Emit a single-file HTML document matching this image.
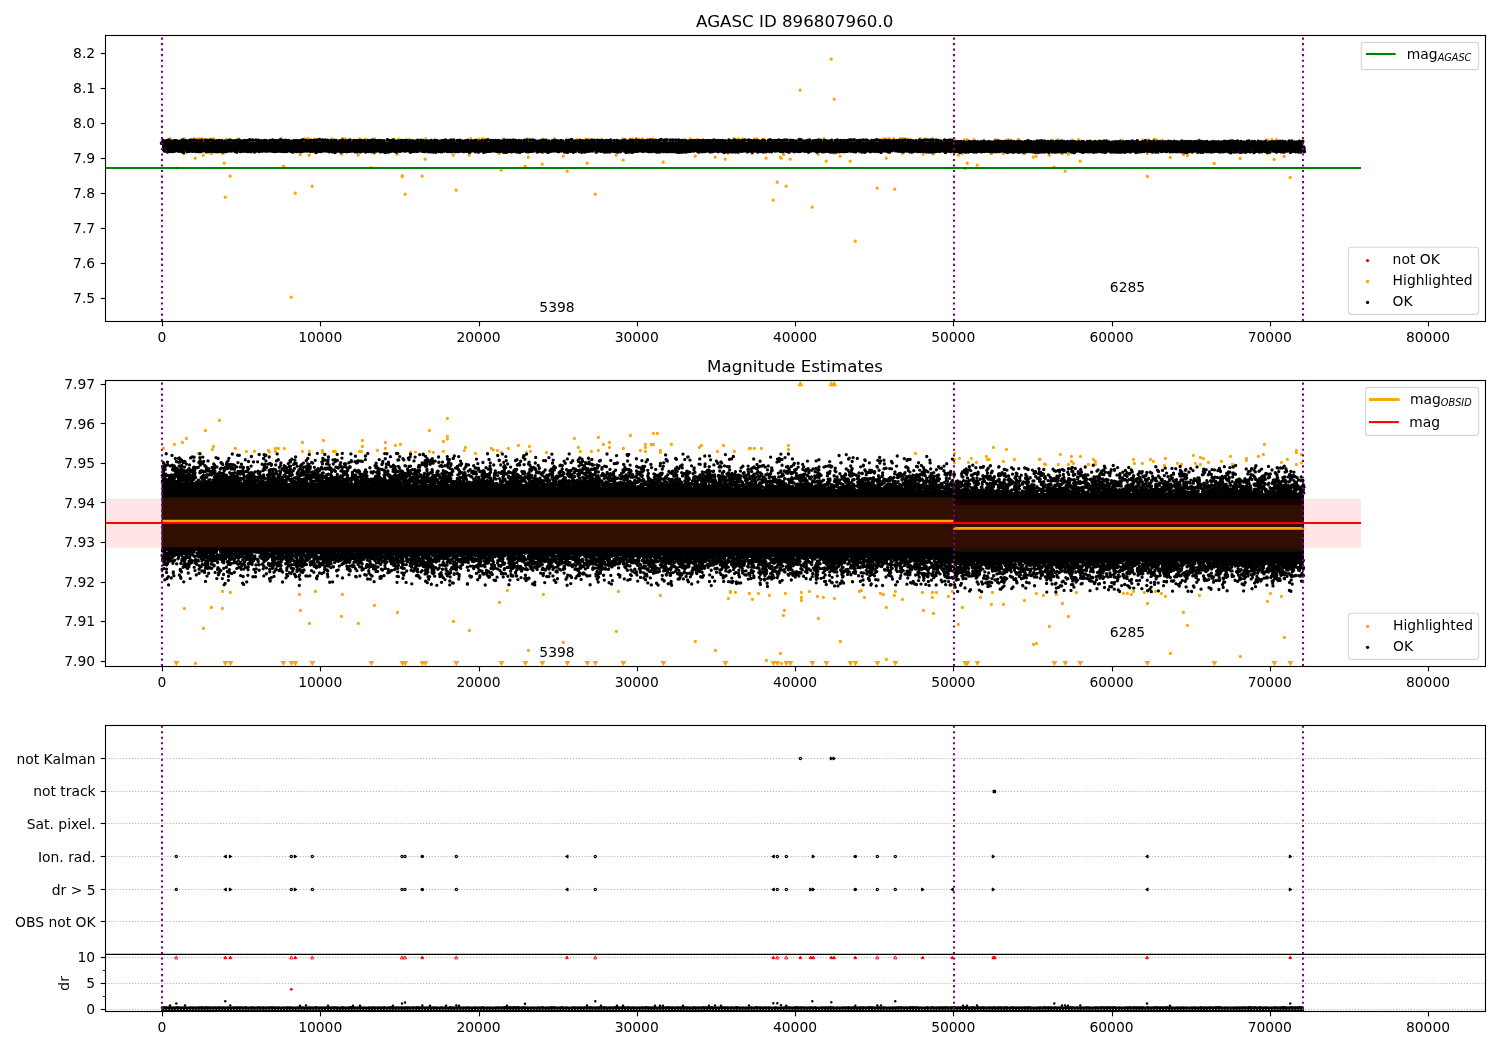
<!DOCTYPE html>
<html><head><meta charset="utf-8"><title>AGASC ID 896807960.0</title>
<style>html,body{margin:0;padding:0;background:#fff}svg{display:block;will-change:transform}</style></head>
<body>
<svg width="1500" height="1050" viewBox="0 0 1500 1050" font-family='"DejaVu Sans", "Liberation Sans", sans-serif' font-size="13.89px" fill="#000">
<rect width="1500" height="1050" fill="#fff"/>
<clipPath id="c1"><rect x="105.5" y="35.5" width="1380.0" height="286.0"/></clipPath>
<g clip-path="url(#c1)">
<path d="M176.5 167.9h0M184.2 153.7h0M195.2 158.2h0M203.2 155.2h0M211.5 153.5h0M222.5 153.5h0M224.2 163.2h0M230.2 176.2h0M225.2 197.2h0M283.5 166.2h0M300.2 154.5h0M309.2 155.2h0M315.2 152.5h0M312.2 186.2h0M295.2 193.2h0M291.2 297.2h0M341.5 154.2h0M358.2 155.2h0M374.2 153.2h0M371.2 167.6h0M397.2 154.2h0M402.2 175.7h0M402.2 176.7h0M405.2 194.2h0M422.2 176.2h0M425.2 159.2h0M453.2 155.2h0M456.2 190.2h0M469.2 155.2h0M499.2 153.5h0M501.2 170.2h0M507.0 152.5h0M525.2 166.2h0M528.2 157.2h0M542.2 164.2h0M543.2 152.5h0M563.2 156.2h0M567.2 171.2h0M587.2 163.2h0M595.2 194.2h0M616.2 155.2h0M623.2 160.2h0M660.2 152.5h0M663.2 162.2h0M695.2 156.2h0M715.2 157.2h0M725.2 159.2h0M728.2 153.2h0M752.2 153.5h0M766.2 158.2h0M780.2 157.2h0M781.2 158.2h0M783.7 154.5h0M790.2 159.2h0M777.2 182.2h0M786.2 186.2h0M773.2 200.2h0M812.2 207.2h0M818.2 154.2h0M826.2 161.2h0M834.2 153.2h0M840.2 156.2h0M850.2 161.2h0M855.2 241.2h0M877.2 188.2h0M886.2 158.2h0M894.7 189.2h0M831.2 59.2h0M800.2 90.2h0M834.2 99.2h0M902.2 153.2h0M923.2 154.2h0M933.2 154.2h0M958.2 155.2h0M962.2 153.7h0M967.2 163.2h0M977.2 165.2h0M965.2 168.7h0M991.2 153.7h0M1003.2 153.7h0M1024.2 153.7h0M1033.2 157.2h0M1036.2 156.2h0M1049.2 155.2h0M1054.2 167.2h0M1065.2 171.2h0M1062.2 153.7h0M1068.2 154.2h0M1080.2 161.2h0M1147.4 176.4h0M1147.4 153.6h0M1170.2 157.4h0M1183.4 154.6h0M1187.4 155.6h0M1214.2 163.4h0M1240.2 158.4h0M1267.4 153.6h0M1274.2 159.4h0M1284.2 156.4h0M1290.2 177.4h0" stroke="#ffa500" stroke-width="3.3" stroke-linecap="round" fill="none" />
<path d="M170.3 138.7h0M183.9 138.7h0M194.3 138.9h0M197.0 139.1h0M199.4 139.0h0M202.2 138.7h0M210.3 139.3h0M213.7 138.8h0M226.6 139.5h0M238.1 139.0h0M281.2 138.6h0M304.7 138.9h0M308.4 138.7h0M314.5 139.3h0M318.7 139.1h0M331.9 138.9h0M342.6 138.7h0M345.3 138.8h0M359.8 139.0h0M366.0 139.1h0M374.6 138.9h0M394.0 139.2h0M399.1 139.1h0M409.3 139.4h0M425.7 138.9h0M470.8 138.7h0M478.8 139.3h0M482.6 139.0h0M485.0 139.2h0M502.9 139.1h0M527.8 138.9h0M542.9 139.1h0M554.4 139.0h0M576.6 139.5h0M585.7 139.2h0M588.4 139.2h0M601.8 139.5h0M622.8 138.9h0M630.2 139.2h0M632.4 139.0h0M636.4 138.7h0M639.1 139.3h0M642.6 138.8h0M650.1 139.4h0M653.0 139.0h0M663.8 139.4h0M684.6 139.4h0M690.2 139.0h0M697.1 139.4h0M733.9 138.7h0M738.0 138.8h0M742.9 139.0h0M754.7 138.8h0M756.8 139.0h0M763.8 139.1h0M799.5 139.2h0M809.5 139.2h0M823.9 138.6h0M851.1 139.3h0M876.0 139.3h0M883.4 139.0h0M886.7 139.2h0M889.4 138.7h0M893.9 138.7h0M900.5 138.6h0M902.5 138.7h0M905.7 138.9h0M908.0 139.4h0M920.4 138.7h0M925.6 138.9h0M932.6 138.7h0M955.4 140.4h0M964.3 139.9h0M967.3 139.6h0M973.9 139.7h0M995.3 139.6h0M997.6 140.4h0M1007.9 139.6h0M1018.5 139.5h0M1028.7 140.4h0M1052.6 140.1h0M1058.0 139.8h0M1062.0 140.2h0M1072.3 140.2h0M1078.7 139.7h0M1099.1 140.4h0M1122.1 140.2h0M1142.9 140.2h0M1147.7 140.0h0M1154.6 139.5h0M1156.9 139.8h0M1162.2 140.1h0M1198.7 139.9h0M1231.1 140.4h0M1267.2 139.8h0M1271.9 139.7h0M1276.3 139.7h0M1289.1 140.3h0" stroke="#ffa500" stroke-width="3.3" stroke-linecap="round" fill="none" />
<rect x="162.0" y="141.4" width="791.5" height="9.8" fill="#000"/>
<rect x="953" y="142.1" width="350.0" height="9.3" fill="#000"/>
<path d="M163.0 140.6h0M164.7 151.0h0M166.0 140.9h0M167.5 151.8h0M168.6 140.2h0M170.3 151.3h0M171.7 141.1h0M172.7 151.4h0M174.6 140.7h0M175.3 151.0h0M176.7 140.9h0M178.7 151.1h0M180.1 141.1h0M181.4 151.3h0M182.6 140.1h0M183.5 152.3h0M185.5 140.5h0M187.2 151.4h0M188.6 140.8h0M189.3 151.2h0M190.8 140.2h0M192.5 151.2h0M193.7 140.1h0M195.6 151.3h0M196.6 140.6h0M198.4 151.4h0M199.8 140.5h0M200.8 151.5h0M201.7 140.4h0M203.3 150.7h0M205.3 140.1h0M206.4 151.7h0M207.9 140.3h0M209.2 151.5h0M210.9 140.0h0M212.1 151.2h0M213.2 140.7h0M214.8 151.5h0M216.5 140.9h0M217.5 151.6h0M219.0 140.5h0M220.6 151.4h0M221.8 140.5h0M223.6 151.7h0M225.0 141.0h0M225.8 151.5h0M227.8 140.8h0M228.4 151.0h0M230.1 140.0h0M231.3 150.9h0M233.2 140.8h0M234.8 151.1h0M236.0 140.6h0M236.8 152.0h0M239.1 140.2h0M240.5 151.4h0M241.4 141.1h0M243.1 151.1h0M244.1 140.5h0M245.4 151.1h0M246.8 140.7h0M247.9 151.5h0M249.7 139.8h0M251.0 151.6h0M252.6 140.0h0M254.5 151.8h0M255.9 140.0h0M256.6 150.8h0M258.5 140.3h0M259.2 151.4h0M261.4 140.8h0M262.2 151.1h0M264.2 140.6h0M265.4 151.0h0M266.2 140.7h0M267.9 150.9h0M269.8 140.6h0M271.1 151.0h0M272.6 140.0h0M274.0 151.4h0M274.8 140.5h0M276.8 151.2h0M277.4 140.5h0M278.9 151.0h0M280.3 139.9h0M281.7 151.3h0M283.2 140.7h0M284.6 151.5h0M285.9 140.4h0M287.1 151.2h0M288.5 140.7h0M290.5 151.1h0M291.8 141.0h0M292.8 151.9h0M294.5 140.5h0M296.3 151.4h0M297.4 140.7h0M299.3 151.3h0M300.5 140.7h0M301.7 151.4h0M302.8 139.9h0M304.0 150.9h0M306.0 140.3h0M306.9 151.0h0M308.9 140.9h0M310.2 151.3h0M311.1 140.3h0M312.8 151.1h0M314.1 140.3h0M316.1 152.3h0M317.0 140.2h0M318.9 151.3h0M319.7 139.7h0M321.1 151.5h0M322.6 140.2h0M324.0 150.7h0M325.2 140.0h0M326.7 150.9h0M327.7 140.3h0M329.3 151.6h0M331.0 140.7h0M332.6 151.7h0M334.2 140.4h0M335.0 152.3h0M336.2 140.7h0M338.1 150.9h0M339.7 140.9h0M340.9 151.8h0M342.5 140.1h0M343.6 151.5h0M345.3 140.8h0M346.7 151.6h0M348.2 140.7h0M349.4 151.2h0M350.1 140.1h0M351.9 151.0h0M353.7 140.5h0M354.9 151.6h0M356.4 140.5h0M357.1 151.8h0M359.2 140.5h0M360.4 151.7h0M361.4 140.7h0M363.0 150.9h0M364.4 140.7h0M365.7 151.8h0M367.9 140.5h0M368.7 151.5h0M370.4 140.7h0M371.7 151.6h0M372.6 140.1h0M374.2 151.8h0M375.6 140.6h0M376.7 150.9h0M378.4 140.6h0M380.2 151.7h0M381.2 140.5h0M382.8 151.4h0M383.8 140.9h0M385.3 152.3h0M387.4 139.8h0M388.4 151.9h0M390.3 140.5h0M391.0 151.2h0M393.0 140.2h0M394.1 151.1h0M395.4 141.0h0M396.4 151.9h0M398.2 140.9h0M399.8 151.2h0M401.4 140.5h0M401.9 150.7h0M403.8 140.5h0M405.0 151.1h0M406.4 140.3h0M408.3 150.7h0M409.7 140.8h0M410.4 152.1h0M412.4 140.9h0M413.4 151.4h0M414.9 141.2h0M416.5 151.3h0M417.7 140.3h0M418.7 151.0h0M420.9 140.3h0M422.4 151.2h0M423.2 140.5h0M424.5 151.4h0M426.7 140.9h0M427.9 151.6h0M429.4 141.0h0M430.4 151.7h0M431.3 140.7h0M433.2 151.8h0M434.7 140.3h0M435.5 152.1h0M437.0 140.5h0M438.6 151.3h0M440.4 141.1h0M441.4 151.7h0M442.8 140.5h0M444.3 151.1h0M445.5 140.2h0M447.6 151.5h0M448.3 140.9h0M450.5 151.4h0M451.0 140.2h0M452.4 151.3h0M453.8 140.2h0M455.4 151.6h0M457.4 140.7h0M458.3 151.4h0M459.8 140.4h0M461.0 150.9h0M462.4 141.1h0M463.6 151.5h0M465.5 140.9h0M466.5 151.2h0M467.9 140.4h0M469.5 152.2h0M471.3 140.9h0M471.9 150.8h0M474.0 140.9h0M475.2 151.6h0M476.1 140.4h0M478.4 151.9h0M479.8 141.1h0M480.5 151.0h0M481.9 140.5h0M483.8 152.2h0M485.2 140.6h0M486.7 151.4h0M487.9 139.9h0M489.5 151.2h0M491.0 140.6h0M491.8 151.0h0M493.2 140.6h0M495.0 151.0h0M495.8 140.5h0M497.7 151.4h0M498.7 140.6h0M499.9 151.3h0M501.8 141.0h0M503.3 152.0h0M504.6 140.2h0M505.7 152.2h0M507.6 140.3h0M508.3 151.5h0M510.4 140.4h0M511.4 151.7h0M513.4 140.2h0M513.9 151.3h0M515.7 140.7h0M516.9 151.8h0M518.8 140.5h0M519.7 152.2h0M521.2 140.8h0M522.5 151.2h0M524.5 140.3h0M526.1 151.5h0M526.7 140.2h0M528.3 151.7h0M530.2 140.1h0M531.1 151.2h0M533.1 140.1h0M533.6 150.9h0M535.3 140.9h0M537.2 151.8h0M538.7 141.0h0M539.4 151.1h0M541.4 140.7h0M541.9 151.7h0M543.7 140.4h0M545.0 151.1h0M546.1 140.3h0M547.9 152.2h0M549.0 141.0h0M550.5 151.3h0M552.5 140.8h0M553.5 150.9h0M555.0 140.4h0M556.8 151.1h0M557.7 140.9h0M558.7 151.4h0M560.9 140.7h0M561.5 150.8h0M563.0 141.0h0M564.6 151.8h0M566.6 140.3h0M567.4 152.2h0M569.1 140.3h0M570.6 151.3h0M571.6 139.7h0M573.5 152.1h0M574.7 141.0h0M575.5 151.2h0M577.4 141.0h0M579.3 151.4h0M580.0 140.4h0M581.6 152.1h0M582.7 140.8h0M584.6 151.9h0M586.1 140.6h0M587.0 151.3h0M588.5 140.8h0M589.6 151.1h0M591.7 140.2h0M592.4 150.8h0M594.3 140.3h0M596.1 152.0h0M597.5 140.3h0M598.0 151.0h0M599.8 140.7h0M601.1 151.2h0M602.5 140.6h0M604.2 151.8h0M605.7 140.6h0M606.4 151.9h0M608.0 140.6h0M609.5 151.8h0M610.7 140.2h0M612.1 151.1h0M614.2 140.6h0M615.0 151.4h0M617.1 140.5h0M617.7 151.9h0M619.6 141.1h0M620.4 151.5h0M622.5 140.8h0M624.0 150.8h0M624.8 140.1h0M626.1 152.3h0M627.9 141.0h0M629.1 152.0h0M630.5 140.3h0M632.3 152.2h0M633.0 140.6h0M634.9 151.2h0M636.1 140.1h0M637.3 151.2h0M639.1 140.6h0M640.1 150.7h0M641.6 140.6h0M642.9 151.3h0M644.3 140.8h0M646.0 150.9h0M647.0 140.4h0M648.9 151.6h0M649.8 140.1h0M651.8 151.4h0M652.8 140.3h0M654.9 151.3h0M655.9 140.4h0M657.1 152.0h0M659.1 140.4h0M659.7 151.7h0M661.1 139.7h0M663.2 151.4h0M664.5 140.4h0M666.0 151.4h0M666.7 139.8h0M668.5 151.6h0M670.2 140.0h0M671.3 151.4h0M672.6 140.1h0M673.8 151.5h0M675.8 140.0h0M676.8 151.9h0M678.7 140.2h0M679.2 152.2h0M681.5 140.5h0M682.0 152.1h0M683.7 140.9h0M685.3 151.9h0M686.3 140.8h0M687.7 151.4h0M689.7 140.8h0M690.5 151.2h0M692.1 140.5h0M693.5 151.0h0M694.7 140.7h0M696.8 150.8h0M697.9 140.7h0M698.7 151.9h0M700.2 140.6h0M702.1 151.6h0M703.2 140.4h0M704.9 151.4h0M706.4 140.5h0M707.5 150.8h0M709.1 140.5h0M710.1 151.8h0M712.1 140.5h0M712.9 151.5h0M714.2 140.1h0M715.9 151.0h0M717.3 140.5h0M718.3 151.6h0M719.8 140.7h0M721.9 151.5h0M722.6 140.5h0M724.3 152.2h0M725.4 140.8h0M727.7 151.8h0M728.9 140.2h0M730.5 151.5h0M731.9 140.9h0M732.5 151.8h0M734.6 140.0h0M735.5 151.8h0M736.7 140.9h0M738.2 151.9h0M739.4 140.5h0M741.6 151.2h0M742.4 140.5h0M743.8 150.8h0M745.1 140.1h0M747.2 151.7h0M748.6 140.1h0M749.9 151.0h0M751.0 140.6h0M752.3 152.0h0M753.9 140.6h0M755.6 151.0h0M757.1 140.6h0M757.9 151.8h0M759.2 141.1h0M760.9 151.3h0M762.5 140.4h0M763.3 151.8h0M764.5 140.8h0M766.2 151.6h0M768.3 140.6h0M769.4 151.3h0M770.1 139.9h0M771.6 151.6h0M773.3 140.5h0M775.2 151.0h0M775.9 140.6h0M777.1 150.7h0M778.9 140.0h0M780.3 151.2h0M781.9 140.6h0M782.9 151.6h0M784.6 140.1h0M786.4 151.2h0M787.0 140.0h0M788.9 152.0h0M790.5 140.4h0M791.4 150.7h0M793.1 140.5h0M794.3 151.6h0M795.7 141.0h0M797.4 151.2h0M799.0 139.9h0M800.0 151.4h0M801.1 139.9h0M803.1 150.7h0M804.3 141.0h0M805.2 151.2h0M807.1 140.5h0M808.5 151.9h0M809.5 140.3h0M811.0 150.9h0M813.0 140.8h0M814.2 150.7h0M815.7 140.7h0M816.8 151.8h0M818.2 140.2h0M819.2 151.2h0M820.5 140.3h0M822.6 151.7h0M824.1 140.7h0M825.0 151.5h0M826.5 140.8h0M828.0 151.2h0M829.5 141.1h0M830.5 152.0h0M831.7 140.3h0M833.3 151.8h0M835.4 140.7h0M836.2 152.0h0M837.6 140.2h0M839.6 151.6h0M840.8 140.6h0M842.5 151.4h0M843.7 140.7h0M845.2 151.4h0M846.4 140.6h0M847.4 151.2h0M849.1 140.0h0M850.8 151.1h0M851.3 140.0h0M853.6 151.3h0M854.2 139.9h0M855.5 151.7h0M857.5 140.7h0M859.0 150.9h0M860.3 140.4h0M861.9 151.9h0M863.4 140.0h0M864.8 152.1h0M866.2 140.0h0M866.9 151.0h0M868.1 140.8h0M870.3 151.6h0M871.7 140.6h0M872.6 151.0h0M873.8 140.7h0M875.3 151.3h0M876.9 139.8h0M878.2 151.3h0M880.0 140.4h0M881.0 152.2h0M882.6 140.8h0M884.1 150.8h0M885.3 140.4h0M887.1 151.3h0M888.4 140.5h0M889.3 152.0h0M890.6 140.8h0M892.1 150.6h0M893.5 140.7h0M895.7 150.7h0M896.6 140.5h0M898.3 151.1h0M899.4 140.4h0M901.1 151.2h0M902.6 140.3h0M903.3 151.7h0M905.0 140.0h0M906.5 151.0h0M908.1 140.7h0M909.5 151.6h0M910.5 140.4h0M911.9 152.0h0M913.0 140.9h0M914.3 151.2h0M916.0 140.9h0M917.6 151.4h0M919.4 140.2h0M920.4 151.5h0M922.1 140.7h0M923.3 151.3h0M924.4 140.1h0M926.3 151.7h0M927.6 140.1h0M928.7 151.8h0M930.3 140.1h0M931.6 152.0h0M932.7 140.2h0M934.2 151.7h0M936.1 140.1h0M936.9 151.2h0M938.4 140.5h0M939.7 151.3h0M941.1 141.1h0M943.0 151.0h0M944.7 140.0h0M945.5 152.3h0M947.3 140.7h0M948.3 151.1h0M949.9 140.0h0M950.9 151.4h0M952.1 140.4h0M954.3 151.7h0M955.4 141.8h0M956.8 151.3h0M958.3 141.6h0M959.8 152.3h0M960.9 141.7h0M962.6 151.6h0M963.5 141.8h0M965.6 152.0h0M966.8 142.0h0M968.2 151.8h0M969.4 141.5h0M970.9 151.2h0M972.1 141.9h0M973.8 151.8h0M974.8 141.6h0M976.4 151.8h0M977.7 141.8h0M979.6 151.3h0M980.8 141.9h0M981.9 151.7h0M983.9 141.0h0M984.8 151.3h0M986.5 142.1h0M987.6 151.2h0M989.1 141.7h0M990.6 151.7h0M991.9 142.0h0M993.2 151.6h0M995.0 141.4h0M996.2 151.6h0M997.7 141.2h0M999.3 151.5h0M999.8 141.4h0M1001.5 150.9h0M1002.9 141.6h0M1004.6 151.5h0M1005.6 141.4h0M1007.4 152.3h0M1008.6 141.4h0M1010.3 151.6h0M1011.1 141.2h0M1013.1 152.1h0M1014.3 141.6h0M1015.7 151.4h0M1017.5 141.5h0M1018.5 152.1h0M1020.1 141.6h0M1021.0 151.7h0M1022.2 142.0h0M1023.9 152.1h0M1025.2 141.5h0M1026.6 151.6h0M1027.9 140.9h0M1029.8 151.5h0M1030.7 141.5h0M1032.4 151.6h0M1033.9 141.8h0M1035.1 152.3h0M1037.0 141.1h0M1038.3 152.3h0M1039.7 141.2h0M1041.1 151.8h0M1041.7 140.9h0M1044.1 151.9h0M1044.8 141.2h0M1046.0 151.4h0M1048.1 141.5h0M1048.9 152.3h0M1050.9 141.3h0M1052.4 151.8h0M1053.7 141.8h0M1055.2 152.0h0M1056.5 141.3h0M1057.8 151.7h0M1059.2 141.6h0M1060.8 151.7h0M1061.6 141.4h0M1062.8 151.7h0M1064.2 141.6h0M1065.6 151.7h0M1067.4 141.7h0M1069.2 150.9h0M1070.5 141.6h0M1071.7 151.9h0M1073.3 141.5h0M1074.3 152.4h0M1075.4 141.8h0M1077.3 151.0h0M1078.7 141.8h0M1080.4 151.5h0M1081.9 141.7h0M1082.8 152.2h0M1083.7 141.8h0M1085.7 151.5h0M1087.4 141.5h0M1088.4 151.7h0M1090.1 141.4h0M1091.1 151.6h0M1092.7 142.0h0M1093.8 152.1h0M1095.3 141.7h0M1096.6 151.7h0M1098.7 141.8h0M1099.9 151.5h0M1100.8 141.5h0M1102.5 151.8h0M1104.1 141.0h0M1105.4 152.2h0M1106.6 141.1h0M1107.8 150.9h0M1109.1 142.1h0M1110.9 151.9h0M1112.5 142.1h0M1113.7 151.8h0M1115.1 141.8h0M1116.5 151.9h0M1117.5 141.8h0M1119.2 152.0h0M1120.2 141.3h0M1121.5 152.0h0M1123.8 141.8h0M1124.7 152.1h0M1126.5 141.7h0M1127.4 151.5h0M1128.9 141.5h0M1130.3 151.8h0M1132.2 141.1h0M1133.3 151.0h0M1134.2 141.9h0M1136.1 152.3h0M1137.3 140.9h0M1138.7 151.8h0M1140.6 142.3h0M1141.6 151.6h0M1142.6 141.8h0M1144.1 151.3h0M1145.3 140.9h0M1147.4 151.2h0M1149.1 141.2h0M1150.4 151.2h0M1150.9 141.8h0M1152.5 152.0h0M1153.9 141.1h0M1155.9 151.9h0M1157.4 141.8h0M1158.0 151.8h0M1160.0 141.6h0M1161.6 151.4h0M1163.1 141.8h0M1163.5 150.9h0M1165.6 141.9h0M1166.4 151.5h0M1168.4 141.3h0M1170.0 151.7h0M1170.6 141.5h0M1172.5 151.6h0M1174.0 141.3h0M1175.5 151.5h0M1176.7 141.8h0M1177.9 151.6h0M1179.7 142.2h0M1181.1 151.7h0M1182.0 141.1h0M1184.1 151.9h0M1185.3 141.5h0M1186.5 152.5h0M1188.1 141.7h0M1189.0 151.6h0M1191.0 141.5h0M1192.2 151.8h0M1193.8 141.9h0M1194.6 150.9h0M1196.0 141.6h0M1197.7 152.1h0M1199.4 141.0h0M1200.7 152.1h0M1202.2 141.7h0M1203.0 152.1h0M1204.9 141.8h0M1206.4 151.5h0M1207.0 141.7h0M1209.1 151.4h0M1210.5 142.1h0M1211.3 151.8h0M1213.2 141.6h0M1214.1 151.4h0M1216.1 141.9h0M1217.2 151.2h0M1218.9 141.9h0M1219.7 151.8h0M1221.8 142.0h0M1222.8 151.7h0M1224.3 141.3h0M1225.3 151.3h0M1227.2 141.5h0M1228.5 151.6h0M1229.8 141.3h0M1230.7 152.6h0M1232.5 141.2h0M1234.1 152.0h0M1235.1 141.7h0M1236.6 151.7h0M1237.7 141.0h0M1240.1 152.2h0M1241.0 141.7h0M1242.2 152.0h0M1243.7 142.2h0M1245.5 152.1h0M1247.1 141.4h0M1247.5 151.4h0M1249.1 141.1h0M1250.4 151.7h0M1252.6 141.6h0M1254.0 152.3h0M1254.6 141.7h0M1256.3 151.2h0M1258.3 141.4h0M1259.3 151.8h0M1261.1 141.8h0M1261.9 151.6h0M1263.1 142.2h0M1265.3 151.4h0M1265.7 141.4h0M1267.5 152.2h0M1269.4 142.0h0M1269.9 152.0h0M1272.0 141.8h0M1273.7 151.1h0M1274.2 141.9h0M1276.4 151.9h0M1277.2 141.7h0M1279.1 151.2h0M1280.0 141.4h0M1281.2 151.7h0M1282.7 141.4h0M1284.0 151.9h0M1285.3 141.8h0M1286.9 151.0h0M1289.0 141.4h0M1290.4 152.2h0M1291.8 141.2h0M1292.7 151.2h0M1294.6 142.0h0M1295.7 151.6h0M1296.8 142.0h0M1298.4 151.8h0M1299.4 141.4h0M1300.8 151.9h0M1302.7 141.3h0M1304.4 151.4h0M161.6 143.2h0M162.3 142.8h0M1304.0 148.5h0M1303.6 147.0h0" stroke="#000" stroke-width="3.7" stroke-linecap="round" fill="none" />
<line x1="105.5" y1="168" x2="1361" y2="168" stroke="#008000" stroke-width="2.08"/>
<line x1="162.0" y1="321.5" x2="162.0" y2="35.5" stroke="#800080" stroke-width="2.08" stroke-dasharray="2.08 3.44" stroke-dashoffset="-0.35"/><line x1="954.0" y1="321.5" x2="954.0" y2="35.5" stroke="#800080" stroke-width="2.08" stroke-dasharray="2.08 3.44" stroke-dashoffset="-0.35"/><line x1="1303.0" y1="321.5" x2="1303.0" y2="35.5" stroke="#800080" stroke-width="2.08" stroke-dasharray="2.08 3.44" stroke-dashoffset="-0.35"/>
</g>
<text x="557" y="311.8" text-anchor="middle">5398</text>
<text x="1127.5" y="291.8" text-anchor="middle">6285</text>
<rect x="105.5" y="35.5" width="1380.0" height="286.0" fill="none" stroke="#000" stroke-width="1.11"/>
<line x1="162.5" y1="321.5" x2="162.5" y2="326.36" stroke="#000" stroke-width="1.11"/><text x="162.0" y="341.5" text-anchor="middle">0</text><line x1="320.5" y1="321.5" x2="320.5" y2="326.36" stroke="#000" stroke-width="1.11"/><text x="320.2" y="341.5" text-anchor="middle">10000</text><line x1="479.5" y1="321.5" x2="479.5" y2="326.36" stroke="#000" stroke-width="1.11"/><text x="478.5" y="341.5" text-anchor="middle">20000</text><line x1="637.5" y1="321.5" x2="637.5" y2="326.36" stroke="#000" stroke-width="1.11"/><text x="636.7" y="341.5" text-anchor="middle">30000</text><line x1="795.5" y1="321.5" x2="795.5" y2="326.36" stroke="#000" stroke-width="1.11"/><text x="795.0" y="341.5" text-anchor="middle">40000</text><line x1="953.5" y1="321.5" x2="953.5" y2="326.36" stroke="#000" stroke-width="1.11"/><text x="953.2" y="341.5" text-anchor="middle">50000</text><line x1="1112.5" y1="321.5" x2="1112.5" y2="326.36" stroke="#000" stroke-width="1.11"/><text x="1111.5" y="341.5" text-anchor="middle">60000</text><line x1="1270.5" y1="321.5" x2="1270.5" y2="326.36" stroke="#000" stroke-width="1.11"/><text x="1269.8" y="341.5" text-anchor="middle">70000</text><line x1="1428.5" y1="321.5" x2="1428.5" y2="326.36" stroke="#000" stroke-width="1.11"/><text x="1428.0" y="341.5" text-anchor="middle">80000</text>
<line x1="105.5" y1="53.5" x2="100.64" y2="53.5" stroke="#000" stroke-width="1.11"/><text x="95.2" y="58.3" text-anchor="end">8.2</text><line x1="105.5" y1="88.5" x2="100.64" y2="88.5" stroke="#000" stroke-width="1.11"/><text x="95.2" y="93.3" text-anchor="end">8.1</text><line x1="105.5" y1="123.5" x2="100.64" y2="123.5" stroke="#000" stroke-width="1.11"/><text x="95.2" y="128.3" text-anchor="end">8.0</text><line x1="105.5" y1="158.5" x2="100.64" y2="158.5" stroke="#000" stroke-width="1.11"/><text x="95.2" y="163.3" text-anchor="end">7.9</text><line x1="105.5" y1="193.5" x2="100.64" y2="193.5" stroke="#000" stroke-width="1.11"/><text x="95.2" y="198.3" text-anchor="end">7.8</text><line x1="105.5" y1="228.5" x2="100.64" y2="228.5" stroke="#000" stroke-width="1.11"/><text x="95.2" y="233.3" text-anchor="end">7.7</text><line x1="105.5" y1="263.5" x2="100.64" y2="263.5" stroke="#000" stroke-width="1.11"/><text x="95.2" y="268.3" text-anchor="end">7.6</text><line x1="105.5" y1="298.5" x2="100.64" y2="298.5" stroke="#000" stroke-width="1.11"/><text x="95.2" y="303.3" text-anchor="end">7.5</text>
<text x="794.7" y="26.5" text-anchor="middle" font-size="16.67px">AGASC ID 896807960.0</text>
<rect x="1361.3" y="42.4" width="117.29999999999995" height="27.199999999999996" rx="2.8" ry="2.8" fill="#fff" fill-opacity="0.8" stroke="#ccc" stroke-opacity="0.8" stroke-width="1.11"/>
<line x1="1366.9" y1="54" x2="1394.6" y2="54" stroke="#008000" stroke-width="2.08" stroke-linecap="square"/>
<text x="1406.8" y="59">mag<tspan font-size="9.72px" font-style="italic" dy="2.1">AGASC</tspan></text>
<rect x="1348.4" y="247.2" width="130.19999999999982" height="67.19999999999999" rx="2.8" ry="2.8" fill="#fff" fill-opacity="0.8" stroke="#ccc" stroke-opacity="0.8" stroke-width="1.11"/>
<circle cx="1367.6" cy="260.6" r="1.65" fill="#f00"/>
<text x="1392.6" y="264.0">not OK</text>
<circle cx="1367.6" cy="281.5" r="1.65" fill="#ffa500"/>
<text x="1392.6" y="284.9">Highlighted</text>
<circle cx="1367.6" cy="302.40000000000003" r="1.65" fill="#000"/>
<text x="1392.6" y="305.8">OK</text>
<clipPath id="c2"><rect x="105.5" y="380.5" width="1380.0" height="286.0"/></clipPath>
<g clip-path="url(#c2)">
<path d="M173.5 660.9h5.8l-2.9 5.4zM222.5 660.9h5.8l-2.9 5.4zM227.5 660.9h5.8l-2.9 5.4zM280.5 660.9h5.8l-2.9 5.4zM288.5 660.9h5.8l-2.9 5.4zM292.5 660.9h5.8l-2.9 5.4zM309.5 660.9h5.8l-2.9 5.4zM368.5 660.9h5.8l-2.9 5.4zM399.5 660.9h5.8l-2.9 5.4zM402.3 660.9h5.8l-2.9 5.4zM419.5 660.9h5.8l-2.9 5.4zM422.5 660.9h5.8l-2.9 5.4zM453.5 660.9h5.8l-2.9 5.4zM498.5 660.9h5.8l-2.9 5.4zM522.5 660.9h5.8l-2.9 5.4zM539.5 660.9h5.8l-2.9 5.4zM564.5 660.9h5.8l-2.9 5.4zM584.5 660.9h5.8l-2.9 5.4zM592.5 660.9h5.8l-2.9 5.4zM620.5 660.9h5.8l-2.9 5.4zM660.5 660.9h5.8l-2.9 5.4zM722.5 660.9h5.8l-2.9 5.4zM770.5 660.9h5.8l-2.9 5.4zM774.5 660.9h5.8l-2.9 5.4zM783.5 660.9h5.8l-2.9 5.4zM787.5 660.9h5.8l-2.9 5.4zM809.5 660.9h5.8l-2.9 5.4zM823.5 660.9h5.8l-2.9 5.4zM847.5 660.9h5.8l-2.9 5.4zM852.5 660.9h5.8l-2.9 5.4zM874.5 660.9h5.8l-2.9 5.4zM892.5 660.9h5.8l-2.9 5.4zM962.5 660.9h5.8l-2.9 5.4zM964.5 660.9h5.8l-2.9 5.4zM974.5 660.9h5.8l-2.9 5.4zM1051.5 660.9h5.8l-2.9 5.4zM1062.5 660.9h5.8l-2.9 5.4zM1077.5 660.9h5.8l-2.9 5.4zM1144.5 660.9h5.8l-2.9 5.4zM1211.5 660.9h5.8l-2.9 5.4zM1271.5 660.9h5.8l-2.9 5.4zM1287.5 660.9h5.8l-2.9 5.4zM797.5 386.2h5.8l-2.9 -5.4zM828.5 386.2h5.8l-2.9 -5.4zM831.3 386.2h5.8l-2.9 -5.4z" fill="#ffa500"/>
<path d="M163.6 448.2h0M174.4 444.4h0M182.4 442.4h0M186.4 438.4h0M198.4 453.4h0M205.4 430.4h0M213.4 446.4h0M212.4 449.4h0M219.4 420.4h0M235.4 448.4h0M246.4 451.4h0M254.4 451.4h0M268.4 450.4h0M269.4 452.0h0M275.4 448.4h0M275.4 451.4h0M278.4 448.4h0M284.4 448.4h0M302.4 442.4h0M302.4 451.4h0M309.4 451.4h0M323.4 440.4h0M322.4 450.4h0M322.4 452.4h0M333.4 451.4h0M335.4 451.4h0M362.4 440.4h0M362.4 446.4h0M361.4 451.4h0M359.4 451.4h0M377.4 450.4h0M385.4 442.4h0M385.4 448.4h0M395.4 445.4h0M400.4 444.4h0M410.4 452.0h0M415.4 452.0h0M429.4 430.4h0M429.4 451.4h0M433.4 452.4h0M443.4 441.4h0M443.4 451.4h0M447.4 418.4h0M447.4 436.4h0M447.4 439.0h0M465.4 447.4h0M464.4 450.4h0M475.4 453.4h0M491.4 448.4h0M493.4 450.0h0M497.4 450.4h0M501.4 452.4h0M508.4 448.4h0M518.4 445.4h0M529.4 446.4h0M526.4 452.4h0M530.4 451.4h0M546.4 452.4h0M574.4 438.4h0M578.4 447.4h0M580.4 451.4h0M591.4 451.4h0M598.4 437.4h0M598.4 450.4h0M603.4 444.4h0M609.4 442.4h0M609.4 447.4h0M623.4 448.4h0M630.4 435.4h0M640.4 450.4h0M645.4 444.4h0M645.4 447.4h0M645.4 451.4h0M651.4 444.4h0M653.4 444.4h0M653.4 433.4h0M657.4 433.4h0M660.4 450.4h0M660.4 452.4h0M671.4 444.4h0M699.4 447.4h0M701.4 445.4h0M717.4 451.4h0M723.4 445.4h0M734.4 451.4h0M749.4 448.4h0M750.4 448.4h0M754.4 448.4h0M761.4 448.4h0M788.4 445.4h0M788.4 449.4h0M915.4 453.4h0M954.4 453.4h0M954.4 459.4h0M954.4 463.0h0M959.4 458.4h0M968.4 462.4h0M971.4 458.4h0M976.4 462.4h0M986.4 456.4h0M987.4 459.4h0M989.4 459.4h0M993.4 447.4h0M1003.4 461.4h0M1006.4 449.4h0M1014.4 459.4h0M1039.4 459.4h0M1044.4 464.0h0M1040.0 459.4h0M1045.4 464.4h0M1058.4 464.4h0M1060.4 454.4h0M1068.4 464.4h0M1071.4 456.4h0M1071.4 461.4h0M1073.4 463.4h0M1080.4 456.4h0M1088.4 464.4h0M1093.4 459.4h0M1095.4 461.4h0M1095.4 464.4h0M1133.4 459.4h0M1134.4 463.4h0M1142.4 463.4h0M1150.4 459.4h0M1153.4 461.4h0M1165.4 458.4h0M1164.4 465.4h0M1177.4 463.4h0M1181.4 464.4h0M1193.4 455.4h0M1195.4 463.4h0M1200.4 457.4h0M1203.4 458.4h0M1200.4 464.4h0M1208.4 462.4h0M1221.4 461.4h0M1230.4 456.4h0M1232.4 464.4h0M1246.4 458.4h0M1246.4 460.4h0M1258.4 456.4h0M1263.4 454.4h0M1264.4 444.4h0M1281.4 462.4h0M1287.4 459.4h0M1296.4 450.4h0M1296.4 452.4h0M1296.4 464.4h0M1301.4 454.4h0M1301.4 463.0h0M195.4 663.4h0M184.4 608.4h0M203.4 628.4h0M211.4 607.4h0M222.4 608.4h0M222.4 591.4h0M230.4 592.4h0M299.4 594.4h0M300.4 610.4h0M309.4 623.4h0M315.4 591.4h0M342.4 594.4h0M341.4 616.4h0M358.4 623.4h0M374.4 605.4h0M397.4 612.4h0M453.4 621.4h0M469.4 630.4h0M499.4 602.4h0M507.4 590.4h0M528.4 650.4h0M543.4 594.4h0M563.4 642.4h0M616.4 631.4h0M618.4 591.4h0M660.4 595.4h0M695.4 641.4h0M715.4 650.4h0M728.4 598.4h0M730.4 591.4h0M730.4 592.4h0M735.4 592.4h0M749.4 593.4h0M752.4 599.4h0M758.4 593.4h0M769.4 595.4h0M766.4 660.4h0M780.4 653.4h0M781.4 663.4h0M784.4 610.4h0M783.4 615.4h0M785.4 593.4h0M801.4 592.4h0M801.4 597.4h0M801.4 600.4h0M809.4 591.4h0M817.4 596.4h0M818.4 618.4h0M823.4 597.4h0M834.4 598.4h0M840.4 641.4h0M859.4 591.4h0M861.4 590.4h0M864.4 597.4h0M880.4 593.4h0M883.4 594.4h0M886.4 607.4h0M886.4 659.4h0M894.4 595.4h0M895.4 591.4h0M902.4 599.4h0M922.4 592.4h0M923.4 610.4h0M932.4 592.4h0M932.4 597.4h0M933.4 613.4h0M936.4 592.4h0M948.4 596.4h0M952.4 591.4h0M958.4 624.4h0M962.4 607.4h0M980.4 597.4h0M991.4 604.4h0M992.4 592.4h0M1003.4 604.4h0M1024.4 600.4h0M1033.4 644.4h0M1036.4 643.4h0M1036.4 593.4h0M1043.4 595.4h0M1049.4 626.4h0M1056.4 594.4h0M1062.4 603.4h0M1068.4 616.4h0M1076.4 592.4h0M1123.4 593.4h0M1127.4 593.4h0M1131.4 594.4h0M1133.4 591.4h0M1144.4 592.4h0M1147.4 603.4h0M1155.4 591.4h0M1161.4 593.4h0M1165.4 596.4h0M1170.4 653.4h0M1183.4 612.4h0M1187.4 625.4h0M1199.4 595.4h0M1240.4 656.4h0M1267.4 601.4h0M1270.4 593.4h0M1281.4 596.4h0M1284.4 637.4h0" stroke="#ffa500" stroke-width="3.2" stroke-linecap="round" fill="none" />
<path d="M161.5 481.9L954 490.6V558.9L161.5 550.2Z" fill="#000"/>
<rect x="953.5" y="493.0" width="350.5" height="68.3" fill="#000"/>
<path d="M162.1 569.5h0m0-14h0m.2 13.6h0m.1-87.7h0m0-6h0m.1 75.6h0m0 24.5h0m0-100.1h0m0 5.5h0m.2 68.4h0m0 11.5h0m0-79.3h0m0-15.4h0m0 .6h0m0 92.1h0m0-3.4h0m.1-6.3h0m.1-80.6h0m.4 9.1h0m.1-1.3h0m0-5h0m0 84.8h0m.1-83h0m0 5.7h0m0 79.1h0m0-95.2h0m.2 95.7h0m.1 2.8h0m0 .4h0m0-82.2h0m0 75.6h0m.1 9.5h0m.1-90.6h0m0 3h0m0 78.1h0m0 13.6h0m.1-9.5h0m.2-78.1h0m0-1.1h0m.1 81h0m0-79.2h0m0-3.5h0m.1 74.3h0m.1-77h0m.2 104.4h0m0-28.9h0m.1-.5h0m.1-73.7h0m.1-11.8h0m0 90.6h0m0-74.4h0m.1-11.7h0m0 9.7h0m0-12.7h0m.1 13.1h0m0 78.1h0m.1-4.8h0m.4 4h0m.1-76.8h0m.1-5.8h0m.1 75.4h0m.1-95.9h0m.1 27.6h0m.2 87.8h0m0 3.2h0m.1-7.5h0m0-10h0m.1 1.5h0m.1 1.3h0m0-82.1h0m0 87.4h0m.1-9.2h0m.2 24.7h0m0-96.6h0m0 77.7h0m.1-3.1h0m.1-76.5h0m.2-17.7h0m0 92.9h0m0 8.5h0m.1-4.5h0m.1-.3h0m0-78.2h0m.1-15.6h0m.5 91.5h0m0 20h0m0-15.6h0m.1 .6h0m0-81.5h0m.2-4.6h0m0 109.4h0m.2-31.2h0m.1-2.6h0m0 4.8h0m.1-76.5h0m.1 73.3h0m.4-75h0m0 74.5h0m.2-2.9h0m0-70.2h0m.1 81.9h0m.2-3h0m.1 2.8h0m0-2.1h0m.1-4.6h0m.1-73.5h0m.1-14.7h0m0 83.5h0m.2 .4h0m.3-72h0m0 74.8h0m.3 25.4h0m.1-24.2h0m.1-3.8h0m0-.8h0m0-74.2h0m.1 4.4h0m.1 81.2h0m0-78h0m.4-17h0m0-10.2h0m0 21.9h0m.2 5h0m0 75.2h0m.1-1.7h0m0 0h0m0-5h0m.1-85.5h0m.1 11.7h0m.1-7.2h0m.2 79.4h0m.1-80.3h0m0 94.4h0m.4 9.7h0m0-1.1h0m.1-19.7h0m.1-85.3h0m.1 82.7h0m.1-79.9h0m0 11.8h0m.1 72.8h0m0-1.5h0m.1 8.2h0m0 14.8h0m.2-100.8h0m.1 80.9h0m0-77.5h0m0-8.8h0m.1-3.7h0m0 4.6h0m.1-.6h0m.2 90.3h0m.3-92.3h0m.3 82.2h0m.1-91.7h0m.1 13h0m0 82.9h0m.1-77.4h0m0 4.2h0m.1-7.7h0m.1 9.1h0m.2-8.6h0m.3 7.8h0m.1-5.8h0m.1-3.6h0m0-10.8h0m.1 20.8h0m.2 70.5h0m0 11.1h0m.1-91.6h0m0-4.1h0m.2 82.2h0m.1 1h0m.2-77.3h0m.1-3.1h0m0 3h0m0 80.8h0m.5 4h0m.5-88.9h0m0 6.7h0m0-5.4h0m0 6.3h0m.1 80.6h0m0-99.8h0m0 22.3h0m.1 76.2h0m0-78h0m.1-2.9h0m0 6.2h0m0-19.9h0m.3 9.3h0m0 9.5h0m.2 71.7h0m.1-94.8h0m0 8.1h0m0 14.3h0m.1 94.7h0m0-23.3h0m.2 2.3h0m.4-92.5h0m.1 90.3h0m0-89.7h0m0 90.7h0m.2 16.6h0m0-96.8h0m0 1.5h0m.1 96.5h0m.1-92.9h0m.1-3.6h0m0 102.7h0m.1-117.5h0m.2 118.9h0m0-14.8h0m0-94.4h0m.1 84.9h0m.1-2.5h0m0 1.6h0m.2-78h0m0-1.4h0m0-3.1h0m.1-2h0m0 12.7h0m0-6.3h0m.1 96.8h0m.2-106.3h0m.1 95.4h0m0-5.2h0m.1-95.2h0m.2 100.4h0m0-1.7h0m0-85.6h0m.3 6.4h0m.3-2h0m0 2.6h0m.1 77.6h0m0-83.7h0m.1 75.2h0m0 3.4h0m.1-80.9h0m0 81.3h0m.1-73.6h0m0 87.5h0m.1-9.9h0m0-84.9h0m0 76.7h0m.1 3.3h0m.1 7.3h0m0-97.1h0m.1 7.7h0m0 88.6h0m.2 22.8h0m.2-17h0m.1-87.6h0m.1-2.9h0m.1 77.6h0m0-.3h0m.1-1.3h0m0-.8h0m0 11.8h0m.1-3.2h0m.1-91h0m0 85.7h0m0 .8h0m.1-92.3h0m.1 101.5h0m.1-81.5h0m.2 69.4h0m0-78.8h0m.1-10.2h0m0 97.8h0m.3-79.5h0m.1-.4h0m0 78.9h0m0 8.2h0m.1-95.6h0m0 4.7h0m.1 76.6h0m.1-70.6h0m0 68.3h0m0-69h0m.2-2.6h0m.1 77.7h0m0-5.5h0m.1-68.3h0m.2-18.3h0m0 6.8h0m0 10.5h0m.1-2.5h0m.1-7.2h0m.1 93.6h0m0-8.7h0m0-.4h0m.1-2.9h0m0 13h0m.1-86.7h0m.1 84.7h0m0-82h0m.4-1.9h0m.1 2.7h0m0 85.5h0m.1-93.8h0m0 2.7h0m0 73.7h0m.1 1.9h0m0-.7h0m.2 1.2h0m0-79.4h0m.1 78.7h0m0-74.7h0m.1 79.3h0m0-80.5h0m0-.3h0m.2 89h0m0 7.3h0m0-22.2h0m0 2.7h0m.1 10.5h0m0-94.7h0m.3 14h0m0 66.4h0m.1 17.2h0m0-88.4h0m.1 87.5h0m.1-89.9h0m0 85.1h0m0-9.9h0m0-71.1h0m.1 69.3h0m.1-70.8h0m0-10.1h0m0 95.5h0m.1-13h0m0-73.6h0m.2-8h0m.1-4.6h0m.1 92.7h0m.1-5.5h0m0-80.3h0m.1 6.3h0m.1 76.9h0m.1-80.2h0m.1 103.8h0m.1-108.2h0m.1 89.3h0m.2-9.2h0m0-92.6h0m0 13.4h0m.2 91.8h0m.2-91.7h0m.2 80.9h0m.1-71h0m.1 81.4h0m0-85.1h0m.2-2.5h0m0 .9h0m.3 78.3h0m0-72.6h0m.1-11.6h0m.1 6.8h0m0 3.3h0m0 80.6h0m.1-10h0m0-93.9h0m.2 96.8h0m0 1.4h0m.3-.3h0m0-71.8h0m.1 70.3h0m.3-78.8h0m.3 75.7h0m.1-78.3h0m0-4.4h0m.1 82.8h0m0 1.4h0m0-72.3h0m.1-10.3h0m.1 82.3h0m0-90.5h0m.2 9.1h0m.1 80.7h0m0-93.5h0m.1 110.1h0m0-15.6h0m.3-76.2h0m0-8.4h0m.1 89.3h0m.1-86.2h0m0 4.6h0m.1-6.1h0m.2 101.9h0m0-97.8h0m0 90.1h0m.1-2.4h0m.1-83.5h0m.3 82.4h0m.2-81.8h0m.2 5.4h0m.4 91.9h0m0-14.5h0m0-78.3h0m.3 82.1h0m.1-3.4h0m.3-4.9h0m0-88.2h0m.2 87.5h0m0-1.8h0m.1 .6h0m.3-4h0m.2-68.2h0m.4-.1h0m0 78.5h0m0-79.8h0m0-13h0m.1 93.6h0m.4-4.4h0m0-76.1h0m.1 1.9h0m.1-19.9h0m.1 106.7h0m.1-3.6h0m0 7.7h0m.1-21.1h0m0 4.7h0m0 11.9h0m.2-86.1h0m.2 .4h0m.1-19.9h0m.1 88.2h0m0-69.7h0m.1-23.9h0m0 15h0m.1-19h0m.1 6.8h0m.1 4.5h0m0 17.6h0m.2-11.6h0m.1 12.4h0m.1-10.9h0m0 81.6h0m.4-90.6h0m.1 14.2h0m0 88.9h0m.1-96h0m0-8.4h0m.3 20.9h0m0 71.1h0m.1 4.6h0m.1-75.4h0m0 71.7h0m0 1.6h0m.2 4.3h0m0 9.9h0m.1-18.5h0m0 1.2h0m.1-1.5h0m0 .3h0m.1-76h0m.1 74.7h0m0 13.2h0m.1-13.7h0m.2-70.7h0m0 72.2h0m.1-81.1h0m.1-14h0m0 26.4h0m.1-20h0m0 89.8h0m.1 0h0m.4-81.5h0m0 78.7h0m.1 5.6h0m.1-79.3h0m.1-15.4h0m0 93.8h0m0-80.1h0m0 77.1h0m.2 12.5h0m0-5.3h0m.2-79h0m.2 .2h0m0 71.8h0m.1 18.4h0m.1-93.8h0m0 1.7h0m.1 3.3h0m0 90.4h0m.1-17.3h0m.2-72.2h0m0 73.3h0m0-90.3h0m.1-.1h0m.2 83.7h0m0 8.4h0m.1 6.3h0m0-11.7h0m.2 28.9h0m0-18.4h0m0 4.8h0m0-96.4h0m0 84.7h0m.1 7.9h0m.3-81.2h0m.1 69h0m0-69.9h0m0 80.1h0m.1-95.4h0m.1 3.3h0m0 80.8h0m.1 10.8h0m0 5.8h0m.2-17.2h0m0-81.6h0m.2 8.8h0m0 88.2h0m.1-90.7h0m0 74.8h0m.1 .2h0m.1 26.3h0m0-19.3h0m.1-1.8h0m0-84.1h0m.2 97.5h0m.1-10.1h0m.4-88.4h0m0 93.8h0m.1 1.1h0m0 1.3h0m0-13.3h0m0 3.9h0m.1-95.8h0m.1 8.3h0m.1 81.9h0m0 10.2h0m.1-80.7h0m.2-9.5h0m0 88.4h0m0-9.3h0m.2 23h0m.1-104.5h0m.1 6.2h0m0 75.3h0m0-67h0m.3-12.5h0m.1 10.5h0m.2 86.8h0m0-18.3h0m.2-70.1h0m.2 79.8h0m.1-2.8h0m0-3.6h0m.1-.9h0m.2 5.9h0m0 10h0m.1-.2h0m0-16.4h0m.1-68.4h0m0 71.9h0m0-2.4h0m.1-70h0m.2 .6h0m0 75.3h0m0-85.1h0m.3 86.7h0m0-3.5h0m.2-81.7h0m.1 89.2h0m.1-92.1h0m0 88h0m.3 1.5h0m0 6.9h0m.2-94.1h0m.1-6.7h0m.1 5.3h0m0 83.3h0m0 1.8h0m.1-3.3h0m.1-83.6h0m.4-3.3h0m.1 5.4h0m0 7h0m0 73.2h0m.1-2.6h0m0-1.1h0m.5-69.9h0m0 85.3h0m0-95h0m.1 11.4h0m.1-17.4h0m0 90.7h0m0-74.2h0m.1 2.3h0m0 .5h0m.1 77.2h0m0-77.9h0m.1-3.1h0m0 77.4h0m.1 8.3h0m0 .7h0m.1-82.7h0m.1 67.1h0m0 .7h0m0-74.2h0m.1-5.5h0m0 80.7h0m.1-87.1h0m.1 94.6h0m.1-85.9h0m.1-5.5h0m0 83.5h0m0-68h0m0 72.9h0m.1-85.3h0m.1 1.2h0m0 88.1h0m.1 11.9h0m0-13.9h0m.2-2.1h0m.2-4h0m.2-69.3h0m.1 77.1h0m.2-102.6h0m0 21.4h0m.1-2.2h0m.1 74.8h0m.1-75.1h0m0 75.4h0m0-70.2h0m.1 68.2h0m.1 10.7h0m0-9.4h0m0-.2h0m.3 27.6h0m.1-111.7h0m.1 90.4h0m.2-79.9h0m.1 77.5h0m.2-.2h0m.1 14.7h0m.1-6.9h0m0-88.3h0m.1 83.2h0m.1 1.2h0m0-84.4h0m0 93.5h0m.2-109.2h0m.2 100.4h0m.1 15.9h0m.1-91.8h0m.1 89.8h0m0-95.7h0m.1 4.7h0m.1-5.7h0m0 4.2h0m.2 88.5h0m0-88.1h0m.1 92.2h0m.1-.5h0m.4-92.8h0m0-7.2h0m.1 83.5h0m0-.8h0m.5 1.5h0m.1-87.6h0m0 87.7h0m.3-4.9h0m0-71.7h0m0-6.8h0m.1 83.5h0m.1-6.7h0m.1 20.5h0m0-11.4h0m.1-96.6h0m.2 .5h0m0-.5h0m.1 18.5h0m.1-13h0m.1 7.7h0m0-2.5h0m0 5.2h0m0 71.2h0m0 1.6h0m.2-70.2h0m.2-3.7h0m.1 77h0m.1-71.6h0m0 76.3h0m0-76.8h0m0 67.8h0m.2-71.5h0m0 100h0m0-114.9h0m0 18.9h0m.1-.9h0m.2 80.2h0m.1-97.3h0m0 86.9h0m.1-.8h0m.3 4.9h0m.2-3.8h0m.1 6.1h0m0-84.3h0m.1 100.9h0m.1-97.1h0m0 5.1h0m0 78.4h0m.1 7.4h0m.1-92.6h0m0 87h0m.1-82.8h0m.1 72.2h0m0-.5h0m.1-81.3h0m0 114.5h0m.1-113.7h0m0-2.9h0m0 10h0m.1 80.1h0m.1-77.9h0m.1-.4h0m.3-.5h0m0 .2h0m.1 76.5h0m.2 27.2h0m0-102.3h0m0 72.6h0m0-84.4h0m.3-2.2h0m.1 8h0m.2 83.7h0m0-82.5h0m.1 74.6h0m0-67.7h0m.2 71.3h0m.3 2.1h0m.1 10.6h0m.1-103.2h0m0 11.2h0m.2 6.6h0m.1 73.9h0m0-4.5h0m.1-88.8h0m.1 16.1h0m.4 83.2h0m0 9.8h0m.2 .4h0m0-103.4h0m.1 14.8h0m.1-17.9h0m.1 90.8h0m.2-95.4h0m.1 103.4h0m0-85.5h0m.1 2.7h0m0 2.3h0m.1 96.6h0m0-101.9h0m.1 85h0m0 12.8h0m0-22.6h0m.1 3.5h0m0 5.3h0m0-81h0m0-14.5h0m.1-2.3h0m.1 85.5h0m0-69.1h0m.1-3.7h0m0-19h0m0 95.9h0m.5 15.5h0m0-12h0m.2 6.7h0m0-91.8h0m0 87h0m.2 3.9h0m0-6.6h0m0 1.5h0m.1-76h0m0 73.2h0m0 17.2h0m0-21.5h0m0 8.6h0m.1-82h0m.1 74.4h0m0-72.6h0m.1-1.7h0m0 86.6h0m0-100.3h0m.2 14.3h0m0-5.4h0m.2 79.5h0m0 4.5h0m.1-75.4h0m.1 68.4h0m.1-85.8h0m0 85.6h0m.1-69.1h0m0-11.9h0m.1 83.3h0m0-77.3h0m0 75.7h0m0-67.4h0m.1 68.2h0m0 12h0m.1-7.1h0m0-90.3h0m.2 9.9h0m0 3.1h0m0-5.1h0m0 .6h0m.3 99h0m0-90.3h0m.2 74.4h0m0 1.3h0m.1-5.8h0m.1-1.5h0m0-68.6h0m.1-4.3h0m0-1.2h0m0 73.9h0m0-97.5h0m.2 103.5h0m.1-77h0m0-7h0m.1-4.8h0m0 81.6h0m.3-85.6h0m.2 89.4h0m.1-71.4h0m.2-14.3h0m0 5.8h0m.1 4.8h0m.3 3.2h0m0 80.6h0m.3-80.6h0m.1 77h0m0-4.6h0m0-71.8h0m.1 67.4h0m0 10.7h0m0 11.3h0m.1-103h0m.1 7.1h0m0-10.9h0m0 93.5h0m.1-86.3h0m0 5.3h0m.3 1h0m.3 74.4h0m0-3.4h0m0 5.7h0m.2-74.8h0m.2 81.4h0m.2-80h0m.1 67.7h0m0-67.3h0m0 68.8h0m.1 4.5h0m.1 1.7h0m0-78.4h0m.1-1h0m.1 .6h0m.2-11.9h0m0 88.1h0m.2-72.1h0m0 85.5h0m.1-5.1h0m0-82.5h0m.1 75.3h0m0-80.3h0m.1-2h0m0 .1h0m.1 8h0m0 .1h0m.1 75.3h0m.4-80.6h0m0-21.5h0m.2 7.4h0m0 91.1h0m0-2.1h0m.1-80.1h0m0 6.3h0m0 1.1h0m.1 1.6h0m0 76.4h0m.1-6h0m.1 13.5h0m0-6.7h0m0 3.1h0m0-9h0m.4-68.7h0m0 .8h0m.2 67.6h0m.1 15.8h0m.1-9.5h0m0-4.1h0m.1-72.1h0m.1-26.3h0m.1 100.2h0m0-82.7h0m.1 9.6h0m0 74.6h0m.1-73.3h0m.1 70.6h0m.1-2.3h0m0 3.4h0m.1-4.9h0m0 5.7h0m.1-73.7h0m.2-8.5h0m0-2.5h0m0-4.4h0m.3 11.1h0m0 1.9h0m0-6.5h0m.1 102h0m0-23.4h0m.1 10.3h0m.1-9.7h0m.1-1h0m0 11.7h0m.3 5.8h0m.1-2.9h0m.1-102.3h0m.1 91.1h0m0 1h0m.3-72.4h0m.1-10.4h0m.1 80.8h0m.1 .2h0m0-75.8h0m.1-11.5h0m.1 97.2h0m.3 18.8h0m.1-23.4h0m.2-92.2h0m0 2.8h0m.2 81h0m0 25.2h0m.2-108.4h0m0 82.3h0m.1-72h0m.1 75h0m0 3.4h0m0 7.2h0m0-96.7h0m.1 117.1h0m.1-111.8h0m0 2.5h0m0-2.5h0m0 6.4h0m0-6.7h0m.1 96.8h0m0-86.2h0m.3-2.5h0m0-3h0m0 3h0m.1 .4h0m.2 72.7h0m.1 8.6h0m.1-4.5h0m.1 7.6h0m.1-88.5h0m.1 80.7h0m.1-76.4h0m.2 70h0m0-70.4h0m0 3.1h0m.1-24h0m.1 107.4h0m.1-13h0m.6-.6h0m0-2.4h0m0 16.1h0m.1-95.7h0m0 79.9h0m0 5h0m0 1.6h0m0 1.8h0m0-77h0m.2 67.7h0m.3 31.4h0m.1-30.7h0m.1-67.3h0m0 74.9h0m.1-78.5h0m0 76.6h0m.2-75.8h0m0 76.4h0m.1-.3h0m.1-86.7h0m0 7.9h0m0 0h0m.1-2.7h0m.1-8.3h0m.2 90.4h0m.1 17.4h0m.1-19.6h0m0-78.8h0m.1-8.4h0m0 101.4h0m.1-6.2h0m0 3.3h0m.2-11.5h0m0-79.9h0m.1 .8h0m0 74.6h0m0-66.9h0m0 71.5h0m0-94h0m.1 97h0m.1-75.9h0m0-13.8h0m.1 13h0m0-1.3h0m0 78.8h0m0 4.6h0m.1-5.9h0m0-5.4h0m.1 6.6h0m0-7.2h0m0-78.9h0m.1 4.6h0m.1 5.3h0m0-3.2h0m.1 71.3h0m.2-70.1h0m0 81.9h0m0-80.9h0m.2 71.2h0m.1-2.8h0m0-72h0m.1 5.3h0m0-3.9h0m.1-6.4h0m.1 87h0m0-6.4h0m0-78h0m0 76.4h0m0-70.3h0m.1 79.7h0m0-88.8h0m0 85.4h0m.1-1h0m0 .3h0m.2-79.6h0m.1 4.2h0m0-8.9h0m.1 1.5h0m0 80.6h0m0-72.5h0m.1-6.5h0m.2 85.8h0m.1-96.2h0m.1 12.2h0m0-3.2h0m.2-18.6h0m0 16.5h0m.3 81.4h0m0-81.8h0m.1 78.6h0m0 4h0m0-3.4h0m0-67.9h0m.1-2h0m.1 82.5h0m0-88h0m0-1.5h0m.2 3.8h0m.1 83.5h0m0-2.6h0m.3-80.6h0m0-4.5h0m.1 85.9h0m0-76.7h0m.1-3.3h0m0 1.6h0m.1 94.7h0m.1-17.7h0m0-76.9h0m.3-7.9h0m.1 86.5h0m.1-80.2h0m0 1.6h0m0-3.4h0m0-16.8h0m.1 18h0m.1 71.8h0m0 5.2h0m.1-74.7h0m0 76.7h0m.1-80h0m0 90.5h0m.4-18.6h0m.1-73.3h0m.1 74h0m0-68.3h0m0-.2h0m0-6.6h0m.1 4.6h0m.2 75.6h0m0-.6h0m.2-84h0m.1 9.9h0m0-2.5h0m0 79.4h0m.4 17.9h0m0-4.5h0m.3-88.8h0m.1 81.6h0m.3 3.8h0m0-16.5h0m.2-71.8h0m0 70.9h0m.8 7.8h0m.3-82.1h0m.1 2.8h0m0-18.1h0m.1 97.8h0m.3-88.4h0m.2 2.1h0m0 88.4h0m.1-.3h0m.2-11h0m.3 14.4h0m.1-12.3h0m0-70.6h0m0-.3h0m.2 83.1h0m0-83h0m.1 88.5h0m0-115.7h0m.1 22.7h0m0 4.9h0m0 69.8h0m.1-74h0m0 6h0m.2-9.5h0m.3 82h0m.3-74.8h0m0-9.8h0m.1 79.5h0m.1 6.2h0m.1-75.5h0m0 .4h0m.2 73.4h0m.2-3.7h0m0-76.2h0m0 80.4h0m.1-73.1h0m.1 74.8h0m.1-77.3h0m0-3h0m.1 5.8h0m.1 70.8h0m0-1.2h0m.1-70h0m.5-5.5h0m.1 80.3h0m0-93.7h0m.2 100h0m0-5.7h0m.1-4h0m.1-73.1h0m.3 .4h0m.1 69h0m0 8.3h0m.1-81.4h0m0 6.2h0m.1 71.1h0m0-84.5h0m0 10.7h0m0 73.5h0m0 1.7h0m.1 12.3h0m.2-86.2h0m.1-6.6h0m.1-17.4h0m0 16.4h0m.1 2h0m.1-8.6h0m0 107.6h0m0-16.2h0m0 6.2h0m.1-82.4h0m.1 .7h0m0 77.5h0m.1-107.1h0m0 105.2h0m0-7h0m0 1.9h0m.2 2.9h0m.1-91.9h0m0 91.6h0m0-79.1h0m.1 .6h0m0 75.2h0m.2-89.2h0m.2 89.6h0m.1 6.1h0m0-91.1h0m.2-13.7h0m0 100.5h0m0-92.1h0m.1 14.2h0m.2 75h0m.3-85.4h0m0-12.7h0m.1 5.6h0m.1 93.7h0m.1-3h0m0 2.5h0m0 2.4h0m.1-5.1h0m.2 22.4h0m0-5.8h0m0-7.9h0m.1-78h0m.3-14.8h0m.5 84.5h0m.1-73.1h0m.1-.1h0m0-3.4h0m.3 6.6h0m.2-6h0m.1 82.6h0m0-1.6h0m.1-92.6h0m0 92.6h0m.3-82.3h0m0 89h0m0 1.2h0m.2-87.4h0m.1 76.4h0m.2-69.5h0m.1-13.6h0m.1 9.8h0m0-23.3h0m.1 96.9h0m0 2.5h0m.3-84.2h0m0 106.5h0m0-104.3h0m0 95.1h0m0-92.6h0m0 5.2h0m.1 74.1h0m0-1.6h0m.1 17.2h0m0-108.5h0m0 102.5h0m.2-15.5h0m0-79.4h0m.1 93.1h0m.1 17h0m.2-24.6h0m.2-77.2h0m.1-9.7h0m.1 3.5h0m.1 77.3h0m.1 14h0m0-89.8h0m.3 103.2h0m0-112.5h0m.1-1h0m0 9.9h0m.1 80.4h0m.1-76.2h0m0 72h0m0 2.9h0m.1-72.6h0m.2-6h0m.1-1h0m.1 8.6h0m.1 68.7h0m0 12.4h0m0 5.2h0m.1-16h0m0-77.5h0m.1 85.2h0m0-90.4h0m0 93.8h0m.1 4h0m0-9.3h0m.1-7.1h0m0 2.7h0m.1-80.4h0m0 92h0m.1-8.7h0m.1-76.8h0m0 1.5h0m0 86h0m.1-91.3h0m0 77.6h0m.1 9.8h0m0-80.7h0m0-10.4h0m0 94.1h0m0-88.2h0m.1-4.6h0m.2 82.7h0m0 4.5h0m0-1.1h0m.2 .8h0m.2-9.2h0m0-82.4h0m.1 95.4h0m.1 7.7h0m0-93.2h0m0 97.4h0m.1-15.4h0m0-76.7h0m0-7.6h0m0 4.9h0m.1 69.3h0m.2 2.6h0m.2 5.4h0m.1-1.5h0m0-6.8h0m.5-76.8h0m0 85h0m.4-76.4h0m0 87.7h0m.1-105.2h0m0 5h0m.1 9.1h0m0 75.1h0m.3 9.1h0m0 5.8h0m.2-16.3h0m0 6.3h0m.1-98.1h0m0 10.4h0m.1 9.4h0m0 82.4h0m.5-11h0m0 .5h0m0-78.9h0m.1 8.5h0m0 72.2h0m0 11.4h0m.1-111.9h0m.1 100.6h0m.1-71.1h0m.1 67.2h0m.1 14.8h0m0-8.2h0m.2-74.3h0m0-1.8h0m0 77.8h0m0-7.9h0m.1-73.6h0m0 1.3h0m0 2.7h0m.1 .9h0m.1 .2h0m.1-6.3h0m0 78.6h0m.1-95.1h0m.1 102.5h0m0-84h0m.1 87.7h0m.1-83.9h0m0-.7h0m.1 82.7h0m.3-82.6h0m0 69.9h0m0 19.2h0m.1-14.9h0m0-72.6h0m.1-15.7h0m0 11.9h0m.2 .6h0m.2 2h0m0 71h0m.1-81.8h0m0 7.4h0m0 78.6h0m.1-73.4h0m.1-7.8h0m0 6.3h0m0 71.6h0m.1 9.8h0m0-7.8h0m.1 7.2h0m.1-88.9h0m.4-8.7h0m0 94.3h0m0-87.9h0m.1 78.8h0m.1-71.1h0m0 89.2h0m.1-105.7h0m.2 102.7h0m.2-3.9h0m.1-7.1h0m.1 5.6h0m0-77.3h0m.3 88.3h0m.1-87.4h0m.1 76.1h0m0-80.7h0m.1-1.5h0m.1-9h0m0 86.9h0m.1 3.6h0m.1-2.7h0m0-77.6h0m.1 103.1h0m.1-9.9h0m0-90.1h0m.1 70.8h0m0-72.4h0m.1 75.2h0m0-1h0m.1-85.3h0m.4 82.2h0m0 5.1h0m.2-88.2h0m.1 89.7h0m.1-77.8h0m.2 72.3h0m0-70.3h0m.1-6.9h0m0 6.6h0m0-1.1h0m.1-5.1h0m.1-10.1h0m.1 91.8h0m.1-73.1h0m.1-.2h0m0-13.3h0m.3 10.3h0m.2-6.4h0m.5 5.8h0m0-3.6h0m.1 5.8h0m.1-6.4h0m0 87.4h0m.1-.3h0m.1-90.9h0m0-5.8h0m.1 111h0m.1-18.2h0m0-79.4h0m0 74.5h0m.2-82.7h0m0 .4h0m.1 8.9h0m0 75.7h0m.1-2.1h0m0-2.8h0m.1-84.3h0m.1 1.8h0m0 104.8h0m.1-23.1h0m0 18.9h0m.1-19.5h0m0 17.3h0m.1-13.2h0m0 5.7h0m.1-82.4h0m.5 75.2h0m0 22.5h0m0-14.4h0m.1-77.1h0m.1-12h0m.1 82.8h0m.1-84.6h0m0 84.9h0m.3-91.8h0m0 99.2h0m.1-7.5h0m0 .2h0m0 9.7h0m0-92.6h0m.1 79.1h0m0-.1h0m0 .6h0m.1-75.2h0m0 88.8h0m.1-7h0m.1 .4h0m0-83.3h0m.4 75.5h0m0-72.3h0m0 72.5h0m.1-85.1h0m.1 106.2h0m0-11.6h0m.2-90.3h0m.2 8.8h0m0 73.3h0m.1 3.3h0m0-75.8h0m.1-19.7h0m.1 8.2h0m0 81.9h0m.3-70.9h0m0-4.9h0m0-13.1h0m.1 8.1h0m0 91.3h0m.1-95.2h0m.3 17.9h0m0-14.4h0m.1 103.9h0m0-92.4h0m.1 76.7h0m.1-82.4h0m0 92.6h0m.1-95.6h0m0 92.3h0m.2-6.7h0m.1-75h0m.1 68h0m0 8.6h0m0-79.1h0m0-1.6h0m0 74h0m.1-.8h0m.1-92.9h0m.2 20.5h0m.1-5h0m0 81h0m0-3.6h0m.1-72.9h0m0 3.8h0m0 71.9h0m.1 .6h0m0 4.6h0m0-3.5h0m0-1.5h0m.2-70.8h0m.1-.4h0m0 87.1h0m.4-11.2h0m.1-89h0m.1 80h0m.1 17.9h0m0-85.5h0m.2 81.4h0m.1-100.2h0m.1 17.6h0m.2 .2h0m.4-18.7h0m0 5h0m.1 13h0m0 92.6h0m0-96.2h0m0 83.5h0m.3-6.7h0m.1-94.5h0m.2 100.9h0m0-10.5h0m.2 14.1h0m0-11.7h0m0 22.5h0m.2-92.1h0m.1 .8h0m0-27.4h0m0 100.5h0m.1 19.4h0m.2-22.6h0m.3-90.8h0m.3 15.5h0m.2 78.7h0m.1 9.5h0m0-82.5h0m.1-7.5h0m0 89h0m0 .9h0m.1 3h0m0 1.5h0m.1-105.2h0m.1 16.4h0m0 77.4h0m0-86.2h0m0 89.4h0m.1-.7h0m.1-89.6h0m.2 78.7h0m0-69.4h0m0 87.4h0m.2-14.8h0m.1 6.9h0m.1-80.3h0m.1-1h0m.1-9.1h0m0 80.4h0m0 .8h0m.1-2h0m.2 19.6h0m0-17.9h0m.3 13.9h0m.2 10.5h0m0-15.1h0m0-8.6h0m0-75.3h0m.1-7.9h0m.1 81.9h0m.1 33.9h0m0-115.6h0m.2 105.2h0m.1-5.8h0m.1-94.1h0m0 77.2h0m.1 8.6h0m.1 18.3h0m.2-98.4h0m0 75h0m.1-81.2h0m0 88.9h0m0-4.9h0m0-78.1h0m.1 2.4h0m0-16.7h0m.1 89h0m.2-79.7h0m0 6.4h0m0 72.7h0m0-86.1h0m0 94.9h0m.1-10h0m0 16.8h0m.2-13.3h0m0-83.8h0m.1-8.1h0m.1 107h0m.1-106.9h0m.1 14.3h0m.2-14.9h0m0 100.7h0m.2-3.2h0m.1 4.7h0m.1-9.5h0m0-6.3h0m.2 2.1h0m0 6.7h0m.1-77.6h0m.1 2h0m0-12.6h0m0-.3h0m.1 89.3h0m.1 2.5h0m0-88.9h0m.1 98.2h0m.1-20.6h0m.1-67.6h0m0-2.8h0m0-11.4h0m.1 80.9h0m.1-77.2h0m0 79.1h0m.1-77.7h0m0 96.3h0m.1-5.3h0m0-5.4h0m0-1.2h0m.1 10.9h0m.1-19.1h0m0-77.7h0m0-10.5h0m.1 16.1h0m0 3.6h0m.1-15.7h0m.1 87.7h0m.2 10.3h0m.1 4.8h0m.1-14.2h0m0-3.2h0m.1-69.4h0m.1 78.1h0m.1-80.7h0m.2-5.7h0m.1 5.8h0m.1 70.3h0m.1 11.9h0m.1-84.2h0m0-3.5h0m0-3.2h0m0 91.7h0m.2 1h0m.2-80h0m.1 71.4h0m.1-73.6h0m0-.2h0m0 74.8h0m.1-1.4h0m.1-89h0m.1 8.6h0m0 100.7h0m0-92.4h0m.2-3.6h0m0 77.4h0m0-89.8h0m.1-6.8h0m0 20.7h0m.1-4.3h0m.1 5.4h0m0-12h0m0 89.9h0m.1 4.1h0m0-4.6h0m.3-78.7h0m.1 73.8h0m0-70.4h0m.3 72.7h0m.2-2h0m0-3.2h0m0 24h0m.2-101.3h0m0 3.7h0m0 81.2h0m.1-75.3h0m.1-12h0m0-13.9h0m0 5.3h0m.1 86.8h0m.1-76.4h0m.1 83.9h0m0-4h0m.2-86.5h0m.1 1.5h0m0-3.7h0m0 92h0m.2-2h0m.2-71.4h0m0-19.6h0m.1 89.6h0m.1-78.6h0m0-5.9h0m0 7.8h0m.2 81.5h0m.1-104.3h0m.3 24.4h0m.2 4.8h0m.1-8h0m0 100.1h0m.2-13.6h0m.1-94h0m0 85.6h0m.1-87.2h0m.2 98.3h0m0-7.8h0m.1-76.9h0m0 71.2h0m0-68.5h0m.1-10.8h0m.4 79.1h0m.1 1.1h0m.1-.2h0m0 9.6h0m.1-81h0m.1 89.9h0m0-6.4h0m.1-101.7h0m.2 11.6h0m.1 89h0m.1-9.3h0m0-70.5h0m.2 72.8h0m0-78.7h0m.4 6.8h0m0-7.3h0m.1-13.8h0m.1 10.7h0m0-1.8h0m.2 5h0m.1 84.5h0m.1-88.7h0m.1 82.4h0m.1-4.3h0m0-69.8h0m0 72.5h0m.1 2.7h0m.1 4.5h0m.1 3.1h0m0-87.4h0m0 84h0m.1 11.7h0m.1-15.5h0m.1-72.2h0m0 73.8h0m.1 7.9h0m.1-13.8h0m0 3.1h0m.2-2.7h0m0 3h0m0-88.5h0m0 96.4h0m.3-87.4h0m0 89.9h0m.3-14.8h0m0 2.2h0m0 11.1h0m.1-83.3h0m0-8h0m.1-13.1h0m0 12.5h0m.1 4.4h0m0-6.5h0m0 82h0m.1-74.9h0m0 74.4h0m.3 3.9h0m0-71.7h0m.1 69.2h0m0-78.1h0m.1 75.2h0m.1-69.7h0m.2 74.5h0m.1 12.3h0m.2-16.7h0m0 1.7h0m0 25.2h0m0-19h0m.2-7.8h0m.1 27.5h0m.1-101h0m.3 84h0m.1-85.7h0m0-1.1h0m0 .9h0m0 81.2h0m0-103.7h0m.1 16.3h0m0 10.3h0m0-.2h0m0 86.4h0m.1-89.3h0m0 99.1h0m.2-24.4h0m.2-78.4h0m0 86.2h0m.1-90.6h0m.2 9.1h0m.1-6.4h0m0 79.4h0m0-66.2h0m.1-1.2h0m0-5.8h0m0-1.2h0m.1 6.1h0m.1-7.2h0m.1 0h0m.2 77.4h0m.1 10h0m.1-81.8h0m.1 85.8h0m.1-84.1h0m.2 83.9h0m0-15.8h0m0-80.3h0m.1 102.6h0m0-8.8h0m.1 2.4h0m0-88.4h0m.1-2.9h0m.1 83.7h0m.4-2.3h0m.1-73.7h0m.3-2.3h0m.1-4.3h0m.3 81.5h0m0-89.7h0m.3 86.1h0m.1-87h0m.1 7.5h0m.1 79h0m0-74.1h0m.1 71.6h0m0-67.1h0m.1-2.9h0m0-19.4h0m0 111.7h0m.2-10.4h0m.1-90.1h0m.1 85.7h0m.1-2.5h0m0-92.4h0m0 100.9h0m0-1.4h0m0-81h0m.1 76.4h0m.1-5.8h0m.1-72h0m.1-22.6h0m0 94h0m0-83.5h0m.1-7.8h0m0 93.2h0m.1 8.8h0m.1-9.7h0m0 7.6h0m.1-88h0m.3 4.6h0m.2 5.3h0m.2 89.4h0m0-20.1h0m.1-67.6h0m.2-8.1h0m.3 81.8h0m.1 11.2h0m.2-1.7h0m0-113.3h0m0 102.2h0m.1 9.8h0m0-3.5h0m0-86.3h0m.2 4.8h0m0-21.4h0m.1 99.5h0m.1-78.4h0m0 85.1h0m.1-98.2h0m0 91.1h0m.1-3.9h0m.1-86.3h0m.1 87.4h0m0-2.4h0m0-71.3h0m.1 72.6h0m.3-2.7h0m.1-73.1h0m.1 74.8h0m.1-72.6h0m0-.5h0m0 70h0m.1-87.3h0m0 16.3h0m0 79.9h0m.1 2h0m0-84.8h0m.1 85.4h0m0-82.5h0m0-5.5h0m.1-5.8h0m.4 101.1h0m0-18.5h0m.1 4.1h0m.1-77.1h0m0-10.3h0m0 92.1h0m.1-77.5h0m0 91.6h0m.1-96.1h0m0 78.9h0m.1 13.8h0m0-5.7h0m.1-80.6h0m0 92h0m0-98h0m0-16.8h0m0 22.2h0m.3-24.3h0m.1 20.7h0m.1 85.5h0m.1-109.1h0m.1 17.3h0m.2 9.5h0m.1 78.9h0m0-8.7h0m.2 6.1h0m.1-95.2h0m0 88.5h0m.1-75h0m0 1.5h0m.2 72.3h0m.1-82.9h0m.2 113h0m0-17.9h0m0-83.1h0m.1-13.7h0m0 12h0m0 79.3h0m.2-4.4h0m.1-71.7h0m.1 76.2h0m.1 1.7h0m.1-92.4h0m0 14.6h0m.2-14.6h0m0 92.1h0m.1-76.2h0m0-3.2h0m0 75.7h0m.1 5.9h0m.1-87.9h0m0 93h0m.1-3.6h0m.1-85.8h0m0-1.4h0m.2 7.2h0m.1-15.1h0m0 14.4h0m.1-.9h0m0 .8h0m0-4.3h0m.1-7.1h0m.1 85.6h0m0-6.2h0m0-73.2h0m.1-1.7h0m0 5.8h0m.2-2.9h0m.1 1.5h0m0 72.5h0m.2-69.2h0m0 67.6h0m.1-69.1h0m0 0h0m0 72h0m.2-75.3h0m0 102.7h0m0-27.6h0m.1 1.3h0m0-2.2h0m.2-1.4h0m0 1.8h0m0 5.8h0m.1-99.8h0m.3 23.7h0m0 .1h0m0-19.6h0m.1 102.7h0m.1-82.6h0m.1 67.4h0m0-69.9h0m0 74.3h0m.1-75.2h0m0 78.6h0m.3-6.9h0m.1-82.5h0m.2 8.9h0m.1-1.1h0m.1 80.5h0m.1-5.2h0m0 9.6h0m.1-82.3h0m0 75.1h0m0-4h0m.1-80.8h0m0 86.6h0m.1-4.1h0m.2 4.8h0m0-98.3h0m.2 2h0m0 21.1h0m.1-11.3h0m.2 83.2h0m.1 4.5h0m.2-92h0m.1 17.4h0m0 76.4h0m.2-83.7h0m.1 77.2h0m.1-70.5h0m.2 86.8h0m0-88.3h0m.1 72.1h0m.1-72.7h0m.3-3.4h0m0 4.5h0m.1 73.8h0m0-2.9h0m0-74.4h0m0-25h0m.1 6h0m0 115.4h0m0-101.3h0m0-6.9h0m.8 92.5h0m.1 1.2h0m0-77.2h0m0 85.7h0m0-101.7h0m0 83.8h0m0 8.4h0m.1 1h0m0-93.5h0m0 12.1h0m.1 72.4h0m.1-84.7h0m.1 11.1h0m.1 1.9h0m.2 71.1h0m.3-74.4h0m0 5.6h0m0 2.1h0m.1 73.2h0m0 7.9h0m.5-11.4h0m0-.6h0m.1-72.7h0m.1-16.8h0m0 19.7h0m0-19.2h0m.1 15.8h0m.1 78.8h0m0-4h0m0-71.5h0m.1 76.5h0m0-6.7h0m.1-73.4h0m.2 4.1h0m0-7.5h0m0-1.3h0m.1-13.3h0m.2 8.3h0m.1 13.5h0m.3-2.1h0m0-15.5h0m.1 3.9h0m.2 12.2h0m.2 75.6h0m.1-100.4h0m0 106.3h0m.1-94.4h0m0 89.6h0m0-5.1h0m.1-76.6h0m0 5.3h0m.1 67.9h0m0 4.2h0m.1-71.4h0m0 75.4h0m0-7.3h0m0-98.6h0m.1 28.8h0m.1 95.7h0m.2-110.7h0m.1 89.1h0m0-3.1h0m0 10.6h0m.1-91.8h0m.1 3.4h0m.1 79.6h0m.1-73.8h0m0 3h0m.1-5.2h0m0 3.5h0m0 81.1h0m.1-5.6h0m.1-84.4h0m0 79.4h0m.2-1.9h0m.1 7.3h0m.1-5.6h0m.1 2.9h0m.1 6.4h0m0-7h0m.3-91.2h0m.1 20.6h0m.1 72.8h0m0-3.9h0m0-71.2h0m.2-1.8h0m0-8.7h0m0 2.6h0m0 79h0m.1 8.9h0m0-8.1h0m.2-80h0m0 8.8h0m.2-16.2h0m.1 93.5h0m.1-7.4h0m.1 1.9h0m.1-90.7h0m.1 93.7h0m.1-2.1h0m.1-74.3h0m.1 78h0m0 3.7h0m.2-1.5h0m.2-82.5h0m.1-6h0m.2 11.5h0m0-2.4h0m.1 1.2h0m0 83.1h0m.1-98.4h0m.2 10.9h0m.1 82.3h0m0-84.2h0m.1 91.9h0m.2-98.4h0m0 12.2h0m0 85.2h0m0-87.3h0m0-4.9h0m0-.3h0m0 83.2h0m.1-1.7h0m.1-3.7h0m0 13.6h0m0-15.7h0m.2 17.1h0m.3 .4h0m.4-7.5h0m.1-9.9h0m0 .2h0m.1 18.6h0m0-9.8h0m0-97.4h0m.1 21.2h0m0-16.1h0m0 106.8h0m.1-12.6h0m0-11h0m.1 2.9h0m.1-75.4h0m.1 78h0m.1 3.3h0m.2 2.5h0m.1-95.7h0m0 94.1h0m0 5.3h0m.1-13.4h0m0 2.3h0m.1 14.6h0m.2 1.4h0m0-104.1h0m.2 90.1h0m0-76.7h0m.1 3.4h0m.1 75.6h0m.1-.8h0m.1-80.1h0m.1 3.2h0m0 72.2h0m0-99.9h0m.1 103.6h0m.3-1h0m0-95.7h0m0 .9h0m.1 21.5h0m.1 .8h0m.1 73.9h0m.2-78.8h0m.1-.4h0m.1 73.2h0m.3-76.2h0m0 8.8h0m.1-11.5h0m0 5h0m0-3.7h0m0 5.3h0m.1 71.6h0m0 14.1h0m0-11.2h0m.1-82h0m.1 94.6h0m.1-15.1h0m.2 1.2h0m.2 5.6h0m.2 7.2h0m.2-11h0m.3 1.6h0m0 6.1h0m0-85.5h0m.2 89.2h0m0-90.5h0m.1 1.7h0m.3 81.9h0m.2-88.7h0m0 86.3h0m.2-95h0m.2 22.7h0m0-14.2h0m.2 12.4h0m0 71.3h0m0-75.4h0m0 .9h0m.1-2.4h0m0-20.8h0m.1 112.5h0m.1-93.8h0m0 80.1h0m0-74.4h0m.1 95.8h0m0-96.1h0m.3 81.8h0m.2-3.9h0m0 18.7h0m0-94.5h0m.1 77.6h0m0 1.3h0m.3-89.9h0m0-8.5h0m.1 18.6h0m0 1.5h0m.2 87.7h0m.1-93.5h0m.1 74.4h0m.1 9.5h0m.1-80.3h0m.3 2.7h0m0-21.2h0m0-1.4h0m.1 90.3h0m.1 3.2h0m0-76.6h0m.3 86.7h0m.1-2.1h0m0-80.5h0m.1-10.6h0m0 10.2h0m0-.8h0m0 76.7h0m.1-87h0m0 83.2h0m0 3h0m.1-75.3h0m0-8.7h0m.2 10.4h0m.1-22h0m0 16.1h0m.1 5.2h0m.1 78.6h0m0-8.9h0m.1-78.8h0m.1 78.7h0m0 6.4h0m.1-3.6h0m0 5.2h0m.1-5.3h0m.1-83.1h0m.2 95.4h0m0-4.3h0m.2 13.4h0m.3-99.9h0m.2 77.1h0m.2 3.3h0m.1-73.1h0m0 72.3h0m.3-71.5h0m0 76.7h0m0-79.6h0m.1-.3h0m0-19.8h0m0 19.6h0m.1-1.4h0m.1 80h0m.1-1.9h0m.1-83.2h0m.1 81.9h0m.1-78.7h0m0 89.8h0m.2-85.1h0m.1-5.7h0m0 93.5h0m0-6.6h0m0 .5h0m.3-9.9h0m0-92.6h0m.1 13.2h0m.2 80.2h0m.2-.6h0m.1 .6h0m.1-3h0m.2-69.6h0m.2-6.5h0m0 93.5h0m.1-17.1h0m.1-73.7h0m0 76.5h0m0-71h0m.1 68.7h0m.1-68.7h0m0 68.5h0m.1 6.9h0m0-83.9h0m.1 5.4h0m0 1.2h0m0-.6h0m.4 3.2h0m0 73.6h0m.1-77.1h0m0-2.1h0m.1 4.9h0m.1-11.6h0m0 83.7h0m.1 18.8h0m.2-94.4h0m0 73.6h0m.1 1.7h0m0 1.6h0m0-4.6h0m0 1.7h0m.3-98.4h0m0 3.6h0m.2 10.4h0m0 83.5h0m.4-70.9h0m.1-3.4h0m0 88.2h0m.1-86h0m0-6.7h0m0 100.5h0m.2-96.7h0m.1 87.7h0m0-89.3h0m.1 77.2h0m.1-82h0m.1 13.1h0m0 72h0m.1-4.3h0m0 11.7h0m.1-88.8h0m.2 88.8h0m0-7.2h0m.2-78.6h0m.1 2.3h0m0 79.1h0m.1 18.8h0m.1-19.2h0m0-80.7h0m0 77.5h0m0-75.5h0m.1-27.6h0m.2 106.5h0m.3-3.3h0m0-4.7h0m.1-71.5h0m.2 2.7h0m.1 74.5h0m0-6h0m0 19h0m.2 2.5h0m0-90.1h0m0 72h0m.1 11.7h0m.1-83.9h0m.1 70.7h0m0 13.7h0m0-14.7h0m.1 3.2h0m.6-88h0m.1 93.9h0m.1-80.8h0m.1 83h0m.1-84.2h0m0 99.5h0m.1-96.1h0m.1 83.1h0m.1-2.1h0m.1-85h0m0 74.4h0m.1 21.6h0m0-8.7h0m.1-8.8h0m.2-85.6h0m.2 83.1h0m0 3.6h0m0-86.3h0m.1 82.2h0m.1 3.8h0m0-6.8h0m.1-69.6h0m.2 73.4h0m.1-76.3h0m.2 97h0m0-18.2h0m.2-75.3h0m0 70.8h0m0-68.1h0m.1-3h0m0-1.2h0m.1 71h0m0 6h0m0-5.6h0m.1-79.4h0m0 93.4h0m.1-13.6h0m0-68.9h0m.3-.4h0m.1 81.6h0m.1-12.1h0m0-1.5h0m.1-70.6h0m.1-1.6h0m.1 72.6h0m.1 .8h0m0 16.1h0m.1-9.9h0m.1 8h0m0-95.3h0m.1 84.9h0m0-5h0m.1 .4h0m0 6.4h0m0-4.3h0m.1-2.2h0m0 29.8h0m.2-28h0m.1-68.4h0m.3-2.8h0m.1-4.3h0m0 75.4h0m.2 6.9h0m0-94.8h0m0 86.9h0m.1 13.3h0m0-85.9h0m.2-3h0m.2 91.6h0m.1-9.9h0m.2-4h0m0-78.5h0m.1-8.4h0m.1 103.6h0m.1-108.2h0m.2 19.1h0m.1 88.8h0m0-8.3h0m.1-95.4h0m0 16.9h0m.1 70h0m0-88.3h0m.1 6.5h0m0 10.8h0m.2 71.4h0m.1 4.2h0m.1-3h0m.3-78.6h0m0 77.9h0m0-69.8h0m.2-6.1h0m0 92.1h0m.1-18.2h0m.1-69.2h0m0 72h0m.1-81.8h0m.1-3.7h0m0 96.4h0m.2-98.6h0m.1 15.7h0m0 76.3h0m.1-77.1h0m.1 69.3h0m.1-67.9h0m0-4.5h0m0 80.7h0m0-5.5h0m0 6.6h0m.3-89.9h0m0 90.7h0m.3-92.4h0m0 10.7h0m0 78.1h0m0-99.5h0m0 13.8h0m0 2.9h0m.1 2.3h0m.3 75.1h0m.2 2.1h0m0-71h0m.1-2.7h0m.1-13h0m0 83.7h0m.1 25.4h0m0-19.7h0m0 18.3h0m.1-20.7h0m0-4.1h0m.1 5.1h0m.1-79.2h0m.1 75.5h0m.2 6.2h0m0-3.6h0m0 8.3h0m.2-8.2h0m.3 21.9h0m0-1.7h0m.1-92.2h0m.1 85.1h0m.1-86h0m0 71h0m.1-73h0m0 74.2h0m0-2.8h0m0 5h0m.3-93h0m0 14.3h0m.1 76.2h0m.1-1.6h0m0 0h0m0 8.4h0m.1-6h0m0-74.2h0m.1-12.2h0m.1 83.2h0m0-67.4h0m.1 84.7h0m.1-85.4h0m0-21.5h0m.1 88.7h0m.1-90.4h0m.3 91.2h0m0-68.1h0m0 72h0m.1 4.1h0m.2-77.7h0m.2 1.7h0m.2 73h0m.1-73.1h0m.1 91.2h0m0-94.7h0m.1-5.9h0m.1 87.1h0m0-4.5h0m.2-87.2h0m0 10.8h0m.1-3.9h0m.1 83.9h0m.1-1.6h0m0-2.3h0m0-103.8h0m.1 29.6h0m0 69.4h0m0 8.5h0m0-88.3h0m.1 92.8h0m.1-10.1h0m0-71h0m0 83.9h0m0-89.5h0m.1 82h0m.1-2.6h0m0-77.5h0m.1-22.1h0m.1 109.6h0m0-11.4h0m.1-71.5h0m0 77.8h0m0-4.4h0m.3 2.5h0m.1-78.7h0m.1-10.7h0m0 81.7h0m0-70h0m.1 .7h0m0-16.9h0m.1 6.7h0m.1 82.8h0m0-73.6h0m0 72.8h0m0-.9h0m.1-91h0m0 88.8h0m.1 5.1h0m0-83.4h0m0 9.6h0m0 69.1h0m.2-68h0m.2 76.6h0m0-108.2h0m.3 103.1h0m.1-.2h0m0-75.8h0m.1 73.9h0m.1-3h0m0-69.7h0m0 75.9h0m.2-3.4h0m0-69.8h0m.1 88h0m.1-101.9h0m.2 3h0m.1 95.6h0m.1-105.1h0m0 16.7h0m0 74.2h0m.2-93.1h0m.1 92.9h0m0-90.4h0m.1 17.3h0m0 76.7h0m0-1h0m0-82.9h0m.1 1.4h0m0 7.7h0m.4 69.5h0m.2-72.9h0m0 91.8h0m.2-14.6h0m.1-72.1h0m0 74h0m.3-84.2h0m0 2.1h0m.1 7.9h0m.1 85.8h0m0-14.4h0m.1-78.1h0m0 82.4h0m.1-104.4h0m.1 25.5h0m.1 79.4h0m.1-7h0m.1-71.6h0m.1-16.3h0m.1 91.5h0m0-6.1h0m0-70.1h0m.1 71.3h0m.1-1.7h0m0 9.8h0m.1-2.8h0m.1 5.2h0m0-11h0m.1-68.9h0m.3 86.4h0m.1-9.7h0m.1-79.6h0m.1 79.1h0m.1-2.5h0m0-4.7h0m.1 9.2h0m0-1.8h0m.1-80.6h0m.1-.4h0m.1 80.3h0m0-82.7h0m.1-.3h0m.1 8h0m.1 72.2h0m.2 5h0m0-90.4h0m0 11.8h0m.1 .5h0m0-14.2h0m0 13.4h0m.1-4.4h0m0-12.2h0m0 18.6h0m.1-19.6h0m.2 89h0m.1 .1h0m.1 11h0m0-86h0m.2 72.7h0m.2 8h0m0-89.8h0m.2 8h0m.1 3.1h0m0-1.2h0m0 2.9h0m.1 70.9h0m0-78.9h0m0 5h0m.2 89.4h0m0-6.1h0m.1 5.5h0m.1-15h0m0 4.6h0m0-83.2h0m.1 8.9h0m0-15.1h0m.1 83.4h0m0-85.9h0m0 6h0m0 3.1h0m0-1h0m.1-3.3h0m0 88.6h0m.4-90.4h0m0 13.7h0m.1 1.1h0m0-13.4h0m.1 80.8h0m0-81.4h0m.1 5.9h0m0 1.5h0m.2 88.2h0m.1-10.3h0m.2-102.2h0m0 28.9h0m.2 72.1h0m.1-.2h0m.1-73h0m.1 101h0m0-103.8h0m0 4.6h0m.1 93.2h0m.2-104.8h0m.2 90.7h0m0-1.5h0m.1-2.6h0m.1-80.5h0m0 94.2h0m.1-94.5h0m0-1.6h0m0-22.2h0m.1 6.5h0m0 108.3h0m.1-15.2h0m0-81.5h0m0 10.9h0m.3 82.5h0m.1 .5h0m0-99.2h0m.1 110.3h0m.1-94.2h0m.1 74h0m0-96.5h0m.1 96.5h0m0-75.7h0m0 3h0m0 78.3h0m0-6.4h0m.2 5h0m.3-92.5h0m0-.3h0m0 10.6h0m.1 74.3h0m0-71.8h0m0-.8h0m.3 81h0m0-80.4h0m0 72.3h0m0-96.4h0m.2 20h0m0 1.7h0m.1-4.1h0m0 87.1h0m.1-4.6h0m0-2.8h0m.3-1.9h0m.1 5.4h0m.1-86.4h0m.1 7.6h0m0 .1h0m.2 6h0m0-2.1h0m0 73.8h0m0-80.4h0m.1 3.1h0m0 75.7h0m0-69.7h0m.1-1.5h0m.2 78.6h0m0-10.4h0m.1 15.7h0m.1-89.8h0m.1 74.7h0m0-74.2h0m0 80.2h0m0 1.2h0m0-4.4h0m.1-80.1h0m0-4.1h0m.1 1.4h0m.1 100.4h0m0-15.4h0m.4 4.2h0m.2-3.3h0m.1-79.8h0m0-7.1h0m0 93.3h0m.1-4.5h0m.1-5.7h0m.1 8.6h0m0 5.3h0m0 10h0m.1-119.6h0m.1 103.4h0m0-87.7h0m.3 6.7h0m0 74.8h0m0 12.3h0m.2 6.9h0m0-10.6h0m.2-89h0m0 79.1h0m0-94.8h0m.2 16.7h0m.2 91.7h0m0-84.5h0m0-6.4h0m.1-1.9h0m0 97.6h0m.2-18.6h0m.2-2.8h0m0 1h0m.1 2.4h0m0-1h0m.1 .8h0m0-75h0m0 72h0m.1-71.7h0m0-14.6h0m0 7.9h0m.1 8.9h0m.1 70.1h0m.2-67.2h0m.1-6.2h0m0-13.2h0m0 88.4h0m.2-76.4h0m.1 3.7h0m0 75.6h0m0 0h0m.1-83.6h0m.1 83.8h0m.1 25h0m0-27.9h0m0-71.7h0m.1 2h0m.1 75.8h0m0 4.1h0m.2-6.5h0m.1-2.4h0m0-78.9h0m.1 94.1h0m0-18.3h0m.1-77.4h0m.1 5.5h0m0 72.7h0m.2 4.7h0m0-77.6h0m.3 81.1h0m0-8.6h0m.1-83.9h0m.4 1.2h0m0 11.1h0m0 77.6h0m.2-7.2h0m.1-78.4h0m.1-15.4h0m0 25.8h0m0-12.2h0m.1 12.6h0m.2 70h0m.3 .8h0m.1-88.7h0m0-6.7h0m0 93.4h0m.2-73.5h0m.2-4.1h0m.1 10h0m0-5.5h0m.2 2.5h0m.1-3.7h0m0 2.4h0m0-7.8h0m.1 86.5h0m.1-89h0m.1 94.8h0m0-108.8h0m.2 97.4h0m0 8.9h0m.2-97h0m0 87.8h0m.1-99.8h0m.2 98.2h0m0 4h0m.1 8.3h0m.1-94.3h0m.1 99.9h0m.3-96.7h0m.1 84.5h0m0-4.6h0m.1 13.8h0m.1-1.2h0m.1-80.9h0m0 98.6h0m.1-106.4h0m.2 .2h0m0 83.6h0m0-7.9h0m.1 3.3h0m0-2.5h0m.1-72.8h0m0 76.1h0m0-3.9h0m0-1.7h0m.1 10.3h0m0-82.2h0m0-2.7h0m.1-7.5h0m.1 93.2h0m.2-5.9h0m.2 6.4h0m.1-85.2h0m.1 2.6h0m0 74h0m.2 16.4h0m.1-10.9h0m0-80.8h0m.1 1.1h0m.1-6.7h0m.2 6.2h0m0 74.1h0m0-1.9h0m0-68.7h0m.1-22.7h0m0 91.8h0m.1-67h0m0 84.7h0m.1-17.9h0m0-72.5h0m.1 3.2h0m.1 75.6h0m0-89.2h0m.1 13.3h0m0 77h0m.1 4.1h0m0-6.1h0m0-3h0m0-78h0m.1 5.4h0m0 85.9h0m0 2h0m0-7.1h0m.1-8.6h0m0 9.7h0m0-80.3h0m0 1h0m0-1.4h0m0-13.8h0m.1 7h0m.1-4.1h0m.1-15.5h0m0 110.7h0m.3-96.9h0m.1 9.4h0m0 74.4h0m.1-74.3h0m0 72.4h0m.1-67h0m.1-5.1h0m.1 3.5h0m0 83.2h0m.1-8.9h0m0 6.2h0m.1 1.6h0m.1-5.5h0m.2-7.6h0m0 2.4h0m.1 20.1h0m0-102h0m0 83.6h0m.1-78.4h0m.3 79.7h0m0-84.4h0m.1 6.6h0m0 2.3h0m0 73.2h0m.1 8.5h0m0-80.6h0m0 78.1h0m.1-86.6h0m.1 80.6h0m.2 12.8h0m.1 2.6h0m.1-91.5h0m0-9.8h0m0 85.1h0m.1 19.6h0m.2-92.3h0m0 71.8h0m.4-87.4h0m.1 86.5h0m0-81.8h0m.2 5.3h0m.1 78.2h0m0 6.4h0m.1-96.4h0m0 100.1h0m0-82.7h0m0 93.9h0m.1-21.7h0m.2 5.8h0m.1-2.3h0m.2 3.5h0m0-7.6h0m.1-83.9h0m0 88.1h0m.1-91.6h0m0-12.4h0m.2 123.4h0m.3-96.5h0m0 72.2h0m.1-78.9h0m.2 7.7h0m.1-1.2h0m0-.6h0m.2 84.1h0m.2-81.8h0m0 69h0m0 19.9h0m.1-10.5h0m.1-81.5h0m.1 2.3h0m0 79h0m0-77.2h0m0-3.1h0m.1-5.3h0m.1 5h0m0 73.3h0m0 8.1h0m.1-.6h0m0 3.1h0m.1-78.9h0m.1-8.4h0m.1 88h0m.1-81.4h0m0 71h0m0-90.2h0m.1-1.6h0m0 107.7h0m.1-15h0m.1 3.1h0m0-2.4h0m.1-2.6h0m0 2.6h0m.1-2.9h0m0 3.3h0m.1-80.3h0m0 83.8h0m.1-76.1h0m0 69h0m.1 .1h0m.2-69.9h0m0-6.8h0m.2 88.4h0m0-1.2h0m.1-3.9h0m0-105.1h0m0-.7h0m.2 112.4h0m0-3h0m.1-87.5h0m0-12.8h0m0 89.1h0m0-70.8h0m.2 75.3h0m0-72.6h0m.2 70.8h0m0-76.8h0m.1 83.7h0m.1-82.7h0m.2-5.7h0m0 82.8h0m.1-.4h0m.1 8.3h0m0-6.8h0m.1-74.4h0m.2-17.8h0m0 19.2h0m.1 89.7h0m.2-113.5h0m0 5.6h0m.1 101h0m.1-89.1h0m0 92.3h0m0-89h0m.1-.3h0m.1 100.2h0m0-95.6h0m0 77.5h0m.1-81.3h0m0 2.5h0m0-28h0m.1 115.7h0m0-91.9h0m0 82.8h0m.1-86.4h0m.1 95.3h0m0-90.6h0m.1 74h0m0-2.1h0m.2-90.2h0m.1 95.3h0m.1-92.4h0m.1 89.2h0m.1-73.2h0m.1-17.3h0m.1 4.6h0m0 104.4h0m.1-102.9h0m0 9.5h0m0 84.1h0m.1-90.4h0m0 5.5h0m.1-2.7h0m0-17.9h0m.1 123.9h0m.1-17.8h0m0-105.5h0m.1 96.5h0m0-96h0m.1 96.8h0m0 1h0m.2 11h0m0-90.8h0m.1 78.6h0m0 15.2h0m0-5.6h0m.1-11.5h0m0-69h0m0 75.5h0m.1-87.5h0m0 12.2h0m0 90.9h0m.1-17.1h0m0-4.3h0m.1-80.2h0m0 84.4h0m.3 5.6h0m.1-85.8h0m0 100h0m.1-117.4h0m.1 23.2h0m0 70.7h0m.4-3.2h0m0-70.5h0m0 81.7h0m.1-2.1h0m.1 .8h0m0-8.2h0m.1-74.9h0m.1 97.3h0m.3-23.9h0m.1-68.3h0m.1 73.5h0m0-93.7h0m0 102.1h0m0-12.5h0m.1-80.9h0m0 8.5h0m.1 77.5h0m.2-73.9h0m0 80.8h0m0-103.7h0m0 16.5h0m.1-.4h0m0-18.1h0m0 107h0m0-8.6h0m.1-75.4h0m0-10.5h0m0 92.1h0m.1-84.5h0m.1 72.9h0m.1-67.7h0m.1-12.8h0m.1 111.6h0m.4-102.3h0m.1-1.5h0m0 80.6h0m.1-8.3h0m0-71.9h0m.1 89.1h0m.1-100.2h0m0 102.9h0m0-18.7h0m.1-68.9h0m0-7.9h0m0 85.1h0m.1-103.6h0m.1 23.6h0m0-4.8h0m0-5.5h0m0 12.4h0m.2-5h0m.1 86.2h0m.1-9.8h0m.1 4.3h0m.1 13.6h0m0-98.3h0m.1-12.2h0m.1 17.2h0m0 88.9h0m.1-1h0m.2-106.9h0m.2 14.5h0m0 5.2h0m.1 71.1h0m0-76.8h0m.1 7.8h0m0 86.9h0m.1-85.8h0m.1 .9h0m0 87.4h0m0-94.6h0m.1 81.1h0m.1-82.5h0m0 .1h0m0 9.4h0m.1 81.2h0m.1-14.9h0m.1 7.3h0m0-74h0m.1 90.5h0m0-23.8h0m0 4h0m0-77.3h0m.2 4.4h0m0 74.9h0m.1-79.8h0m0 74.7h0m.2-92.1h0m0 100.2h0m.2-81h0m.3-4.9h0m0 2.6h0m.1 89.6h0m0-12.3h0m.1-76h0m.2 82.7h0m0-85.7h0m.1 81.2h0m.4 2.5h0m.2 25.2h0m0-27.5h0m.1-84.8h0m.4-1.7h0m.1 3.1h0m.2 5.6h0m0 77.2h0m.1-75.7h0m.1 71h0m.1 3.3h0m0-74.9h0m0 88.4h0m.1-85.9h0m.1-12.2h0m0 84.1h0m.1 1.8h0m.2 1.5h0m0-84.2h0m.2-17.4h0m.2 5.4h0m0 23.3h0m0 73.2h0m.1 2h0m.1-98.7h0m.1 106h0m0-83.2h0m.3 .6h0m0-9.5h0m.2 98.1h0m.2-108.1h0m.1 17.1h0m.1 2.2h0m0-7.4h0m0 98.7h0m0-23.9h0m0 12.4h0m0-6.7h0m.2-75.7h0m.1 71.9h0m.2-71h0m.2 72h0m.1-71.5h0m0-6.5h0m.3 94.9h0m0-90.8h0m0 75.2h0m.1-3.4h0m.1-88.1h0m0 91.6h0m0-4h0m.2-72.2h0m0 101.4h0m.3-6.9h0m0-101.7h0m.2-7h0m0 86.3h0m0-75.9h0m.1 4h0m.3 83.9h0m0-81.8h0m.1 86.1h0m0-107.2h0m0 92.9h0m.4-75.2h0m.2 77.4h0m0 1.5h0m.1 19h0m0-15.3h0m0-91.7h0m.1 10.7h0m0 77.8h0m.2-2.3h0m0-78.1h0m.2-3.3h0m0 6.5h0m0 71.7h0m.1-77.1h0m.1 9.4h0m0 68.3h0m0-73.7h0m0-8.8h0m.1 82.6h0m.1-81.5h0m0 91.1h0m.1-7.8h0m.1-77h0m.1-7.4h0m0 11.6h0m.2-4.8h0m0 76.7h0m.1 10.3h0m.2-85.4h0m0-14.4h0m.1 113.8h0m0-14.3h0m0-89.4h0m.2 82h0m0-2.6h0m.1-3h0m.1-80.7h0m.1 8.3h0m0 74.2h0m.1-68.1h0m.2-6.9h0m.1 2.3h0m0 71.6h0m.1 15.7h0m0-14.8h0m0 16.2h0m.1 3.5h0m0-100.4h0m0 78.9h0m.1-73h0m.1 79.6h0m0-5.4h0m.1-67.5h0m.2-2.7h0m.1 90.4h0m.1-20.9h0m0-80.1h0m.1 85h0m0-.9h0m0 1.2h0m.1-74.8h0m0 2.7h0m.1 79.5h0m0-80.1h0m.1 77.2h0m0-77.5h0m.1-8h0m0 .7h0m0 94h0m0-114.9h0m0 119.2h0m.2-111h0m0 20.2h0m.1 67.8h0m0-93.5h0m.1 26.2h0m0 67.9h0m.1-72.9h0m.2 79.8h0m0-93.1h0m.1 11.9h0m.1 77.4h0m0-.7h0m.2 .7h0m0-93.7h0m.1 18.4h0m0-18.7h0m.1 99.3h0m0-7.3h0m.1 5.5h0m.1-78.4h0m.1-6.2h0m.1 10.2h0m0-12.2h0m.1 79.3h0m.2 20.2h0m0-92.6h0m0-2.8h0m.1 75.2h0m0-93.1h0m.1 3.4h0m.2 89.2h0m0 32.7h0m0-11.4h0m.1 7.5h0m.1-25.1h0m.3-87.3h0m0 94.3h0m0 13.9h0m.3-90.5h0m.1 73.4h0m0-79.8h0m0 92.6h0m.1-12.3h0m.1-94.8h0m0 12.9h0m0 91.3h0m0-84.2h0m.2-3.2h0m0-7.3h0m0 85.5h0m.1-96.5h0m.1 9.1h0m.2 9.5h0m0 3.8h0m0-2.3h0m.1 2.2h0m.1 82h0m0 .5h0m0-15.7h0m.1-71.9h0m.1 72.8h0m0-79h0m.1 92.6h0m.2-81.5h0m0 73.8h0m.1-74h0m0 74.6h0m.1-90.8h0m.2 85h0m.1-1.3h0m0 29.6h0m.1-24.4h0m.1-6.2h0m.1-81h0m.2 14.4h0m.1 81.3h0m0-108.6h0m0 98.2h0m.1 26.5h0m0-98.4h0m0-3.3h0m0 82.3h0m.2-10.1h0m.3-70.4h0m.1 85.6h0m0-16.5h0m0-69.9h0m.2 92h0m.1-20.8h0m.1 20.1h0m0-117.8h0m.2 27.1h0m.1-1.2h0m.1 80.4h0m.1-79.3h0m.1 .5h0m.2 79.7h0m0-5.9h0m.1 8.7h0m.3-13.7h0m0-84.1h0m.1 88.1h0m0 1.8h0m.1-75.9h0m.1-.8h0m.1 82.9h0m.1-78.9h0m0 81.1h0m0-7.1h0m.1-74.8h0m.2 79.9h0m.1 2h0m0 3.7h0m0-.5h0m.1-1.5h0m0-83.4h0m.1 71h0m.1-.3h0m0 7.7h0m0-77.7h0m.1 72.3h0m.1-71.7h0m0 71.5h0m0 8.2h0m.2-83.7h0m.1 74.2h0m0-73.6h0m.1 84.5h0m0-88.6h0m.1-12.1h0m.1 107.1h0m.3-104.8h0m0 91.1h0m0-85h0m.4 8.7h0m.1-14.1h0m.1 91.5h0m0-7.8h0m0-.5h0m.1 2.6h0m.2-85.2h0m0 14.6h0m0-28h0m0 122.4h0m.1-97.3h0m.3 94.5h0m.1-1.6h0m.1-15.3h0m0-78.1h0m.1 71.7h0m0-75.2h0m0-3.6h0m.1-9.2h0m0 8.1h0m.1 6.5h0m.1-8.3h0m.2 8.9h0m0 80.7h0m0-8.4h0m.2-67.5h0m.2 76.5h0m0-77.6h0m0 83.9h0m.1-5.8h0m.1-80.3h0m0 73h0m0-93.5h0m.2 107.2h0m0-82.1h0m0 79.7h0m.1-83.2h0m0 73h0m0-90.4h0m.1 19.4h0m.2 69.9h0m.3-77.3h0m.1 7.1h0m.1-20.7h0m0 91.5h0m.1 3.8h0m.1-76.9h0m.2-9.3h0m.3 89.7h0m.1-85.3h0m.1 87.3h0m0-7.7h0m.1-2h0m.1 8.3h0m.1-8.1h0m0-68.7h0m.1 67h0m0-71.6h0m.5 79.2h0m0-4.9h0m0-76.2h0m.1-6.3h0m.1 1.6h0m.1-.6h0m.2 9h0m0-1.4h0m.2 72.9h0m.1-86h0m0 88.6h0m.3-81.4h0m.2 77h0m0 8h0m.1-88.6h0m0 85.7h0m.1-79.8h0m0 .3h0m.2-5h0m.1 12.6h0m0 0h0m.2 66h0m0-76.9h0m.1 85h0m0 1.4h0m.1-1.6h0m0-74h0m.2-19.5h0m.1 9.8h0m.1 9.3h0m.2-2.4h0m.2-19h0m0 15h0m.1 78.2h0m.3 1h0m0-73.6h0m.1 69h0m.1-1.4h0m.2-70.7h0m0 85.2h0m.1-10.8h0m0 .1h0m.1 2.6h0m0 24.6h0m0 .5h0m.1-31.4h0m0 4.7h0m.3-74.5h0m.2 77.2h0m.2-75.3h0m.1-13.8h0m0 99.3h0m0-7.9h0m.2-97.6h0m0 91.6h0m.3-2.5h0m0-78.9h0m.2 80.4h0m0-2.9h0m.3-69.7h0m.2 72.6h0m0-69.9h0m0-3.3h0m.3 93.6h0m.1-20.9h0m.2 11.1h0m0-12.1h0m.1 4.8h0m0-89.1h0m.1 16.1h0m.2-.1h0m0-9.5h0m.3 83.1h0m.1 17.9h0m.1-93.6h0m.1 1.2h0m.1-8.3h0m.1 78.1h0m.3 22h0m.1-23.2h0m0-81h0m.1 12.5h0m0-13h0m.1 5.1h0m.1 78.9h0m.1-1.9h0m0 1.4h0m.1 5h0m0-.7h0m.1 1.6h0m0-3.8h0m.1-74.7h0m0 70.8h0m.2 12.5h0m0-11.5h0m.1-70.2h0m0 75.1h0m.5-88.4h0m.2 89h0m0 1.5h0m.1-79.2h0m.1 3.4h0m0-12.1h0m.1-7.9h0m0 102.7h0m.1-83.7h0m0-5.3h0m.4 .8h0m.2 5.5h0m.1-2.6h0m.2 77.8h0m.1-2.3h0m0-5.5h0m.1-68.4h0m.1 75.8h0m.2 5.9h0m0-98.6h0m.1 16.8h0m.1 70.8h0m.2-72.2h0m.1 76.1h0m0-.2h0m.1-91.2h0m.1 4h0m0 8.4h0m.2-3.2h0m.1 76.4h0m.1-.4h0m.1-79.2h0m0 99.4h0m0-17.9h0m.1-96.4h0m.1 106.6h0m.5-5.2h0m0-.5h0m.3-75.3h0m.1 1.1h0m0 69.6h0m.2-73.1h0m0 97.5h0m0-14.5h0m.1-101.6h0m.1 13.9h0m.2 7.8h0m0 70.7h0m0 11.7h0m.1-86.8h0m0-11.8h0m.1 10.6h0m.1 74.6h0m.1-67.9h0m0-18.3h0m.1 17h0m.1 78.8h0m0-5.7h0m.2 13.5h0m0-94.7h0m.1 2.3h0m0 86.4h0m0-95.6h0m.1 88.7h0m0-.4h0m0 11.7h0m0-83.9h0m.1-2.5h0m.1 78.7h0m0-6.3h0m.1 6.4h0m0-81.8h0m.1 4h0m.1-13.3h0m0 83.1h0m.1 22.7h0m.2-1.6h0m0-18.1h0m.2 13.1h0m0-5.3h0m.2-85.2h0m.1 1.9h0m.1 76.7h0m0-76.6h0m0 4.3h0m.1 72.2h0m0-72.7h0m0 76.6h0m.2-82.5h0m.1 73.5h0m0 7.5h0m0 4.7h0m.1-8.5h0m0-72.2h0m.1 73.6h0m.1-6.1h0m0 5.6h0m.1-77.4h0m.3 4.5h0m.1 69.1h0m0 1.2h0m.1-1.4h0m.2 17h0m0-85.3h0m0 68.6h0m0-79h0m0 8.7h0m.1-10.3h0m.1 7.7h0m.2-10.5h0m.1 94.6h0m0-87.2h0m.3 94.7h0m.1-110.7h0m.1 95.3h0m.3-73.4h0m.1-5.6h0m.1 1.6h0m.1 93.8h0m.1-103.4h0m0 5.4h0m0 77.9h0m.4-1.4h0m.1 8.3h0m.2-78.5h0m0 82.2h0m0-92.5h0m.2 3.9h0m0 10.3h0m0 69.9h0m.1-80h0m0-3.1h0m0 11.6h0m.2 1.8h0m0-10.1h0m.1 90.3h0m.1-89.6h0m.1 107.8h0m.1-26.4h0m.1-1.7h0m0-3.8h0m.1 20.1h0m0-86.6h0m.4 72.6h0m0-75.7h0m.1-15.8h0m.1 85.6h0m.1 10h0m0-88.5h0m.1 7.2h0m0 73.1h0m.2 15.4h0m0-17.9h0m0 9.4h0m0-7.2h0m.2-78.3h0m0 84.5h0m.1-80.3h0m.1-4.1h0m.1 6.7h0m.2 91.9h0m0-94.8h0m.2 4.9h0m0 .7h0m.1-32.2h0m.3 22.9h0m.1-1.7h0m0 88.1h0m.1-80.1h0m0 71.4h0m0 17.6h0m.1-11h0m0-2.8h0m0-82h0m.1-1.8h0m.2-5.2h0m.1 102.2h0m0-89.5h0m0 3.4h0m.1 77.2h0m0-4.5h0m.2 19.3h0m0-21.7h0m0-78.2h0m.2-18h0m.2 16.2h0m.2 6.6h0m.1 1.7h0m.1 74.1h0m0-84.5h0m0 103.3h0m.2-90.6h0m0 73.9h0m.1-75.6h0m.1-18.4h0m.2 2.5h0m0 86.7h0m.1-92.4h0m.1 16.7h0m.1 .6h0m0-8h0m0 14.1h0m.1-8.2h0m.1 95.5h0m.1-104.2h0m0 16h0m.1-1.5h0m.1 84.6h0m.1-86.7h0m.2 90.8h0m.1-91.4h0m.1 71.8h0m0 11.7h0m.1-80.8h0m0 76.5h0m.1-76.9h0m.1-.7h0m.1 83.4h0m.1-13.2h0m0-67.4h0m.1 69.8h0m.2 19.1h0m0-21.1h0m.2-67.9h0m0 79.2h0m.2-6.4h0m0 2.6h0m.1-7.3h0m0-73h0m.1 72.2h0m.1 2.3h0m0-72.2h0m.1 86.2h0m0-84.8h0m.2 77.3h0m.2 .7h0m.2-8.8h0m0-88.5h0m.2 21.6h0m.1 93.5h0m.1-101.9h0m0 89.8h0m.2-92.4h0m0 1.9h0m.1-3.9h0m.1 91.8h0m.3 2.2h0m.2-12.3h0m.2-69.1h0m0-11.8h0m0 93.8h0m0-11.7h0m.1-85.5h0m.2 1.7h0m.1 107.8h0m.3-95.9h0m.2-5.5h0m.1 4.3h0m.4 69.3h0m.1-67.8h0m.4 92.3h0m0-93.6h0m.5 79.5h0m0-8.9h0m0-78.6h0m.1 93.3h0m0-113.4h0m.1 30.1h0m0 75.1h0m0-7.1h0m.4-68.5h0m0 .9h0m.2 70.4h0m.3-83.7h0m.1 92.8h0m.4-105.4h0m0 .4h0m.2 18.1h0m.2 74.7h0m0 4.8h0m.1-4.8h0m0-66.6h0m.1 66.8h0m0 7h0m.1-1.1h0m0-6.2h0m0 17.3h0m.3-10.5h0m0-4.3h0m.1-74.5h0m.1 3.2h0m0 .8h0m.1-3.4h0m.2-16.8h0m.1 101.3h0m.2-5.5h0m.1-74.5h0m.1 67h0m0 .6h0m.1-80.5h0m0 82.6h0m.1 16.5h0m0 .9h0m0-8.3h0m0 8.7h0m.2-17.8h0m0-74.8h0m.3-9.4h0m.3 86.6h0m.2 1.3h0m0 1.5h0m0-107.1h0m.2 27.9h0m.1-1.2h0m0 81.1h0m.1-76.8h0m.1-5.6h0m0-2.4h0m0 82h0m.2 3.7h0m.1 14.1h0m0-91.4h0m.1-5.4h0m.1-5.2h0m0 5.4h0m0 73h0m.1 2.9h0m.1 17.4h0m0-97.7h0m.1-13.5h0m0 4.9h0m.3 97h0m.1-90.2h0m0 89.4h0m.1 6.2h0m0-83.4h0m0-14.7h0m.1-1.6h0m.1 15.6h0m.1 83h0m.1-15.3h0m0-68.2h0m0-19.3h0m.1 97.5h0m.1-7.5h0m0-1.7h0m.1-74.8h0m.1 .7h0m.4 6h0m0 0h0m.1 87.7h0m.2-106.1h0m.1-11h0m.4 29h0m0-25h0m.1 21.9h0m.1 3.7h0m0-12.1h0m.1 80.3h0m.1-80.8h0m.2 11h0m.2-2.3h0m.1-.3h0m.1 3.1h0m0 82.4h0m0-13.5h0m.4-90h0m.2 94.6h0m0 8.9h0m.1-81h0m0 89.8h0m0-17.6h0m.1-3.5h0m.1 .3h0m.2-78.2h0m0 7.7h0m0-2.1h0m0 73.9h0m.1-84.2h0m.1 87h0m.2-88h0m0 13.9h0m.1-9.3h0m0 86.8h0m.1 21.7h0m.2-98.2h0m.1 66.5h0m.1 1.7h0m0-1.5h0m0 7.8h0m.1 .7h0m.1-8.1h0m0-67.3h0m0 68.6h0m.1-69.5h0m.1 68.7h0m0-71.3h0m0-10.5h0m.2 107.9h0m0-98h0m0-.4h0m0 83.9h0m.1-85.8h0m0 73.2h0m.1 4.6h0m.2 .3h0m0-2.5h0m0 5.1h0m.1-5.3h0m0-.9h0m.1-1.3h0m0 9.3h0m0 2.3h0m.1-97.6h0m0 104.1h0m0-3.3h0m.1-83.5h0m.1-4.6h0m.1 77.6h0m.1 17h0m0-19.5h0m.2 4.4h0m0-81.9h0m.3 7.7h0m0 67.8h0m.2 23.2h0m0-89.8h0m.1-13.3h0m.3 80.6h0m.1 2.3h0m.1-.9h0m.1-69.4h0m0 77.3h0m.1 3.8h0m.1 1.9h0m0-87.5h0m0 84.7h0m0-7.8h0m0 3.8h0m.1-82.5h0m.1 82.4h0m0-83.2h0m0-.8h0m.1 5.5h0m0 2.5h0m.1 90.3h0m.1-92.4h0m.1-7.8h0m0 84.6h0m.1-80.2h0m0-.1h0m0 84.5h0m.1-82.2h0m0 72.6h0m.1-1.3h0m.2-76.2h0m0 9.1h0m.1-12.4h0m0 10.5h0m.1-14.1h0m.1 14.7h0m0-8h0m.1 .4h0m0 80.4h0m0 .7h0m.2 4.6h0m0-78.8h0m0-3.1h0m0-3.5h0m.1 87.9h0m.2 1.1h0m0-95.4h0m0 84.2h0m.1 3.7h0m.2-1.1h0m.2-89h0m0 9.5h0m.4 6.7h0m0-25.1h0m0 21.5h0m.1 90.1h0m0 1h0m0-101.9h0m.1 7.5h0m0 1.7h0m.2 72.8h0m.2-76.6h0m0 90h0m.2-79.7h0m.1-7.6h0m.1-1.5h0m.1 7h0m0 73.2h0m0-88.6h0m0 106.6h0m.1-5.9h0m0-85.4h0m.1 69.1h0m0-79.5h0m0 12.5h0m.1 75.7h0m.1-102.7h0m.1 109.9h0m.2-104.7h0m0 103.5h0m.5-87.7h0m.1 77.9h0m0-81.9h0m0 102.8h0m0-13.7h0m0-10.4h0m.1-77.3h0m.1-3.2h0m0 84.7h0m.1-83.7h0m0-11.3h0m0 103.1h0m0-87.2h0m.1 2.6h0m.1-5.4h0m0-.7h0m.1 79.7h0m.1-74.6h0m0 .6h0m.3-6.8h0m.1 82.1h0m.1-73.9h0m0-7.5h0m.1 78.5h0m0 3.5h0m0-94.9h0m.1 95.2h0m0 1.3h0m.1-3.3h0m.2-74.9h0m.1-17h0m.1 92.8h0m0-74.1h0m.3 2.7h0m0-5.2h0m.1 3.1h0m0 82.5h0m.1-83.6h0m0-6h0m.1 .2h0m.1-.7h0m0 92.5h0m.1-14.5h0m.1 11.6h0m0-105.1h0m.3 16.5h0m0 99.8h0m.4-22.4h0m.1-1.6h0m0 5.2h0m0 12.3h0m.1-15.8h0m.1 13.1h0m0-87.2h0m.1-2.5h0m.1-7.2h0m0 89.5h0m.1-7.9h0m0-67.7h0m0 75.7h0m.2-79.9h0m.2 75.1h0m.1 4h0m0-75.2h0m.1 83.7h0m.2-94.9h0m.1 5.7h0m.1-1.7h0m.3-20.4h0m.2 101.7h0m0-2.1h0m.1 11.9h0m.1-12.5h0m0-100.7h0m.4 106.4h0m0-81.4h0m0-25.2h0m0 9h0m.1 7h0m.2 85.8h0m0 1.1h0m.1-80.2h0m.2 100.1h0m0-92.1h0m0-12.8h0m.1 5h0m.1-19.2h0m.4 17.3h0m.1 76.6h0m0 22h0m0-90.1h0m.3-3.1h0m0 82.4h0m0 .9h0m.1-12.2h0m0 11h0m.3 14.1h0m0 2.3h0m0-20.9h0m.1 9h0m.2 .9h0m0-.8h0m.1-85.1h0m.1 1.7h0m0-31.2h0m.1 32.7h0m.1-9.8h0m.2 86.7h0m0-78.6h0m0 79.5h0m.1-80.9h0m.3 1.3h0m.1 84.6h0m.1-84h0m.2 77.3h0m.1-.3h0m.1-88.6h0m.1 104.9h0m0-103.5h0m.2 82.2h0m.1-1.7h0m0-76.8h0m.1-15.1h0m.2 20.5h0m0 79.6h0m0 14.2h0m.1-92.8h0m.2 73.4h0m0-85.8h0m0 105.1h0m0-93.6h0m.1-22.4h0m0 10.2h0m.1 83.2h0m.1-75.7h0m0-2.5h0m.1 5h0m0 4.2h0m0 72h0m.1-79.9h0m.2 7.4h0m.1-16.7h0m0 9.7h0m.1-13.8h0m0 88.9h0m0-72.6h0m.1 84.8h0m0-95.6h0m0 89.3h0m.2-82.9h0m.1 81.4h0m0 .1h0m.1-81.6h0m.1 7.6h0m.1-8.9h0m.1 81.9h0m.1-2.2h0m0 10.6h0m0-83.8h0m0 80h0m.1 6.5h0m.1-97.9h0m.1-3.4h0m0 101h0m0-9.6h0m.1-73.1h0m.1-17.4h0m.1 90.2h0m.1-73.1h0m0 72.9h0m0-82.9h0m.2 92.1h0m.2-97.8h0m0 98.5h0m.1-90.9h0m0 90.6h0m.1-7.6h0m0-79.1h0m0 83h0m0-81.2h0m.1 76.3h0m.2-1.8h0m.1-4.1h0m.1 30.5h0m.3-98.3h0m0 84.6h0m.1-7h0m.2-6.8h0m.3-72h0m.1 70.5h0m0-87.6h0m.3 90.7h0m.1 3.6h0m.1-8.1h0m0-74.4h0m.2 87.8h0m0-82.2h0m.3 78.8h0m0-81.6h0m0-3.5h0m.1 106.4h0m.1-101.4h0m0 98.7h0m.1-98.5h0m.2-5.7h0m.1-9.5h0m0 7.2h0m.1-12.7h0m.1 6.5h0m.1 13.2h0m.1-3h0m0 3.7h0m0 70.4h0m0-70.9h0m.1-25.5h0m0 101.2h0m.1-71.7h0m.1 67.9h0m.1 2.7h0m0 5.2h0m0-80.6h0m0 2.2h0m.2-1h0m0 84.7h0m.2-95.4h0m.3 93.5h0m.1-94.5h0m0 9.3h0m.1-2h0m0 .5h0m0 83.1h0m.1-4h0m.2 10.9h0m0-1.8h0m.1-2.2h0m0-79.3h0m0-3.1h0m.1 81.3h0m.2-5.8h0m.2-73.4h0m.2-1h0m.1 72.6h0m.1-91.3h0m0 95.7h0m.1 5.3h0m.1-80.2h0m0-2.5h0m0-.3h0m0-3.5h0m.3 73.4h0m0-69.8h0m.1 3.5h0m.2 0h0m0-14.1h0m.1-4.3h0m0 14.2h0m0 72.4h0m.1-83.1h0m.1 9.6h0m.1-13.8h0m0 97.6h0m.1-83.6h0m.3 2.1h0m.1-5.8h0m.1 87.7h0m0-5.4h0m.1 .1h0m.1 3.4h0m0-8.4h0m0-.4h0m.2 7.1h0m0-4.3h0m.2 15.2h0m.5-13.2h0m0-2.7h0m.1-84.2h0m.1 84.5h0m.1-76.8h0m0 81h0m.1-87.5h0m0 12.8h0m.2-2.8h0m.3-9.6h0m0 85.1h0m.1-77.6h0m.1-7.1h0m0 94.3h0m.1-4.9h0m.1-89h0m.3 11.1h0m0 68.9h0m.2 12.8h0m.1-12.2h0m0-75.4h0m.1 88.7h0m.1 6.1h0m0-19.5h0m.3-83.7h0m0 101.2h0m.1-112.9h0m0 94.1h0m0-.1h0m0-69.3h0m0-2h0m.1-1.7h0m.3 71.6h0m.1 16.2h0m.2-9.8h0m0-2.2h0m.2 2.4h0m0-5.3h0m.1-77.5h0m0 84.5h0m.1 21.1h0m0-27.8h0m.1-68.2h0m.2 .1h0m0 72.1h0m0 1.6h0m.2-90.4h0m.2 100.2h0m.1-109.4h0m.1 19.1h0m.3 6.9h0m0 .2h0m0-2.3h0m.1 76.3h0m.2-5.8h0m.1 6h0m0-6.4h0m0 1.2h0m.2-79.6h0m.1 9.2h0m.2-10.5h0m0 101.4h0m.1-95.3h0m0 75.2h0m.1 11.5h0m.1-90.6h0m.3 89.5h0m.1-7.8h0m.1-79.7h0m.2-.2h0m0 .8h0m0 7.2h0m.1-3.7h0m.1-1.1h0m.1-5.7h0m0 3h0m0 74.6h0m0-70h0m.2 73.8h0m0-71.1h0m0-2.8h0m.3 76.4h0m.1 1.3h0m.1-2.2h0m0 4.5h0m.1-106.5h0m0 119h0m.1-23.2h0m0 15.6h0m.1-8.5h0m0 6.8h0m.1-12.5h0m.1-80.2h0m0 88.8h0m.2-3.7h0m0-74.7h0m.1 75.3h0m0 .4h0m0-80.2h0m.2 5.4h0m.2 .7h0m0-16h0m0 102.7h0m.4-12.9h0m0-5.2h0m.2-81.4h0m0 12.5h0m.1 80.5h0m.1-12.1h0m.1-80h0m.1 79h0m0 2h0m.1-69h0m0 79.4h0m.1-82.6h0m0 82.6h0m0-96.8h0m.2 84.9h0m0-70.6h0m.2 79.2h0m.3-4h0m0-104.6h0m.1 23.6h0m.2 79.8h0m.1-70.9h0m.2-14.7h0m0 94.2h0m0-103h0m.2 91.3h0m0-81h0m.1 5.7h0m0-3.1h0m0 82.9h0m.1 16.9h0m.1-6.5h0m.1-8.4h0m.1-3.3h0m0-71.6h0m0 67.6h0m0-93.6h0m.2 23.4h0m0 71.2h0m.1 0h0m0-86.9h0m0 10.2h0m.1 2.9h0m0 77.8h0m.1-77.7h0m.1 4.8h0m.2 81.8h0m.1-89.6h0m0 78.9h0m0-90.5h0m.1 113.9h0m.1-110.4h0m.3 91.3h0m.1-4.9h0m0 4.1h0m.1-.2h0m.1-75.3h0m.5 74.4h0m.1-2.6h0m0-73h0m0-3.1h0m0 3.5h0m0-16.5h0m.1 90.3h0m.2 .5h0m0-76.6h0m.1 100.6h0m.1-22h0m0-1.4h0m0 12.7h0m.2-87.3h0m0-5.4h0m0 83.5h0m.3 8.4h0m0-11.4h0m.1-83.2h0m.1 90.9h0m.5 4.9h0m.2 6.7h0m.1-15h0m.1-85.7h0m.2 88.1h0m.1-10.2h0m.2-71.2h0m.3 2.5h0m.1 75.4h0m.2-8.4h0m.2-72.5h0m.1-6h0m.1 86.3h0m0-3.1h0m0-86.3h0m0 10.8h0m.2 85.7h0m.1-14h0m0-78.9h0m0-.8h0m.1 89.1h0m.1-90.3h0m0 81.6h0m.1-73.4h0m.1 72.5h0m.1 .9h0m0-.9h0m.1-72.1h0m0-2h0m0 79.3h0m0-94.5h0m.1 19.6h0m.3-13.9h0m0 92.4h0m.2-82.5h0m0-16h0m.2 104.8h0m0-84.9h0m.2 70.1h0m.1-1.4h0m.1 9.8h0m0-87.8h0m.1 81.7h0m.2-4.2h0m0-70.5h0m.1 71.5h0m.1-82.6h0m.2 89.2h0m0-2.1h0m.1-5.4h0m.2-84.5h0m0 86.7h0m0-69.3h0m.1 76.6h0m.1-97.4h0m.3 9.5h0m.1 4.9h0m.1 74.7h0m.2 14.6h0m.1-89.8h0m0 78.3h0m.1-84.9h0m.1 12.6h0m.1-2h0m.1 1.3h0m.1-11.9h0m.1 .9h0m.1 80h0m.1 13.6h0m.1 5.7h0m0-7h0m0-82.4h0m0-22.5h0m.1 97.2h0m.1-3h0m0 0h0m.1-77.7h0m0 76.7h0m0 12.2h0m.1-84.8h0m.1 87h0m.1-85.1h0m.1 75.3h0m.1 3.4h0m.1-77.2h0m.2 68.7h0m0-70.6h0m0-20h0m0 91.2h0m.1-76.6h0m.2 2.9h0m0 2.4h0m0 72.1h0m.1-70.7h0m.3-2.6h0m0 5.3h0m.1 92h0m.1-95.8h0m0 80.5h0m.2-76.6h0m0 72.2h0m.1-79h0m.2-10.8h0m.2 93.9h0m0-10.3h0m.1 24h0m.1-19.7h0m0-.2h0m.1 27.8h0m0-100.4h0m.2 69h0m0-79.8h0m0 89.8h0m0-105h0m.1 102h0m.1-75.8h0m0 70h0m0 7.1h0m.1-1h0m0-75.2h0m.1-.9h0m0 73.8h0m0 16.2h0m.2-12.7h0m.1-87.1h0m.1 6.2h0m0 5.2h0m0 70.3h0m0-84.7h0m0 14.4h0m.3 69.1h0m0 9.2h0m0-10.4h0m.1-68h0m0-.6h0m.1 76.7h0m0-4.3h0m.1-77.7h0m.1 6.4h0m0-15.6h0m0 4.6h0m.2 80.4h0m.1-85.8h0m.1-16.8h0m0 101.9h0m.1-81.4h0m.1 7.1h0m.2 2.4h0m.1-11.1h0m.1 8.3h0m0 81.6h0m0-85.9h0m.3 77.2h0m0 2.8h0m.1 19h0m.2-18.9h0m0-72.2h0m.1 80.3h0m0-89.8h0m.2 108.4h0m.1-106.9h0m0 99.5h0m.2-17.8h0m.1-88h0m0-7.8h0m.2 102.4h0m.3 12.5h0m.1-101.9h0m.1 77.9h0m0 .2h0m0-72.1h0m.1-7h0m.3 11.2h0m0-7.4h0m.1 75.4h0m0 5.1h0m0 6.6h0m0 1.2h0m.1-13.1h0m.2 4.6h0m.1-97.5h0m0 98.6h0m.1-78.7h0m.1 76.4h0m.3-73.5h0m0 3.3h0m.2 67.8h0m0-86.1h0m0 16.5h0m0 73.3h0m.2-78.4h0m.1 84.9h0m.2-82.9h0m0 75.7h0m0-73.5h0m.2-11.7h0m.1 11h0m.3-10.6h0m.1 3.7h0m0 77.8h0m0-66.7h0m.2 68.5h0m.2 2.2h0m0 11h0m.2-87.9h0m0 87.2h0m0-8.2h0m.1-89.7h0m.1-1.5h0m.1 17.9h0m.1 75h0m.1-78.5h0m.1 94.5h0m0-90.5h0m0 78h0m0-83.7h0m.1 2.4h0m.5 72.3h0m.1-1.3h0m.2-.7h0m.1 5.1h0m.1-2.2h0m.1-2.9h0m0-69.3h0m0 90.9h0m0-88.7h0m.1-7.2h0m0 75h0m.1 14h0m0-.2h0m.1-81.8h0m0 76.5h0m.2-9.3h0m.1-84h0m0 99.8h0m.2-96h0m.2 83.8h0m.1 3.7h0m.1-101.6h0m.1 15.9h0m.1 6.9h0m0 .5h0m0-22.1h0m0 20.5h0m.1 76.4h0m0 16.5h0m.2-5.2h0m.2-5.6h0m0-81.7h0m.1-16.3h0m0 20h0m0-3.7h0m.1 79.2h0m0-88.2h0m.2 1.7h0m.1-2.5h0m0 89.3h0m.1-8h0m0-67.9h0m0 89.6h0m0-2.9h0m.2-94.3h0m0 96.3h0m.1-14.3h0m0-72.7h0m.1-29.7h0m0 110.1h0m0-89.9h0m.3 77.5h0m0 17.6h0m.1-6.6h0m0-2.2h0m0-94.5h0m.1 85.2h0m0-92.3h0m.2 7.7h0m.1 97h0m.1-86.9h0m0 4h0m0 82.3h0m.2 1.2h0m0-95.4h0m.1 88.5h0m0 18.2h0m.1-94h0m.3 1h0m.3-4.2h0m.1-17.5h0m0 6.4h0m.1-11.8h0m.2 94.9h0m.2-68.2h0m0 73.3h0m.2-77.8h0m0-20.2h0m0 105h0m.1-4.8h0m.2-84.4h0m0 6.9h0m.1 0h0m0 90.1h0m.1-91.4h0m0-14.4h0m.1 9.2h0m0 76.9h0m.2-81.1h0m0 8.8h0m.1 84.5h0m0 6.3h0m.3-92.9h0m0-10.9h0m.1 10.5h0m.2 93.9h0m.1-9.1h0m.1-82.5h0m0-16.2h0m.4 97.7h0m0-79.3h0m.1 80.7h0m0-8.5h0m.1-69.8h0m.2-1.8h0m0-6.3h0m.1-3.9h0m.2 12.6h0m0 81.8h0m.1-81.9h0m0-19.2h0m.1-5.1h0m0 93.6h0m.1-70.2h0m.2-8.3h0m.1-8.5h0m0 90.5h0m0-2.4h0m0-76.2h0m.2 93.9h0m0-101.6h0m0-.8h0m.2 90.5h0m0-99.8h0m.1 19.2h0m.2 72.9h0m.1-86h0m.3 95.9h0m.1-80.6h0m.1-6.7h0m0-5.9h0m0 88.3h0m0 15.5h0m0-93.7h0m.1-5.9h0m0 6.8h0m.1 70.6h0m.2 7.6h0m0-76.2h0m0 75.7h0m.1 .2h0m0 6.5h0m.2-98.8h0m0 93.7h0m.2-6.9h0m0 10.2h0m.1-10.8h0m.2-78.8h0m0-17.9h0m.1 5.4h0m.1 22.1h0m0-1.7h0m.1 3.6h0m0-6.4h0m0 75.7h0m0-71.9h0m.3-23.1h0m.1 8.6h0m.2 2.1h0m.1 13h0m.1-21.7h0m0 98.6h0m.1-.2h0m0-8.1h0m0-79.6h0m.1 101h0m.1-18.3h0m.1-77.4h0m0 75.7h0m.1-70.5h0m0 69.1h0m0 30.5h0m.1-23.6h0m.1-88.5h0m0 91.5h0m.1-84h0m.2 5.7h0m.1-7.4h0m.1 5.3h0m0 76.4h0m.1-82.3h0m.2-1.5h0m0 78.4h0m.1-67.7h0m0 71.7h0m.1-75.9h0m.1 3.7h0m0-17.3h0m.2 10.6h0m0 4h0m.1 78.6h0m0 .4h0m0-.7h0m.1-8h0m0-94.8h0m0 98.4h0m.1-79.9h0m0 81.3h0m0-79.6h0m0 82.4h0m.1-97.8h0m.1 23.2h0m.1-4.8h0m0-3.9h0m0-13.6h0m.1 10.3h0m0 86.7h0m0-7.1h0m.1-85.6h0m0 86.3h0m0 6.9h0m.3 6.7h0m0-94.7h0m.1 4h0m0 .5h0m.1 2.9h0m0 5.4h0m.1 80.4h0m.1-10.7h0m0-78.6h0m.1 79.4h0m.1-92.9h0m.1 99.2h0m.1-78.1h0m0 .8h0m.1 68.7h0m0-70.4h0m.1 72.8h0m0-77.3h0m.1 6.9h0m.2 72h0m0-3.9h0m0 8.1h0m.1-83.2h0m.2-.9h0m.1 3.6h0m.1 3.9h0m0-5h0m0 77.7h0m.1-91.5h0m0 89.8h0m.1-70.6h0m.1 72.2h0m0-.8h0m.1 9.2h0m0-82.5h0m.1 .1h0m.1-10.9h0m0 11.9h0m.1 68.1h0m0-84.8h0m0 16.1h0m.1-13.5h0m0 8.8h0m.6 1.7h0m0-7.6h0m0 98.3h0m0-92.8h0m0 80.8h0m.1 14.2h0m0-89.6h0m.1 1h0m.1-11.1h0m0 7.9h0m.1 70.4h0m0-76.1h0m.1 86.2h0m0-5h0m0-79.5h0m.4-15.3h0m.1 96.2h0m.2 10.2h0m.1 7.7h0m.1-23.1h0m0-71.9h0m0-5h0m.1 3.7h0m0-14.8h0m.1 104.3h0m.1-17.3h0m0-1.2h0m0-81.9h0m.1 96.2h0m.2-84.1h0m.1 90h0m.1-93.2h0m0 78.4h0m0 1.8h0m.1-85.4h0m0 106.4h0m.1-95.3h0m.1-14.8h0m.1 83.1h0m0 6.4h0m.1 15.6h0m0-95.5h0m.2 4.8h0m0-4.3h0m0 84.1h0m.1-81.9h0m0 84.4h0m.1 4.9h0m0-107.9h0m.1 98.8h0m0 1.4h0m.1-11.6h0m0-76h0m0 77.2h0m.1-1.3h0m.1-68.2h0m.1 72.1h0m0-97h0m0 20h0m0 .5h0m.4 0h0m0 79.4h0m.4 1.1h0m0-4h0m.1-97.6h0m0 112.8h0m0-14.9h0m.2-2.6h0m0 15.4h0m.3-12.1h0m0-78.2h0m.1 88h0m.1-12.4h0m.1 6.5h0m.2-80.7h0m.1 76.3h0m.1 9h0m0-2.5h0m0-83.8h0m0-5.7h0m.3 85h0m0-91.3h0m0 100.1h0m.1-101.7h0m.1 14.4h0m.2 2.6h0m0 3h0m.1 80.7h0m0-8.5h0m.1 0h0m.1-86.3h0m.1 81.1h0m0 2.2h0m.1 10.9h0m.1-84.3h0m0 71.5h0m.1 8.8h0m.1-8.3h0m.1 .9h0m0-82.4h0m.1 .7h0m0 85.8h0m.2-2.8h0m.1 17.7h0m.1-99.9h0m.2 83.5h0m0-72.8h0m.1-1.8h0m.1-5.5h0m.2 5.2h0m0 96.1h0m.2-114h0m.2 89.8h0m.1-79.3h0m0 8.7h0m.1 77.2h0m.1-77.7h0m.1 80.3h0m0 4.1h0m.2-11.1h0m.2-2.6h0m0 13h0m.2-93.4h0m0 2.2h0m0 10.1h0m.1 71.2h0m.1-76.7h0m0 2.9h0m.1 70.9h0m.3-1.6h0m0-66.9h0m.1 77.6h0m0-98.1h0m.3 89.9h0m.2-69.8h0m0 78.3h0m.1-111.1h0m.1 100.3h0m.1-81.9h0m.1 83.7h0m.2-68.4h0m0 72.2h0m.2-72.3h0m.1-13.7h0m0 11.5h0m0 69.7h0m.1-76.2h0m0 3.3h0m.2 87.2h0m0-85.2h0m0-.8h0m.1 81.1h0m.1-3.2h0m.1-4.7h0m.1-78.7h0m.1 85.1h0m0 6.3h0m0-87.3h0m.1 4.2h0m.1-7h0m.2-2.8h0m.1 106.4h0m0-17.7h0m.1-6.3h0m.1-78.3h0m0 85.4h0m.1-6.6h0m.1-82.2h0m.1 9.1h0m.1-.6h0m.1-11h0m.2 12.1h0m0-17.3h0m.2 95.6h0m0-10.9h0m.2-78.6h0m.1 87.6h0m0-7.3h0m0-82.1h0m.1 90.7h0m.2-90.2h0m0 101.2h0m0-115h0m.3 24.1h0m.3 99.6h0m0-104.3h0m.1 5.4h0m.1-4.4h0m.1 75.5h0m0-.6h0m.1 5.7h0m.1 5.5h0m0-88.1h0m.4 1.9h0m.1 85.5h0m0 14.4h0m0-15.8h0m0-.3h0m.2-85.8h0m.1 84.7h0m0-89.3h0m.4 9.9h0m.3 78.7h0m0-7.8h0m0-80.5h0m.1 3.8h0m.1-2.3h0m0-2.4h0m0-1.4h0m.1 13.3h0m.1-5.9h0m.1 7h0m.1 68.9h0m0-74.9h0m0 78.7h0m.2-95.5h0m0 14.2h0m.2 81.6h0m.4-78.2h0m.1 81.9h0m0 1.7h0m.1-1.7h0m0-8.8h0m0 5.5h0m0-83h0m.2 82.1h0m0-.3h0m.1-71.1h0m.2 73.8h0m0-91.1h0m.1 88.8h0m.1-75.8h0m.2 70.8h0m.1 .8h0m0 8.9h0m0-85.3h0m0 78.6h0m0 2.4h0m.1-74.6h0m0 2.5h0m0-23.9h0m.4 22.6h0m0-30.5h0m.1 29.1h0m.4-1.3h0m.1 .8h0m.2 3.2h0m.1-24.4h0m0 23.7h0m.1 69.5h0m.1-1.8h0m.1-76.2h0m0 80h0m.2-3h0m0-70.3h0m0 79.1h0m.1-76.1h0m.4 71.2h0m0 15.3h0m.1-11.8h0m0-76h0m0-.7h0m.1 74h0m0 8h0m.1-13.6h0m.1 4.6h0m0-4.2h0m.1-71.7h0m.2 4.8h0m.1-3.5h0m.1 2.6h0m.2 76.7h0m.1-3h0m.2 1.3h0m0 15.2h0m.1-1.6h0m0-100.1h0m.3 86.8h0m0-2.7h0m0-4.9h0m.2-68.6h0m.1-1.3h0m.1 73.2h0m0-79.2h0m.1 6.6h0m.2-3.2h0m.5 5.5h0m0 72.6h0m.1-73.4h0m.1-9.4h0m0 80.8h0m.1-74.3h0m0-6.2h0m0 81.5h0m0-86h0m.1 11h0m.2 3.8h0m.1-14.8h0m.1 3.3h0m0 6.7h0m0 74.5h0m.2 .3h0m.4 1.4h0m.1-4.6h0m0 3.2h0m.1-88h0m.1 1.9h0m.2 12.7h0m0-7.9h0m.1 87.2h0m0-3.4h0m.2-88.5h0m0-7.7h0m0 99.5h0m0-1.2h0m.1-4.8h0m.1-70.1h0m0-7.6h0m.1-15.4h0m.1 92.2h0m0-76.6h0m0 78.8h0m0-74h0m.2 71.4h0m0-69.3h0m.1 68.9h0m0-.1h0m0 22.9h0m.2-93.5h0m.2 69.5h0m0-77.6h0m.1-7h0m0 96.4h0m0-80.7h0m.1 72.1h0m0-90.7h0m.1 15.7h0m0-6.4h0m.2 81.2h0m0-79.4h0m0 7.3h0m.1 .1h0m0 81.4h0m0-89h0m0 77.8h0m.1-78h0m.2-1.3h0m.1 10.4h0m0 71h0m.1 9.6h0m.2-91.4h0m0-1.5h0m.3 82.5h0m.3-78h0m0 84.6h0m.1-77.5h0m0 70.2h0m.1 3.6h0m.2 1.2h0m0-92.2h0m.1-14.6h0m0 31.2h0m.1 1.9h0m0 67.5h0m0 9.7h0m.1-81.2h0m.1-.2h0m0-1.2h0m0-3.7h0m0 91.6h0m.2-109.3h0m0 104.4h0m.1-109.7h0m0 100.9h0m0-80.6h0m.2 8.1h0m0 71h0m0 25.1h0m.1-94h0m0-4.4h0m.2 0h0m.1 79.6h0m0-5.8h0m.4-101.2h0m.1 18.4h0m0 82.8h0m.1-69.7h0m0-16.4h0m.1 6.6h0m.2 89.7h0m0-83.2h0m.1 5.2h0m0 71.5h0m.2-71.3h0m0-6.1h0m.4 77.3h0m0 2h0m.1-80.1h0m0-7.5h0m0 81.9h0m.1 10.5h0m0-100.9h0m0 21h0m.1 93.2h0m.1-22h0m.1 2.7h0m.2 14.7h0m.1-17.7h0m0-86.7h0m.1 15.6h0m0-8.7h0m.1 92.8h0m.1-98.6h0m0 87.6h0m.2-75.3h0m0-7h0m.1 85.8h0m.1 13.1h0m.5-13.8h0m0-.1h0m.1-78.7h0m.3 88.2h0m.1-95.2h0m.1 83.9h0m0-.6h0m.1-72.9h0m.1-11.7h0m.1 2.6h0m0 77h0m.1 8.4h0m.3-3.2h0m.2-2.5h0m.2 5.1h0m.2-77.3h0m.3 1.2h0m.1 75h0m.2 1.6h0m0-75.4h0m.2-5.2h0m.1 4.4h0m0 .8h0m0-2.4h0m0 70.3h0m.1 14.1h0m0-88.8h0m0 81.4h0m.1 11h0m0-89.6h0m.3-6.4h0m.1 5.6h0m.1-.2h0m0 5.9h0m.2 72.6h0m.6-5h0m0-67.9h0m.1-.4h0m0 85.8h0m.1-96h0m0 86.4h0m0-104.9h0m.1 113.3h0m0-101.1h0m.1-4.4h0m.1 89.4h0m.1 4.6h0m.2-87.3h0m0 1.5h0m0 100.4h0m.1-11.1h0m0-4.2h0m.2-77.4h0m.3-9.2h0m.1 107.9h0m.1-15.7h0m0-9.4h0m.2-68h0m0-7.7h0m0-7.9h0m0 14.3h0m.1 70.8h0m0-.9h0m.5 4.6h0m0-3.3h0m0-90.6h0m.1 14.4h0m0 76.1h0m.1 3.1h0m0-5.6h0m.1-76.6h0m0-4.9h0m.3 95.1h0m0-89.4h0m0 76.7h0m.1-84h0m0 8.7h0m0-1.9h0m.2-5.1h0m0 83.9h0m.1 10.2h0m.1-4.1h0m.1-83.6h0m0 84h0m0-8.2h0m.3 13.4h0m.3-5h0m0 7.7h0m.1 5.2h0m0-92h0m0 1h0m.2-10.8h0m.1-2.6h0m.2 14.9h0m.1 84h0m.2-104.3h0m.1 1.3h0m0-.8h0m0 15.8h0m0 .9h0m.5-24.2h0m0 10.7h0m.1 9.3h0m.1 75.4h0m0 11.2h0m0-90.6h0m.1 8h0m0 1h0m.1-13.7h0m0 88.6h0m0-84.9h0m.1 80.3h0m.3-89.4h0m.3 89.9h0m.2-76.9h0m.1 77.5h0m.1 10.9h0m0-83.8h0m.1 3.9h0m0-18.7h0m0 10.4h0m.1 5.1h0m.1 73.7h0m0 .2h0m.1-88.5h0m0 10.2h0m0 97.6h0m0-23.5h0m.1 11.9h0m0-9.8h0m.1 6.5h0m0-2.4h0m0 12.2h0m.1-16.6h0m0-74.2h0m.2 73.3h0m.1-.5h0m.1-73.5h0m.1-14.9h0m0 89.8h0m.2 4.4h0m.2-6h0m0 .2h0m.1 1.6h0m.2 19.1h0m0-7.4h0m.2-1.9h0m.1-78.1h0m0-3.8h0m0 95.3h0m.3-18.1h0m.2-99.8h0m0 100.9h0m.1-80.2h0m.2 1.6h0m.1-.4h0m.1 90.5h0m.3-19.6h0m.1 21.5h0m.2-20.3h0m0 2.7h0m.1 2h0m.2-100.8h0m.1 110.2h0m0-86.1h0m.2-8.1h0m0 107.2h0m0-112.6h0m.2 6.4h0m.1 86.4h0m0-76.6h0m.1 82.2h0m.1-88.3h0m.1-7h0m0 4.9h0m.1 5.5h0m0 77.3h0m.1-6h0m.1 10h0m.1-8.9h0m.2-75.4h0m.1 6.4h0m0-8.9h0m.2 82.5h0m0 10.4h0m.4-83.6h0m0 77.9h0m0-4.3h0m.2-76.6h0m.1 76h0m.1 1.4h0m0-75.3h0m.1 1.6h0m.1 89.6h0m0-96.2h0m.1 75.9h0m.1-.7h0m.2-75.6h0m0 6.3h0m.1 79h0m0-8.9h0m0 13.7h0m.1-107h0m.1 90h0m0-73.8h0m.1 7.1h0m0-7.8h0m0 86.6h0m.1-84.6h0m.1 103h0m.1-21.8h0m0-78.1h0m.1-17.4h0m0 86.9h0m.1 1.8h0m0-.4h0m.1-69.1h0m0 74.3h0m0-80.3h0m.1 79.6h0m0 9.4h0m.4-87.7h0m0 4.8h0m0-2.3h0m0 3.4h0m.2 79.5h0m0-12.8h0m.1-67.1h0m.1 66.8h0m.1 7.2h0m.1-.1h0m.1-78.2h0m0-2.4h0m.3 81.3h0m0-76.5h0m.1 83.2h0m.1-4.6h0m.1-9.1h0m0 18h0m.1-92.9h0m.1 4.1h0m0 3h0m.2-13.4h0m0 87.3h0m.1 9h0m.1-82.2h0m.1 74.1h0m0-78.2h0m.1-6.7h0m0 90.1h0m.2-85.5h0m.1 75.5h0m0-2.4h0m.3 4h0m0-82.2h0m.1 5.5h0m0 85.6h0m0-93.5h0m.1 10.6h0m.1 80.8h0m0-7.6h0m0-80.1h0m.2 77.1h0m0-71.2h0m.3 71h0m0-85.6h0m.1 103.2h0m0-13.3h0m.1 2.6h0m0-6.6h0m.1-71.4h0m0-2h0m.1 87.5h0m.2-90.7h0m.1 78.9h0m.1-78.8h0m0 7.6h0m.1 72.8h0m0 24h0m0-27.5h0m0 1.5h0m.1-72h0m.1-4.1h0m.1 2.8h0m0 75.5h0m0-3.4h0m.1-68.4h0m.1 80.6h0m.1-7.1h0m.1-5.5h0m.1-70.9h0m.1-2.3h0m0-6.9h0m.1 80h0m.3 16.6h0m.1-84.8h0m.1 74.2h0m0 23.5h0m.5-110h0m.1 82.5h0m.1-79.1h0m.3 77.8h0m.1 12.7h0m.1-12.9h0m0-68.4h0m.2 83.7h0m.1-13.7h0m.1-2.2h0m0-74.4h0m0 5.2h0m0 2.1h0m.1-3.4h0m0 69.6h0m.1 2.2h0m.1-69.1h0m0-11.3h0m0 5.4h0m.1 73.2h0m.1-68.3h0m0-20.9h0m.1 12.1h0m.1 80.9h0m0 6.2h0m.1-101.6h0m.1 10h0m.5 87.6h0m.3-77.6h0m0 83.6h0m.1-88.1h0m0 8.8h0m.1 75.9h0m.1-89h0m0 13h0m.2 76.4h0m.2-78.9h0m.1-11.8h0m0 88.8h0m.1-76.3h0m0 93.5h0m0-110.1h0m0 106.3h0m.2-9.6h0m0-86.7h0m0 9h0m0 74.5h0m0-79.1h0m0 74.5h0m0-70.7h0m.1 73h0m.1-73.2h0m.1 70.8h0m0-71.2h0m.3 72.3h0m.2-92.7h0m.1 22h0m.2 82.6h0m0-87.1h0m.1-21h0m0 105h0m.2-8h0m0-5h0m.2 .5h0m0 25.7h0m0-94.5h0m0-6h0m.1 100.2h0m.2-11.6h0m.2-83.4h0m.1 73h0m.1-1.2h0m.1-79h0m0 81.4h0m0-81.7h0m.1 76.7h0m0-73.7h0m.1 81.3h0m.1 3h0m0-78.2h0m0 79.9h0m.1 3.1h0m.1-9h0m0 3.7h0m.2-6.2h0m0-103.9h0m.1 101.9h0m.2 10.7h0m0-.7h0m0-90.2h0m.1 86.5h0m0-6.8h0m.1 1.2h0m.1 16.8h0m0-114.9h0m.1 108.8h0m0-5.2h0m0-78.4h0m.1 90.4h0m.3-14.6h0m.1-74.9h0m0 71.5h0m.1 3.8h0m0-82.9h0m0-17h0m.1 21.5h0m0 76.1h0m.1-1.2h0m.2-72.1h0m0 2.1h0m0 74.6h0m0-100.9h0m.1 110.8h0m.3-97h0m0 10h0m.1 2.7h0m.2-8.6h0m.2 5.8h0m0 99h0m.1-27.2h0m.2-70.1h0m.3 71.3h0m0 2.4h0m0 9.1h0m.1-97.7h0m0 84.3h0m.1 .2h0m0 7.6h0m.2-76h0m0-1.4h0m.2-1.6h0m0 71.1h0m.2-70.7h0m0-5.5h0m.1 83h0m.2-1.3h0m0-80.2h0m0 6.4h0m0 86h0m.1-87.2h0m0-6.9h0m0 83.3h0m.1 12.6h0m.1-87.1h0m.1-4.4h0m0-11h0m.3 89.3h0m0 10.9h0m0-14.9h0m0 17.2h0m0-12.3h0m.2 6.7h0m.1-2h0m0-8.5h0m.1 24.4h0m.1-1.7h0m0-99.4h0m0 99h0m.1-100.3h0m.2 74.8h0m.1-71.6h0m.1 .5h0m.1 72.4h0m0 7.9h0m0-2.3h0m0 22.5h0m.1-29.9h0m.1 11.8h0m.1-.9h0m0-87h0m0 76.5h0m.1-82.3h0m.2 89.5h0m0-80.3h0m.1-.2h0m.2 2.1h0m0-13.5h0m.3 13.4h0m0 2.8h0m.2 73.2h0m0-2.8h0m.1 14.9h0m.2-7.2h0m.1-81.3h0m0 72.1h0m.2-.3h0m.1-79.7h0m.2 80.3h0m.1-70.9h0m.5-5.7h0m0 1.9h0m.1-1.6h0m.1 1.7h0m.1-2.2h0m.1 3.4h0m0 79.3h0m0 4.3h0m0-93.2h0m.1 12.5h0m.1 69.6h0m.1-67.7h0m0 79.2h0m.1-98.1h0m0 89.5h0m0-78.1h0m.2 5h0m0-26.9h0m.1 12.4h0m0 100.3h0m.1-.6h0m.1-88.1h0m0 4.2h0m.1-2.4h0m.4 1.1h0m0-26.2h0m.1 101.1h0m.2-76h0m0-9.3h0m.1 93.9h0m.1-12.6h0m0-78.8h0m.1-10.3h0m0 89.4h0m.1-72.6h0m0 83.9h0m.1-96.6h0m.2 87.7h0m.1 14.7h0m0-90.8h0m.5 90.5h0m0-89.6h0m.1 95.3h0m0-100h0m.3 8.4h0m.1 67.4h0m0 19.1h0m0-11.8h0m.2-2.3h0m0-4.8h0m0 8.2h0m0-94.7h0m.1 12.1h0m.1 77.9h0m0 11.7h0m.2-7.6h0m0-79.6h0m.1 79.1h0m.1 16.9h0m0-92.6h0m0-6.7h0m.1 .7h0m.2-1.3h0m.1 1.6h0m0 74.2h0m.1 1h0m0 22.2h0m.1-4.7h0m0-7h0m.1-78.7h0m.1 69.2h0m0 .4h0m0 19.9h0m.1-13.2h0m.2 11.5h0m0-90.2h0m0-19.2h0m.1 18.7h0m0 88.3h0m.1-12.4h0m.1 2.4h0m0-79.2h0m.1 4.6h0m.2 73.7h0m.1-6.6h0m0-69.7h0m0 69.4h0m.2 3.2h0m0-72.7h0m.1 81h0m0-7.1h0m.1-75.3h0m0-2.3h0m0 2.9h0m.2 3.6h0m0-16h0m0 102.2h0m.1-16.1h0m.1-73h0m0 75.4h0m0-75.5h0m0 79.1h0m0 1.1h0m0-9.8h0m.2-91.1h0m0 99.3h0m.1-96.4h0m.1 93.8h0m0-76.7h0m.1 72.1h0m0-2.3h0m.1-.1h0m0-78.8h0m0 11.6h0m.1 .1h0m0 73.3h0m.2 6.8h0m.1-80.4h0m.1-33.2h0m.4 124.8h0m.5-20.7h0m0 14.7h0m.1-17.9h0m0-81.4h0m0 91.6h0m0-3.4h0m.1-.4h0m0-87.7h0m0 12.8h0m.1 79h0m.1 6.4h0m0-11.3h0m0 11.1h0m.5-112.3h0m0 109.5h0m0-87.9h0m0 86.9h0m.1-84h0m.1 .8h0m.2 4.1h0m.3 78.2h0m.2-84h0m0-2.2h0m.1-3.4h0m.1-4.1h0m0 6.6h0m.1 82.2h0m0-86.5h0m.1 11h0m0 89.8h0m.1-17.2h0m0 8.2h0m.1-11.4h0m.2-.7h0m.3 2.9h0m0-87h0m0 15.1h0m.1 74.5h0m0-73.5h0m.1-.8h0m.1 87h0m.1-99.5h0m.1 86.1h0m0-72.6h0m.1-10.3h0m.2 102.8h0m0-22.4h0m0-73.1h0m.1-27.4h0m.1 107.8h0m.1-86.6h0m.1-4h0m.1 6.9h0m0-24.4h0m.1 30.1h0m0 1.1h0m0-1.7h0m0 74h0m0 2.3h0m.1-.9h0m.1-.9h0m0-89h0m0 6.8h0m0 103.2h0m0-108.9h0m.1 10.3h0m0 76.9h0m0-71.6h0m0 .3h0m0 74.4h0m0 3.7h0m.2-88.5h0m0 .5h0m.1-1.1h0m.1 79.6h0m.1 8.8h0m.1-81h0m.1 75.7h0m0-73.2h0m.1 72.9h0m.1-81.4h0m.2 76.8h0m.1-1.2h0m0 3h0m0 15.4h0m.1-100.8h0m.2 90.1h0m0-102.4h0m.1 23.8h0m0 79.2h0m.3 13.7h0m.1-90h0m.1 .5h0m.1-3.6h0m.5 75.8h0m.1 2.6h0m0-2.6h0m.2-2.5h0m.1-91.2h0m0 89.7h0m.1 28.5h0m0-9.8h0m.1-91.1h0m.3 90.5h0m0-2.9h0m.2 1.5h0m.1-88.3h0m.1-3.1h0m.4 87.2h0m0-9.4h0m0-2.8h0m.2-82.1h0m.1 15.1h0m0 74.2h0m.4-83.7h0m.1-1.9h0m.2 8.6h0m.1 2.9h0m0-8.6h0m0 83.6h0m0-93.9h0m.1 99.4h0m.1-101.5h0m.1 18h0m0 72.7h0m0 3.1h0m0-81.9h0m.1 7.6h0m.3 72.1h0m.1 7.6h0m0-81.6h0m0 75.1h0m0-80.7h0m0 82.9h0m.2-7.3h0m0 11.4h0m0-94.6h0m.1 85.7h0m.1-74.8h0m.1 80h0m.1 2.5h0m0-89.4h0m0 90.5h0m0-6.3h0m.2-4.1h0m.2-74.6h0m0 76.1h0m.1 3.8h0m0-73.7h0m.1 72.7h0m0-76.3h0m.2 80.5h0m0-87.3h0m.1 79.8h0m0 15.1h0m0-90h0m0 1.9h0m0 81.1h0m.2 1.2h0m0 1.2h0m.1 .9h0m.1-84.2h0m.1-7.2h0m0 95.5h0m0 .7h0m.1-2.5h0m.3-88h0m0 82.4h0m.6-85.1h0m.1 75.8h0m0 25.8h0m.1-96.3h0m.1 73.6h0m.1 1.2h0m0-72.9h0m0 67.5h0m.2-78.2h0m.1 9h0m.1-6.9h0m0 76.7h0m.2 15.2h0m0-.7h0m0-10.8h0m.1 .3h0m.1-3.8h0m0-91.8h0m0 101.3h0m.1-2.8h0m.1-86.2h0m0 80.2h0m0-71.6h0m.2 70.1h0m.2 7.2h0m0 5.3h0m.1 4h0m.1-112.7h0m.1 20.6h0m.1 75.7h0m0-66.6h0m.1-13.6h0m.1-10.7h0m.4 96.4h0m0 5.9h0m.1 10.1h0m.2-10.4h0m0-81.5h0m.1 74.7h0m.1-72.4h0m.1-2.9h0m0 81.6h0m.2 .3h0m0-5.2h0m.1-80.7h0m0-.8h0m0 77.1h0m0 7.3h0m.1 5.3h0m0-87.9h0m.1 7.2h0m.1 68.6h0m.1-72.3h0m.1 78.4h0m0-85.6h0m0 10.9h0m.1 70.7h0m0-74.7h0m.1 80h0m0 7.9h0m.1-13.7h0m0 18.7h0m0-90.1h0m.1 80.7h0m0-83h0m0 75.6h0m0-88.7h0m0 88.4h0m.1-3.8h0m0-69.7h0m.1-12.6h0m.1 102.6h0m0-94.7h0m.1 1.5h0m.1 79h0m.4-87.5h0m0 8.2h0m.2 92.1h0m0-16.6h0m0-72.5h0m.1 80.3h0m.2-87.3h0m.1 82.5h0m.1-6.5h0m.3-71.3h0m.2 84.3h0m.1-88.9h0m0 5.2h0m.1 81.7h0m.1-110.2h0m0 105.3h0m.2-.4h0m0-82.9h0m0-11.6h0m.1 21.6h0m0-24h0m.1 94.2h0m.1-73.4h0m.2 4.2h0m0 72.6h0m0-78.2h0m0-11.2h0m.2 11.1h0m0-1h0m0-1.8h0m.1-.1h0m0 .6h0m.1-3.4h0m0-1.6h0m.4 82.2h0m.3-2.4h0m.2 4h0m.1-4.2h0m0-76.1h0m.1 7h0m.2 78.4h0m0-78.1h0m.1-11.3h0m0 81.5h0m.1-86.6h0m.1 4.9h0m.2 89.1h0m.1-84.7h0m0 77.1h0m.1-84h0m.2 94.6h0m0-2.3h0m.1-87.6h0m0 10.9h0m.1-.1h0m0-9.4h0m.3-8.8h0m0 85.8h0m.1 9.9h0m0-79h0m.3-.9h0m0 75h0m.1-78.9h0m0 3.2h0m0 3.9h0m0-2.2h0m.1 71.6h0m0-91.8h0m.1 7.4h0m0 .4h0m0 83h0m.2-101.6h0m0 125.6h0m.2-6.6h0m.1-11h0m0-91.2h0m.3 83.2h0m.1-76.9h0m0 7.3h0m.1 69.5h0m0-79.8h0m.1 10h0m0-.1h0m0-14.8h0m.1 94.1h0m0-89.1h0m.1-16.3h0m.2 95.7h0m0 9.1h0m.1-89.4h0m0 13.1h0m.1-10.7h0m.1 78.8h0m.1 13.8h0m.1 15.4h0m.1-104h0m.1 76.7h0m.2 3.6h0m.1-.6h0m0 3.5h0m.3-84.7h0m.2 6.2h0m0 70.9h0m0-.8h0m.2-80.2h0m0-1.1h0m0 102.1h0m.1-93.9h0m.2 76.9h0m0-79.8h0m.2 84.3h0m0 .2h0m.1-85h0m0 7.7h0m.1-7.7h0m.1-8.3h0m0 86.1h0m0 5.2h0m.1-6.3h0m0-69.6h0m0 78h0m.1-7.4h0m0-86.4h0m0 16.1h0m.1 73.4h0m0-77.3h0m.3-18.5h0m.1 20.5h0m.1 2.3h0m.2 73.2h0m.2-85.6h0m.1 85h0m0-85.3h0m.1 6.3h0m0 99.8h0m.1-24.9h0m0-79.5h0m0 86.2h0m.2-81.7h0m0 87.5h0m0-89.1h0m.4 8.4h0m.2-7.2h0m.2 6h0m0-1.7h0m0 2.3h0m0 76.3h0m0-2.1h0m.1-4.3h0m.1-74.8h0m.3 1.3h0m.1-22.7h0m0 22.2h0m0 75.7h0m.2 13.2h0m.1-8.7h0m.1-74.9h0m.1 80h0m.1-83h0m.1 3.1h0m0-2.1h0m0 81.6h0m.1-7.5h0m.2 .2h0m0-73.3h0m.2 74.8h0m.2-99.2h0m0 20h0m.3 5.8h0m.3-1.8h0m0-.7h0m.1 75.5h0m0-86.6h0m0 .8h0m.1 79h0m0 3.5h0m.1 2.7h0m.3-.5h0m0-3.7h0m.1-90.1h0m.1 11.7h0m.1 2.5h0m.2 7.9h0m.1-1.9h0m0 73.6h0m0-82.2h0m.2-2.9h0m0 8.8h0m0-13.6h0m.1 9.8h0m0 78.1h0m.1-93h0m0 104h0m0 2.8h0m.1-16.7h0m.1 2.7h0m0-1.5h0m0 4.4h0m.1 3.3h0m.1-79h0m.1 70h0m0-70h0m0-.1h0m.1 75.1h0m0-4.6h0m.1 1h0m.1 5.3h0m0-78.3h0m0-7h0m.1 3.5h0m0-18.8h0m.1 4.7h0m0 107.9h0m.1-107.6h0m0 9.3h0m.1 82.1h0m0-76.4h0m.1 75h0m0-75.3h0m0 73.9h0m.1 .4h0m.1-75.6h0m.1 4.2h0m.1 84.7h0m0-106.4h0m0 101.7h0m0-3.5h0m.1-81.9h0m0 89.7h0m.2-13.2h0m0 2.6h0m.2-2.8h0m.1 .5h0m.1-82.8h0m0 93.3h0m.1-87.4h0m.1 8.3h0m.2 68.5h0m0 19.5h0m0-12.7h0m.3-73.9h0m.1 89.1h0m0-21.1h0m.1-78.5h0m.2 83.8h0m.1-85.7h0m.1-4.9h0m0 86.6h0m0 23.3h0m.2-95.7h0m0 79.3h0m.2-80.5h0m0-.9h0m0 74h0m.1 1.2h0m.2 17.8h0m.1-110.8h0m0 91.9h0m.1 .2h0m0-75.2h0m.1-.9h0m0 5.1h0m.1-6.4h0m0 86.8h0m0-88.1h0m.3 83.6h0m.1-75.3h0m0-1h0m.2-31.9h0m.1 108.5h0m.1-7.4h0m0 5.1h0m.2 10.1h0m.2 4.8h0m.1-86.9h0m0-11.6h0m0 91.2h0m.1-.6h0m.1-82.5h0m.2-1.6h0m0 81.6h0m0 1.2h0m.4-92.7h0m.2 15.2h0m0-4.8h0m.3-3.8h0m0-13.8h0m.1 21.8h0m0-.7h0m0 74.4h0m.2-75.6h0m.1 73.3h0m.1 2.8h0m.1-77.4h0m0 1h0m0 69.4h0m.1-80.8h0m.2 92.3h0m.1-5.4h0m0-88.8h0m.1 108.7h0m.1-23h0m.1 1h0m.1 12.3h0m0-92.1h0m.1-12.8h0m.1 13.1h0m.1 78.3h0m.2-2.1h0m0-89.6h0m.1 10.1h0m0-17.5h0m.2 28.4h0m0 73.6h0m.1-81.7h0m0 3.5h0m0-13.2h0m.1 100.8h0m0-92.6h0m.2 10.1h0m.3 82.7h0m0-83h0m.3-13.4h0m.1 9.5h0m0 97.9h0m.1-99.4h0m.1 75.3h0m.1-73.7h0m.1 72.8h0m.1 0h0m0-79h0m0 77.6h0m0 6.4h0m0-4.5h0m.1-71.5h0m0-11.4h0m0 5.9h0m0-3.9h0m0 10.1h0m.2-27.7h0m0 105.7h0m.3 13.5h0m0-14.1h0m0-.3h0m.2-5.6h0m.1-69.1h0m0-15.5h0m.1 109.1h0m.1-24.4h0m0 3.4h0m0-84.8h0m0 .2h0m.3 79.9h0m.1 3.1h0m.1 21.4h0m.1-101.6h0m.1 4.9h0m.1 4.1h0m0-7.5h0m.1 85.2h0m.2-77.3h0m0-32.7h0m.2 113.1h0m0-12.3h0m0 4.4h0m.1-84.1h0m0 84.6h0m.3-86.2h0m.1 8.1h0m.1 83.6h0m.2-2.9h0m.2 8.7h0m0-94.7h0m.3-4.6h0m.1 84.4h0m0-72.6h0m.1 76.9h0m0-2.2h0m.1-.9h0m.2 5.5h0m.1-93.6h0m0 89.1h0m.1-73.2h0m0-5.1h0m.2 83.6h0m0-1h0m0-77h0m.1 84.4h0m.1-10.2h0m.2-73.8h0m.1-5.7h0m0 99.1h0m.2-97.1h0m0 81.2h0m0-77.4h0m0 94.9h0m.1-105.6h0m0 82.1h0m0-84.2h0m.1 9.8h0m.1 78.1h0m.1-4.8h0m0 .1h0m.1 4h0m0-5.4h0m.1-.4h0m0-68.2h0m0 73.1h0m.1 2.9h0m0-5.7h0m0 4.8h0m0-83.7h0m.1 79.2h0m.1-.1h0m.1-72.7h0m0 .6h0m.1-6.7h0m0 .8h0m.1 3.2h0m0 72.2h0m.1 4.1h0m0-75.2h0m0 77.2h0m.1-.4h0m.1-5.6h0m.1-71.8h0m0 80h0m.1-78.6h0m.1-11.8h0m.1 108.1h0m0-23.4h0m.1 13.7h0m0-84.9h0m.1 67.3h0m0-75.6h0m.2 8.1h0m0-11.2h0m0 83.6h0m.1 9.7h0m0 5h0m.1-99.8h0m.1 85h0m.1 5.5h0m0-90.6h0m0 12.4h0m0 .1h0m.1-2.8h0m.1-3.8h0m.1-4.1h0m0 99.8h0m.1-89.1h0m0 72.9h0m.1-74h0m.2 71h0m.1 5.4h0m0-6h0m.2-79.9h0m0 8.6h0m.1 81.2h0m0-88.9h0m0 77.8h0m.1 3.4h0m0-88.2h0m.1 14.5h0m.1-9.8h0m.1 107.1h0m.1-101.6h0m.3-13.5h0m.1 13h0m.2 85.6h0m.1-4.6h0m0 2.1h0m.1 2.7h0m.1-3.4h0m.2-77.6h0m.2-2.7h0m0 80.9h0m.2-6.6h0m0 11.3h0m.1-83.1h0m0 75.9h0m.1-78.9h0m0 81h0m.1 7.7h0m0-9.4h0m.1 11.4h0m.2-106.9h0m0 17.5h0m0 5h0m.1-4h0m.2 71.9h0m0-83.3h0m.1 89.9h0m0-74h0m.1-1h0m0-3.8h0m0 71.5h0m0 9.5h0m.1 5.7h0m.2-94.6h0m0 11.9h0m.1 71.6h0m0-73.8h0m.1 79.2h0m.1-88.3h0m.1-4.4h0m.1 91.8h0m0-7.5h0m.2-81h0m0 84.9h0m0 2h0m.4 11.9h0m.3-97.1h0m.5 2.8h0m.1 6.5h0m.1 73.1h0m.2-80.5h0m0 91.2h0m.1-93.1h0m.1 9.3h0m.1 88h0m.2-94.9h0m.1 3.5h0m.1-8.4h0m.1 7.5h0m.1 2.4h0m.1 2.9h0m0-5.1h0m0 75.6h0m.1-69.1h0m.1-5h0m.1 4.4h0m.1-8.3h0m0 80.5h0m.1-3.8h0m0-68.8h0m.2 78h0m0-76.9h0m.2 67h0m.1-87.1h0m.1-3.3h0m.2 17.2h0m0 2.1h0m0 93.7h0m.1-94.5h0m0-13.1h0m0 95.6h0m.2-88.3h0m.1 10.6h0m0-15.8h0m.1 86.9h0m0 3.5h0m0 9.3h0m0-17.6h0m0-71.4h0m.4 76.7h0m.5 13.8h0m.1-98.4h0m0 99h0m.1-96.9h0m.4 9h0m.1 68.8h0m.1-68.2h0m.1-5.3h0m0 .7h0m.3 2.8h0m0 69.4h0m.2 6.2h0m0-93.1h0m0 91.4h0m0-75.9h0m0 94.2h0m0-6.4h0m.1-90h0m0 2.9h0m0 76.6h0m.1 1h0m.1-76.6h0m0 74.6h0m0 9.6h0m0-87.6h0m.3 84.4h0m0-95.5h0m0 90.9h0m0-73.6h0m.1-7.5h0m.1 80.5h0m.1 2.9h0m0-76.5h0m.2-6.4h0m0 75.4h0m0 7.1h0m.3-85.7h0m0 94.3h0m.1-1.7h0m0-12.2h0m0-.4h0m.1-2h0m0-80.7h0m.1 87.2h0m0-7.2h0m.1 4.3h0m0-92.5h0m0 20.3h0m.1 77.1h0m0-9.5h0m.2-66.9h0m.1-1.9h0m0 72.5h0m.2 12h0m0-85h0m0 3.1h0m0-14.6h0m.1 13.7h0m.1 .2h0m0 77h0m0-106.7h0m.1 19.6h0m0 82.4h0m0 14.9h0m.2-108.9h0m0 100.4h0m0 10.1h0m.1-91.7h0m0-1.4h0m0-9h0m.1-1.3h0m0 13.4h0m.4-.4h0m0-6.3h0m.2 75.3h0m0-76.5h0m.2 80.2h0m.1-80.1h0m0 78.8h0m.3-75h0m.1-5.8h0m0 83.9h0m.1-84.2h0m.1 10.9h0m.2-.1h0m0-.4h0m0-19.4h0m.1 13.1h0m.3 6.9h0m.1-1.9h0m.4 71.1h0m0 10.2h0m0-82.6h0m.1-12.2h0m.1-8.5h0m.1 20.7h0m.1-11.6h0m.1-5h0m.4 19.9h0m0 73.2h0m.1-90.2h0m0 87.8h0m.2-83.3h0m.1 92h0m0-80h0m.2-2h0m0 2.9h0m.2-21.9h0m0 98.1h0m0-85.8h0m.1 7.6h0m.2 85.7h0m.2-9.9h0m.1 5.5h0m0-10.3h0m.1-69.1h0m.1 88.4h0m.2-20.1h0m.1-90.7h0m.1 16.7h0m.1-6.5h0m0 79.7h0m0 1.7h0m0-74.5h0m.1 78.2h0m0 9h0m.1-87.1h0m0 6.1h0m.1 93.2h0m0-95.9h0m0-25.8h0m0 21.4h0m.1 79.4h0m0-72.3h0m.1-2.2h0m.1 86.7h0m0 10.3h0m0-27.2h0m0-84.4h0m0 87.7h0m.2-4.9h0m0 16.3h0m.1-87.3h0m.1 3h0m0 91.8h0m.1-21.5h0m.1 5.7h0m.2-.7h0m0-88.1h0m.1 0h0m.1 81.8h0m0 .3h0m0 6.9h0m.1 .8h0m.1-85.2h0m.2-5.3h0m.1 87.1h0m0-78.5h0m0 75h0m.1-91.8h0m.1 20.4h0m.4 74.8h0m.2 11.3h0m0-90.9h0m0 0h0m0 87.4h0m.2-87.1h0m.1-1h0m.1 85.7h0m.1-2.9h0m.1-86.6h0m.1 3.6h0m.1 84.7h0m0-99.9h0m.1 101.9h0m.1-6.9h0m.5 8.9h0m0 9.9h0m0-13.4h0m.1-78.3h0m.1 85.9h0m.2-13.7h0m0 20.3h0m0-24h0m0 4.9h0m0-.5h0m.1-81.1h0m.1 100.1h0m.1-8.6h0m0-13.7h0m0 18.5h0m.1-87.1h0m0-9.7h0m.1 2h0m0-2h0m.2 10.3h0m0 83.1h0m0-105.2h0m0 96.1h0m.1-6.5h0m0-74.7h0m.1 86.2h0m.1-2.4h0m0-86.8h0m0 87.9h0m0 .4h0m.2-5.7h0m0-86.6h0m0 82.6h0m.3 5.2h0m0-82h0m0 89.2h0m.1-12.3h0m0-75.5h0m.2 91.3h0m0-3.8h0m.1-81h0m0-3.7h0m.1 71.7h0m.1-69h0m0-.7h0m0 84.4h0m0-87h0m.2 3h0m.2 77.5h0m0 18.3h0m.2-93.4h0m.1-16h0m.1-4h0m0 116.7h0m0-97.8h0m.2 89.7h0m.1-96.8h0m0 4.2h0m.1 80.2h0m.4-100h0m.4 22.9h0m.1 69.1h0m.1-2.2h0m0-66.8h0m0 67.8h0m0-81.6h0m.1 12.9h0m.1 88.9h0m.1-88.9h0m0-10.3h0m.1 3.6h0m0 3.6h0m.1 81.4h0m0 1.3h0m0-81.2h0m0-1.8h0m.1 79h0m0-82.4h0m.1 7.8h0m.1 66.7h0m.1 2.7h0m.1-81.5h0m0-.7h0m0 90.4h0m0-10.6h0m.2 21.7h0m0-89.3h0m.1 67.6h0m.1 1.9h0m0-.3h0m0-69.9h0m.1-6.7h0m.2 7.7h0m0-15.1h0m0-16.6h0m.1 116.4h0m.1-5h0m.1-8.2h0m0-2.3h0m.2 .3h0m0-74.9h0m.1 6.1h0m0-8h0m.2-10.5h0m.1 106.2h0m0 1.8h0m.2-17.4h0m0-93.6h0m0 100.9h0m0-82h0m.2 79.5h0m0-6.4h0m0-90h0m.1 15.9h0m.1 90.6h0m.1-106.1h0m0 11.8h0m.3 80.3h0m.1 9.4h0m.1-94.6h0m0 11.8h0m.2-3.6h0m.1 89.7h0m.2-14.4h0m.2-81.1h0m.1 7.4h0m.1 90.8h0m.1-18.4h0m0 1h0m.1-72.9h0m.1-1.2h0m.1 76.8h0m.1 14.4h0m.1-21.7h0m0 14.6h0m.3-9.5h0m0-71.8h0m.1-12.3h0m0 12h0m.1 73.7h0m0 7h0m.2-87.7h0m0 85.8h0m.1-9.1h0m.1-78.3h0m.1-1h0m.1 7.7h0m0-7.9h0m.1 91.9h0m0-14.4h0m.1 4.9h0m0-73.7h0m0 73.7h0m0-2.2h0m.3-72.9h0m.1 2.9h0m.1 82.4h0m.2-14.1h0m.3-.4h0m.1-69.6h0m0 72h0m.2-2.5h0m.2-95h0m0 105.1h0m.3-86h0m0 96.5h0m0-94.4h0m.1 90.8h0m0-8.5h0m0-82.8h0m0 4h0m.1-6.7h0m0-21h0m.2 98.4h0m0-.4h0m.1 4.9h0m.1 .5h0m0-74.9h0m0 87.9h0m.2-18.9h0m0 8.4h0m0-3.5h0m.3-88.4h0m0 15.9h0m0-2.5h0m.1-2.5h0m.1 4.6h0m.1 68h0m0-79.7h0m0 94.6h0m.4 1.4h0m0 .3h0m0-2h0m.1-11.7h0m.1-101h0m.1 2.8h0m0 19.3h0m.2 8h0m.2 81.3h0m.1 11.5h0m0-99.4h0m0-1.8h0m0 79.3h0m.1-2.7h0m0 8.1h0m0 17.4h0m.1-24.3h0m.1 5h0m0-79.2h0m.1 78.4h0m0 5.9h0m.1-85.9h0m0-1.4h0m.1 81.9h0m.1-4.2h0m0-71.8h0m0 74.1h0m.2-88.5h0m.1 14.7h0m0-16.1h0m0-16.8h0m0 29.2h0m.2 4.1h0m.1 76.1h0m0-87.1h0m.1 8.6h0m0 71.7h0m.1 3.6h0m0-71.8h0m.1 70.4h0m.1 11h0m.2-81.1h0m0 76.5h0m.2-105.9h0m.1 5.8h0m0 24.7h0m0 72.2h0m.1 18.2h0m.1-21.9h0m0-75.3h0m.1 78.7h0m.1-87.6h0m0 9h0m.2 82.9h0m.1-84.5h0m.1 75.5h0m.1-70.8h0m.2 2.6h0m0 69.6h0m0-2.3h0m.1-67.3h0m0-7.5h0m.1-6h0m.1 8.3h0m.1 74.8h0m.1 11.9h0m.2-87.1h0m.1 76h0m.1 12h0m.2-1.6h0m0-81.6h0m0 1.5h0m.1-11h0m0-7.6h0m.1 89.8h0m0-75.4h0m.1-14h0m.2 87.7h0m.2 13h0m0-13.9h0m.1-100.6h0m0 21.2h0m.2 9.9h0m.2 73.1h0m.2-4.6h0m0-73.3h0m.3 72.4h0m.1-83.6h0m0 12.2h0m0 2.1h0m.1 79.7h0m.1-77h0m.1 71.8h0m0-94.6h0m.1 95.4h0m.2-73.6h0m.1 71.5h0m0 7.1h0m.1-80.9h0m.3 73h0m.1-88.2h0m.1 90.9h0m.2-95.8h0m.1 7h0m0-.6h0m.1 95.2h0m.1-7h0m.1-3h0m.1 16.5h0m0-10.7h0m0 6h0m.2-90.3h0m.1-25.4h0m0 34.7h0m.2-16.4h0m.1 92.9h0m0 10h0m0-17.8h0m.1-1.2h0m0 1h0m0-88.9h0m.1 90h0m0 .5h0m0 10.9h0m.1-84.3h0m.1 2.3h0m.2-18.1h0m0 13.3h0m.2 73.7h0m0-68.1h0m.1 76.6h0m0-76.6h0m0-7.3h0m.1 5.1h0m0 76.7h0m0 5.6h0m.2-80.2h0m0-16.1h0m.1 17h0m.1-8.7h0m0 79h0m.1-2.1h0m.1 11.7h0m0 4.3h0m.2-92.9h0m0 84.3h0m.1-2.8h0m0 5.3h0m0-11.2h0m.4 6.3h0m0-73.3h0m.1 84.3h0m0-101h0m0 8.9h0m.1-2.9h0m.1-4.7h0m0-7.3h0m0 113.5h0m.1-16.9h0m.1-.2h0m.1-81.3h0m0 83.5h0m.1-83.9h0m.2 .1h0m0-3.6h0m0 81.2h0m.1 3.1h0m0 7.9h0m0-9h0m.1-71h0m.2-16.6h0m0 16.3h0m.1-30.7h0m0 23.8h0m.1 3.8h0m0 0h0m.1 73.5h0m0-.3h0m.1-72h0m.2 1.2h0m0 86.4h0m0-10.2h0m.1 7.9h0m0-16.1h0m.2 8.9h0m0-78.2h0m0 76.2h0m.1-85h0m0 79h0m.1-68.5h0m.2-24.4h0m0 99.4h0m.3-92.2h0m0 10.7h0m.2 5h0m.2 84.3h0m0-108.7h0m.3 100.1h0m0 .7h0m.1-4.2h0m0 3.5h0m.1-93.7h0m.1 1.1h0m.2 13.2h0m.1 90.2h0m0-14.2h0m.1 17h0m0-99.2h0m.6 9.8h0m.1 0h0m.2-9.4h0m.1 8.9h0m0-13.7h0m0-4.3h0m0 7.4h0m0 .9h0m.1 82.7h0m.1 .9h0m0 13.3h0m.1-2.8h0m.1-8.6h0m0-78.5h0m.1 89.5h0m.1-98.3h0m0 82.7h0m.1-80.3h0m0 86.2h0m.1-7.4h0m.2 .3h0m.2 17.1h0m.1-9.7h0m.2-74.9h0m0-11.5h0m.1 5.8h0m.1 .8h0m0 71.8h0m.2-93.4h0m0 3.9h0m.1 23h0m.2-1.6h0m.3-12.3h0m.1 99.8h0m0-88.4h0m.1 76.5h0m.1-4.1h0m0-2.5h0m0 1.2h0m.1-1.9h0m0 2h0m.2-74.7h0m0 88.3h0m.1-96.7h0m0 86.2h0m.1-81.7h0m.4 75.9h0m0 .1h0m.1 5.4h0m.1-83h0m.4 8.3h0m0-2.6h0m.1 3.1h0m0 70.5h0m.1 .1h0m0 15h0m.1-4.3h0m.1-85.6h0m.1 89.9h0m0-97.8h0m.1 5.8h0m.1 87.7h0m0-83.4h0m0 80.6h0m0-.7h0m.2-77h0m0 77.4h0m.2-9.5h0m.1 1.5h0m0-70.5h0m.1 78.3h0m.1-81.5h0m.1 4.5h0m0-11.7h0m.2-1.2h0m0 94.4h0m.1-83.5h0m.2 3.4h0m0-13.2h0m.1-12.3h0m.1 5h0m.1 9h0m.1 1.4h0m0 8.1h0m.1 68.3h0m.2-81.5h0m.1 90.5h0m.2-6.5h0m0-70h0m0-12.5h0m0 100.1h0m0-18.7h0m0-68.6h0m.1-22.1h0m.1 97.1h0m.1-78.6h0m0-.4h0m.1 3.9h0m.1-7.9h0m.1 3.6h0m.3 3.8h0m.1-14.2h0m0 92.8h0m.1-82.7h0m.1 78.5h0m.1-92.3h0m.1 19.3h0m0-4.2h0m.2 73.5h0m.1-73.6h0m0-.2h0m.1-6.9h0m0 10.8h0m.1 82.5h0m.1-12.8h0m.1-71.7h0m.1-16h0m.3 107.4h0m.1-95.1h0m.1 80.6h0m0-76.3h0m.1 78.2h0m0-5.9h0m.1 8.4h0m0-99.1h0m0 91.7h0m.1 10.2h0m0-13.1h0m.2-67.9h0m.2-9.5h0m0 4.4h0m0-3h0m0 4.2h0m.1 86.3h0m0-97.4h0m.1 93.8h0m.1-9.9h0m.1 9.5h0m0-8.9h0m.1-98.6h0m.1 107.8h0m0-78.9h0m0-5.1h0m.1 1.3h0m.2-1.1h0m.1-2.1h0m.1 5.3h0m.1-19.7h0m.1 100.7h0m.4-98.8h0m0 15.3h0m.1 75.6h0m0 7.6h0m.1-96.3h0m0 89.4h0m.2-78h0m0-7.3h0m.3 13.1h0m.2-3.7h0m.1 1.9h0m.1-9.7h0m.2 78.8h0m.4-1.1h0m.1 23.1h0m.1-16.1h0m.1-78.1h0m0 1h0m.1-8.1h0m0 92.5h0m.2-7.7h0m0-78.6h0m.1-5.1h0m.3 10.6h0m.1-12.8h0m0-6.5h0m.1 87.5h0m0-73.8h0m0 3h0m.1 2.8h0m.1-2.7h0m0 77.4h0m.1-2.6h0m.1-75.8h0m0 1.2h0m.3 89.3h0m.1-18.1h0m.1 .8h0m.1-1.2h0m0-76.1h0m.2 91.3h0m0 .4h0m.2-14.7h0m.1-90.1h0m.1 87.7h0m.1-75.1h0m.1 86.6h0m.2-79.2h0m.7-6.8h0m.1-.5h0m.2 77.5h0m0-72.4h0m.1-8.3h0m0-2.5h0m.1 94.5h0m0-11.4h0m0-71h0m.2 79.3h0m.1-95.6h0m.1 14.2h0m.3 3.3h0m.2 78.8h0m.1-2.7h0m.1-76.1h0m0 86.7h0m.1-107.6h0m.1 13.6h0m0-21h0m.1 121.9h0m0-5h0m0-3.5h0m.1 .7h0m0-87.4h0m0 79h0m.1-.4h0m0 13.1h0m.1-102.3h0m0 9.9h0m.1-1.2h0m0 87.1h0m0-83.7h0m.1 68h0m0 6h0m.1 14.2h0m.1-21.1h0m0 12.3h0m.1 8.4h0m.1-95.8h0m.1 75.7h0m0-81.4h0m.1 14.2h0m.1 88.6h0m.1-17.1h0m0 9.2h0m.1-8.4h0m.1 12.7h0m0-17.6h0m.1-70h0m.1-14.2h0m0 98.5h0m0-101.4h0m0 6.5h0m.1 5h0m0 83.1h0m.1 2.1h0m.1-4.3h0m.2-75.6h0m.1-3.7h0m.2 1.8h0m0 77.4h0m.2-102.5h0m0 10.2h0m.1 18.6h0m0-10.8h0m0-10.7h0m.3 14.8h0m.1 1h0m.1-8.9h0m.1 8.2h0m.3 1.9h0m0 2.5h0m0-3.4h0m.1 76.7h0m0-2.9h0m.1-76.1h0m0 6h0m0 76.9h0m.1 4.9h0m0-9h0m.1-72.9h0m0-3.2h0m.1-8.9h0m.1 83.9h0m.1 .3h0m.1-72.4h0m0 72.1h0m.1-68.9h0m.2 88.7h0m0-89.5h0m.1 1.3h0m0-14.7h0m.6 13.1h0m.2-7.2h0m.1 76.4h0m.3-68.6h0m.1 .1h0m0 79.4h0m.3-78.9h0m.2-4.6h0m.1 72.2h0m.2 .6h0m0 14.7h0m.2-12.7h0m.2-79.8h0m0 7.7h0m.1 89.8h0m.1-15.2h0m0-2.1h0m.2-93.2h0m.1 21.5h0m.1-3.7h0m.1-.1h0m0 74.5h0m.1-73.8h0m0 72.7h0m.1-1.1h0m0-67.6h0m.1 78.5h0m0 2.9h0m0 10.5h0m.2-94.8h0m0 .6h0m.1 69.7h0m.2 5.1h0m0-4h0m0-1.6h0m0 2.1h0m.1 16.5h0m0-6.9h0m0-80.4h0m0 2h0m.2 66.9h0m0-67.2h0m.2 91.9h0m.1-115h0m.1 94.4h0m.1-4.1h0m.1-72.3h0m.2 79.8h0m.1 20.4h0m.3-20.2h0m.3-.8h0m.1 6h0m.4-93.6h0m.1 6.5h0m0 82.8h0m0-5.1h0m.1 3.2h0m0-90.3h0m0 10.7h0m.1 1.3h0m0 5h0m.1 77.6h0m.1-10.3h0m0 2.5h0m.1 .6h0m0-72.1h0m.1 77.8h0m.1 2.4h0m0-89.2h0m.1 88.2h0m.1-4.6h0m0-74.8h0m0-22.1h0m.5 24.2h0m.1-6.2h0m0 3.7h0m.1 69.3h0m.3-83.6h0m.1 101.9h0m0-15h0m.1-77h0m.1-21.7h0m0 110.3h0m0-84.2h0m0-7.2h0m.1 100.2h0m.1-22.8h0m0-79.1h0m.1 87.2h0m0-94.6h0m.1 8.6h0m0 87.8h0m0-102.1h0m.5 94.7h0m0-.7h0m.4-92.7h0m0 22.4h0m.1 72.1h0m.3 1.7h0m0-78.3h0m.1 77.9h0m.1-2h0m0 3.2h0m.1 6h0m0 12.6h0m.1-116.2h0m0 91.2h0m.1-.4h0m0 8.6h0m.2-1.6h0m0 13.1h0m0-20.8h0m.1 2.6h0m0 23.6h0m.1-97.8h0m.1 3.1h0m.2-1.1h0m.1 79.7h0m0-6.8h0m.1 2.7h0m.1-3.2h0m0 11.6h0m.3-9.6h0m0-73.5h0m.2 70.4h0m.1 10.3h0m.4-7h0m.2-85.8h0m.1 .4h0m.2 95.8h0m0-9.2h0m.1 1.3h0m0-82.5h0m0 5.2h0m.1 99.2h0m.1-16h0m0-84.3h0m0 81.2h0m.2-6.9h0m0-70h0m.1-10.2h0m0-9.3h0m.3-2.3h0m.1 91.1h0m.2 4.2h0m0-6h0m.1 9.6h0m.1-7.8h0m0-1.2h0m.1-86.3h0m.2 91.3h0m.5-3.6h0m0 1.8h0m.1-79.9h0m0 1.7h0m0 75.8h0m.1 9.5h0m.1 3.7h0m0 10.1h0m.1-96.5h0m.1-8.7h0m.2 98.9h0m.1-89.1h0m.1-1.6h0m.1 81.3h0m0-87.1h0m.3 11.1h0m.1 95.5h0m.3-25.5h0m.1 5.1h0m.3-85.7h0m0 83.1h0m.1-6.4h0m.1 4.1h0m0 5.7h0m0-86.2h0m0 9h0m.1 74.5h0m.1-108.1h0m0 32.5h0m.1 75.7h0m.1-75.4h0m.1 68.1h0m0 2.5h0m.2-75.8h0m0 80.6h0m.2-83.6h0m.1-6.4h0m.1 14.9h0m0 .8h0m.1 67.3h0m0-68.8h0m.1 75.6h0m.1-74.6h0m0 69.7h0m0 5.4h0m.1-3.8h0m0 23.3h0m0-24.6h0m.2-.3h0m0 2.1h0m.1 9.3h0m0-79.9h0m.1-27.3h0m.2 20.6h0m0 5.1h0m0 .4h0m0-2h0m.1 69.7h0m0-93.9h0m.1 95.5h0m0-.4h0m.1-69.7h0m.2 76.2h0m0-75.5h0m.2 82.8h0m0-95.3h0m.2 104.5h0m0-6.4h0m0-15.4h0m.1-80.1h0m0 93.6h0m.1-84h0m.2 79h0m.1-9h0m0 3.1h0m.1 9h0m.1 6.5h0m.1-99h0m.4 89.2h0m.1 8.9h0m0-91.7h0m.1 1.2h0m.1 71.3h0m0 15.4h0m0-13.7h0m.1 .6h0m.1 23.7h0m.6-104.3h0m.1 84h0m0 0h0m.1-76h0m0-6.5h0m.1-2.2h0m0-2.6h0m.1 13.4h0m.1 73.8h0m.3-5.3h0m0 3.2h0m.1 10.4h0m0-83.5h0m.2 2.8h0m.2 66.7h0m0-83h0m0 5.7h0m.1 7.1h0m0 1.7h0m0-6.6h0m0 78.1h0m.1-84.8h0m.3 94.5h0m.1-11.9h0m.1-68h0m.1-35.1h0m0 14.3h0m.3 10.5h0m.3 92.2h0m0-84.8h0m0-3h0m.2 3.9h0m.1 70.9h0m.1-72.8h0m0 73.3h0m.2-77.1h0m.1 92.4h0m0-5.1h0m.1-90.3h0m.1 85h0m.4-93.7h0m.2 86.3h0m0-66.2h0m0-10.2h0m0-.5h0m.1 1.8h0m.1-22.5h0m.1 97.6h0m.2 6.9h0m.1-77.3h0m.2-2.3h0m.1 88h0m0-8.7h0m0-73.9h0m0-31.2h0m.1 31.3h0m0 71.6h0m.1-86.1h0m0-2.6h0m.1 17h0m.4-3.5h0m.3 2.6h0m.1-12.3h0m.2 91.8h0m.1-101.9h0m0 101h0m.2 7.7h0m.2-16h0m.2-86.7h0m.1 10.3h0m0 85.6h0m0-2.6h0m.1-74.7h0m.1-1.5h0m.1-3.3h0m0 74.1h0m0-90.1h0m.3 6h0m.1 13.7h0m0 71.8h0m.1-92.6h0m0-7.2h0m.1 12h0m0 15.8h0m.1 72.4h0m.1 .2h0m0 19.8h0m.1-101.8h0m0 81.9h0m.1-76.3h0m.2-.3h0m.1 76.1h0m0-4h0m.1-99.7h0m0 102.3h0m0-2.2h0m.1 8h0m0-.7h0m.1-76.5h0m0 84h0m0-15.4h0m.2-72.8h0m0 4h0m0 77.7h0m.1-81.5h0m.1-5.2h0m0 77.5h0m0 6.4h0m.2-6.2h0m.1-77.2h0m.3-5.5h0m.1 94h0m0-8.8h0m.1 9.8h0m0-7.9h0m.3-75.4h0m.1 72.9h0m0-68.8h0m.1 66.9h0m.1 4.8h0m0-72.2h0m0 79.4h0m0-.3h0m.1-3.5h0m.2 8.2h0m0-13.9h0m0-1.7h0m.3 7h0m0 6.8h0m.3-10.5h0m0-3.5h0m.1 3.6h0m.2-86h0m.3 85.2h0m.2-.2h0m.1-2h0m.1-72.1h0m0 78h0m.2-85.5h0m0 7.5h0m.1-27.7h0m.1 101.3h0m.1 .6h0m.1 4.5h0m.2-82.9h0m.1 74.9h0m.1 5.5h0m0-84.1h0m0 5.8h0m0 6.4h0m.1 76.7h0m.1 .4h0m.1-85.5h0m.2 2.8h0m0 1.7h0m.1 72.1h0m0-77h0m0 94.1h0m.1-96.8h0m.1 77.8h0m0-72.3h0m.1-8.3h0m.1-3.2h0m0 85.6h0m.1-69.3h0m.1-8.4h0m.1 5.9h0m.3 4.1h0m.2 66.6h0m.1-77h0m.1 6.2h0m0 75.2h0m.2 .8h0m0 5.2h0m0-82.5h0m.1-1.9h0m.1 2.1h0m0 95.7h0m.2-95.8h0m.1 81.2h0m0-99.8h0m.1 92.3h0m0-73.4h0m.1 .2h0m.2-.1h0m.1 86.9h0m.1-85.1h0m.2 2.7h0m.3-2.8h0m0-14.1h0m.1 89.4h0m.2-75.7h0m0-6.7h0m.1 83h0m0-90.3h0m.1 103.2h0m0-102.8h0m.2 84h0m.1 1.1h0m0-79.7h0m0 3.8h0m.2 1.2h0m.1 3.3h0m0-3.3h0m.1 83.1h0m.1-79.6h0m0 92.6h0m.1 4.8h0m.1-20.4h0m0-74.7h0m.1-24.6h0m0 101.7h0m0-76.8h0m0-24.3h0m.1 20.3h0m0 77.2h0m.1-2.1h0m0 11.9h0m.2-9.6h0m.4-75h0m.1-8.3h0m.1 77.9h0m0 2.8h0m.2-70.4h0m.1-12.1h0m.1-18.5h0m.1 10.2h0m.2 95.9h0m.1-80.9h0m.1-24.4h0m.1 23.3h0m.1-4.5h0m.1 8.5h0m.1-16.7h0m.1 11.7h0m0 83.6h0m.4-5.8h0m.1 .6h0m0-86.5h0m.1 95.5h0m0-81.5h0m.3-16.4h0m0 101.2h0m.1-87.7h0m.2-7.2h0m.1 95.3h0m.1-6.5h0m0-82.3h0m0 76.3h0m0-75h0m.2-1.7h0m.1-2.1h0m0 4.2h0m.1 77.4h0m.2-4.4h0m0 11.8h0m.1-89.2h0m0 7.6h0m.1 71h0m.3-2.4h0m.1 12.8h0m0 7h0m0-97.7h0m.2-2h0m0 12h0m.1-18.3h0m.1 13.1h0m0 76.7h0m0 5h0m.3 12.2h0m.1-14.2h0m0-5.6h0m0-72.3h0m.2-3.7h0m0-20.9h0m.1 100.1h0m0 17.5h0m0-21.2h0m.1 0h0m.2-89.1h0m0 95.2h0m.1-80.7h0m0 74.3h0m0-70.4h0m0 87.3h0m.1-90h0m.1-2.2h0m.1 6.8h0m.2 74.2h0m0 4.5h0m0 4h0m.1-89.6h0m0 86.5h0m0-2.6h0m.1-88.9h0m.1 8.1h0m0-14.2h0m0 98.6h0m0-83.3h0m0 72h0m.2 25.4h0m.1-95.1h0m.1-1.1h0m0 70.8h0m.1 1h0m.1 23.3h0m.1-113.3h0m.1 19.6h0m.1 84.3h0m0-12.8h0m0 3.9h0m.1-95.4h0m.1 86.9h0m0-73.9h0m0 88.2h0m.1-11h0m0-71.5h0m0 68.1h0m.1 2.4h0m.2-78.1h0m0 5h0m.1-14.8h0m0 98.8h0m.1-10.7h0m.1 6.4h0m.1-6h0m.1-73.6h0m0 82.9h0m.1-2.5h0m0 7.5h0m.2-85.7h0m0 73.2h0m.1-79.6h0m0 77.6h0m.1-78.3h0m0 8.5h0m.1-11h0m.2-1.4h0m0 81.3h0m.1-2.1h0m.2-75.7h0m.1 83.1h0m.1-78.8h0m.1 83.5h0m0-84.1h0m.3 5.7h0m.1 85.2h0m0-102.7h0m.1 15.5h0m.1-17h0m.1 18.4h0m.1-1.8h0m0 69.4h0m.1-71.7h0m.1-5.8h0m.1 89.1h0m0-9.5h0m.1 12.9h0m.1-7.3h0m.1-76.5h0m.2 90.8h0m0-21.2h0m.1-70.2h0m0 70.1h0m.4-78.7h0m.1 106.2h0m.4-18h0m.1 3.8h0m0-9.2h0m.2-74.7h0m0-21.3h0m.1 92.8h0m.3-77.7h0m0-14.4h0m.1 19h0m.2 .4h0m.2-26.2h0m0 28.5h0m0 1.6h0m0-6.1h0m.1 95.7h0m0-13.9h0m0-82.1h0m.1 5.2h0m0-5h0m.1 79.5h0m0-73.4h0m.1 69.4h0m.1-77.8h0m.1 3h0m0-9.2h0m.1 89.5h0m.1-77.7h0m0-8.9h0m.1 1.1h0m0 10.8h0m.2 72.6h0m.1-85h0m0-7.9h0m.1 17.7h0m0 74.7h0m.1-2h0m0 2.1h0m.1-75.1h0m.1 69.5h0m0-78.5h0m.1 79.2h0m0-.5h0m.1-99.9h0m0 101.9h0m.1-70.5h0m0 1.1h0m.1-26.9h0m.1 24.7h0m.2-3.1h0m.2-.3h0m0 77.3h0m.1-76.9h0m0 3.1h0m0 2.9h0m.1-29.9h0m.4 105.6h0m0-84.7h0m0 .7h0m.2 77.5h0m.1 5.7h0m.1-76.1h0m.1 68.8h0m.2-73.9h0m0-2.3h0m.1-5.7h0m0 81.9h0m0 8.2h0m.1-4.4h0m.3-80.2h0m.2 75.5h0m0 5.9h0m.2 22.2h0m0-110.1h0m.1-2.5h0m.2 91.7h0m.2-82.4h0m.2 7.3h0m0 1.4h0m.1-1.2h0m0-1.4h0m.4-7.8h0m.1 2.1h0m0-3.6h0m.1 4.1h0m0-.9h0m0-22h0m.1 30.2h0m0-21.7h0m.1 89.3h0m.2-71.1h0m0-22.9h0m0 96.2h0m.2 9.2h0m.1-78.8h0m0 79.4h0m.2-7.1h0m.1-75.1h0m.3 82.3h0m.3-7.6h0m0-82.8h0m.1 1.1h0m.1 80.8h0m.1-73.5h0m.1 88.9h0m.2-108.8h0m.1 12.2h0m.2 80h0m.1-74.4h0m.1 77h0m0-78h0m.5 73.4h0m0 5.7h0m.4 3.3h0m0-77.7h0m.1-8.8h0m.1 77.6h0m0-72.4h0m.1 83.8h0m0 .3h0m.4-83h0m.1 87.6h0m0-87.3h0m.1-3.7h0m.2 4.8h0m.1-9.1h0m0 8.6h0m0-9.5h0m0 6.3h0m.1 73.6h0m.1-68.5h0m0 67.9h0m.3 6.5h0m.2-79.1h0m0 90.3h0m.1-95.7h0m0 92.5h0m.1-103.8h0m0 11.6h0m0 .3h0m.4 78.2h0m.2 .5h0m.1-75.4h0m.1 80h0m0-85.7h0m0-.8h0m.1 8.9h0m0 84.3h0m0-83.4h0m.1 70.6h0m.1 7.1h0m0 8.2h0m.2-13.8h0m0 .1h0m.1 2.8h0m0 5.1h0m.2-79.9h0m0-7.4h0m0 10.1h0m.2-28.6h0m.1 106.8h0m0-99.4h0m.1 107.8h0m.2-88.1h0m.1 76.1h0m.2-2.8h0m.1 6.5h0m0-105.4h0m0 94.2h0m.1 .8h0m.1 21.1h0m0-91.2h0m.4-9.4h0m0 8.5h0m.2-1.6h0m0 1.1h0m0-2.6h0m.3 73.6h0m0-73h0m.2-2.7h0m.3-4.2h0m.5 10.6h0m.1-.4h0m.1 72.3h0m.1-70h0m0-16.2h0m.1 91.4h0m.2-93.3h0m.1 14.1h0m.1 79.9h0m0-84.6h0m0 83.8h0m.5-79.4h0m0 99.2h0m.2-21.7h0m.1-79.8h0m.1 82h0m.1-82h0m.1 84.3h0m0 2.2h0m.1-82.2h0m.1 71h0m.1 2.1h0m0-73.4h0m0-21.3h0m.1 16.6h0m.2 79.1h0m0 2.2h0m0 1.6h0m.1-7.7h0m0 2.6h0m.1-70.4h0m0 68.6h0m0-70.5h0m.2 1.7h0m0-33.9h0m0 115.5h0m0-93.9h0m0 12.2h0m.1-14.9h0m0 15.1h0m0 91.7h0m.3-18.2h0m.2-76.9h0m.2-5h0m.1 0h0m0 7h0m.1 75.9h0m.1-86.9h0m.1 11.1h0m.4 1.2h0m.2 68.7h0m.1-82.2h0m.2-3h0m0 90.4h0m.3-74h0m.1-5.5h0m.1-7.9h0m.1 10.9h0m0 78.6h0m0 5.3h0m.1-81.8h0m0-2.2h0m0 91h0m.3-88.3h0m.1 78.2h0m.1-94.8h0m.1 89.4h0m.1-2.5h0m0 15.4h0m.1-12.4h0m0-.9h0m.3-75.2h0m.1 81.3h0m.1 3.8h0m.1-9h0m.1-72.5h0m0-2.4h0m.1-12.3h0m0 81.2h0m.1-71.8h0m0 81.7h0m.1-9.1h0m0-78.3h0m.1 7.1h0m.2 73.8h0m0 9.8h0m.8-91.9h0m0 11.8h0m.2 70.1h0m0-85.2h0m0 7.6h0m.1 87.8h0m0-95.7h0m.2 86.1h0m0-82.1h0m0 79.9h0m.3-84.4h0m0 85.7h0m0 1.3h0m.1-71.4h0m.1 69.3h0m.1-69.2h0m0-1h0m0-14.5h0m.1 15.8h0m0-.6h0m0-6.8h0m.1 78.5h0m0-102.9h0m.1 101.9h0m.1-70h0m0 68.1h0m0-74.2h0m.1 81h0m.1-75.1h0m.1 74.8h0m0-2.2h0m0-5.2h0m.2-84.9h0m0 101.2h0m.1-89.5h0m0 5.9h0m.1 73.5h0m.2-.8h0m.1-83.5h0m.1 6.8h0m0-5.3h0m.1 80.1h0m0-3.3h0m0-70h0m.1-9.6h0m0 1h0m0-12.3h0m.2 93.8h0m0-2.7h0m.2-81.1h0m0 82.6h0m.1-82.6h0m0 1.9h0m.3-.8h0m.1 84.3h0m0 .3h0m0-95.8h0m.2 24.1h0m0-3.5h0m0-10.9h0m0 107.6h0m0-96.4h0m.1 83.4h0m0 2.6h0m.1-113.4h0m0 103.6h0m.1-78.5h0m.1-2.9h0m.2 5.2h0m0-.9h0m.1 87.7h0m.1-90.2h0m.1 4.7h0m0 77.8h0m0 11.1h0m.1-118.5h0m.1 102.4h0m0-80.5h0m0-4.6h0m.1-8.8h0m0 22.2h0m.1 75.4h0m.1-1.4h0m0-93.8h0m.1 100.7h0m.4-86.8h0m0 1h0m.1 3h0m.1-11.6h0m0 8.7h0m.2 3.9h0m.1-6.1h0m.2 3.4h0m0-9.8h0m.1 95.9h0m0-11.2h0m.1-85.5h0m.1 3.8h0m0 11.5h0m.1 67.9h0m0 15.6h0m0-102.7h0m.1 15.9h0m0-.2h0m.1 84.7h0m0-5.4h0m0-107.6h0m.1 106h0m.1-3.8h0m0-79.5h0m.1 86.9h0m0-2.2h0m.2 15.7h0m.1-16.6h0m.2-78.9h0m.4-5.1h0m.1 3.6h0m0-4.9h0m0 102.4h0m.1-95.1h0m.1 71.6h0m.1-82.1h0m.1 80.7h0m0-76.7h0m.1 88.1h0m0-1.4h0m.1-77.8h0m.1-6.9h0m0 2.5h0m.2 81.2h0m.2-87.5h0m.3 87.2h0m.1-91.7h0m0 13.1h0m.1 79h0m.1-7.3h0m.1 21.5h0m.1-23.5h0m.1-69.3h0m.1-3h0m.1 3.3h0m.1-2.8h0m.1-15.6h0m.1 10h0m0 79.9h0m.1-76.3h0m0 77h0m.3 22.5h0m.2-104.4h0m0-1.2h0m.2 86.6h0m.1-5.8h0m.1-69.5h0m.2-.2h0m.1-.8h0m0-1.1h0m.1-4.7h0m0 77.2h0m0 5.6h0m.1 2.9h0m0 .5h0m.1 15.4h0m.1-108.8h0m0 8.9h0m0 90.7h0m.2-17.7h0m.1 9.3h0m0 2.4h0m.1-10.1h0m.1-71.1h0m0 80.8h0m.2-80.7h0m0 77.6h0m.1-87.6h0m.1 82.3h0m0-93.8h0m0 118.1h0m.2-104.6h0m0 80.5h0m.1 2h0m0-87.7h0m0 87.4h0m.3 6h0m.2-4.2h0m.1-79.2h0m.1-8.9h0m.1-9h0m.2 18.2h0m0 78.9h0m.1 3.8h0m0-87.6h0m.1 92.2h0m0-87.4h0m.1 80.1h0m0-7.6h0m.2-73.6h0m0 90.9h0m.1-84.4h0m.1-2.8h0m0 73.1h0m.1 20h0m0-11.7h0m0-106.1h0m.2 109.1h0m.1-87.4h0m0 79.8h0m.4-75.2h0m0 88.1h0m.1-18.9h0m.1 8.3h0m.1-89.1h0m.1 2.1h0m0-9.5h0m.1 97h0m0-86.3h0m.1 88.5h0m0-79.7h0m.1-9.9h0m0-5.2h0m.1 85.5h0m.1-1.9h0m.1-70.1h0m.2-1.4h0m.2 77.5h0m0-2.4h0m.3 22.4h0m.3-98.6h0m0 4.8h0m0 72.2h0m0 10.8h0m.1-107.9h0m.1 25.9h0m.1-4.9h0m.1 72.4h0m0 1.5h0m.1-72.5h0m.1 74.4h0m.1-76.2h0m0 5.3h0m0 78h0m.1-90.1h0m0 89.3h0m.1-96.3h0m.2 0h0m0 85.6h0m.2 .7h0m.1 16.2h0m0-94.4h0m.1 83.9h0m0 4.1h0m0-93.3h0m.3 89.4h0m.2 4.3h0m.1-101.3h0m0 16.4h0m.1-10.2h0m.1 103.3h0m0-18.9h0m.1 22.2h0m.1-11.6h0m0-7.9h0m0 7.4h0m.1-82.8h0m.1 88.2h0m0 4.9h0m.1-18.2h0m.1-86.4h0m0-.5h0m.1 13.9h0m0 77.4h0m0-2.4h0m0-92.4h0m.1 16.3h0m.1 2.4h0m.2 .4h0m.1 85.6h0m0-83.6h0m0 75h0m.2-75.1h0m.2-4.2h0m0-10.8h0m.1 5.5h0m.1 .9h0m0 84.8h0m.1-8.9h0m0-67.7h0m.1 84.1h0m.1-11.9h0m.1-74.4h0m0 96.2h0m0-101.8h0m.1 86.2h0m.2-98h0m0 16.4h0m.2 74.2h0m.1-73.8h0m0 2.6h0m0 84.1h0m0-7.7h0m.3-81h0m0-14.3h0m.1 7h0m0 1.8h0m0-23.6h0m.1 32.3h0m0 .8h0m.1 73.2h0m.1 13.4h0m.1-86.5h0m.1 84.4h0m0-11.9h0m.1-4.4h0m.1-66.9h0m.1 83.5h0m.1-4.1h0m0-89h0m.3 95.5h0m.1-1.6h0m0-103.3h0m.1 19.1h0m.2-4.2h0m0 4.1h0m0-9.3h0m0 99.9h0m0-8.1h0m.2-86.4h0m0 82.4h0m0-81.6h0m.1 71.6h0m.2-71.5h0m.1-5.6h0m.1 90.9h0m.1 12.2h0m0-96.3h0m0 71.6h0m.1 7.2h0m0-10h0m0 1.6h0m.2-1.9h0m.2-69.6h0m0-7.3h0m.1-3.5h0m.1 85.1h0m0-77.1h0m0-24.9h0m.1 15.8h0m.2-13.2h0m.2 25.7h0m.2-.3h0m.1-11.2h0m0 90.1h0m0-98.3h0m.2 19.9h0m0 69.9h0m.1-70.8h0m0-6h0m.2-7.1h0m.1 83h0m.2-79.5h0m0-4.9h0m0 1.1h0m0 105.7h0m.1-16.8h0m.1-75.9h0m.1-2.8h0m0 82.3h0m.1-2.4h0m.1 9.6h0m0 1.1h0m.1-17h0m.5 7.9h0m0-84.7h0m0 8.1h0m0 84.4h0m.4-96h0m.1 5.6h0m0 4h0m.2 84.1h0m.1-85.5h0m.1 82.3h0m.1-90.2h0m.1 7h0m0-9.2h0m0 3.2h0m.1-6.7h0m0 16.8h0m0-11h0m0 99.3h0m.3-12.5h0m.2-4h0m0-2.8h0m.1-67.9h0m0-6.4h0m0 80.7h0m0-6.6h0m.1-72.7h0m.1 72.9h0m0 17.8h0m.3-84.8h0m0 83.7h0m0-13.3h0m.1-72.5h0m.1 .2h0m0-6.1h0m.2 2.1h0m0-3.3h0m0 75.4h0m.1-72.9h0m0 81.7h0m.1-85.4h0m0 88.1h0m.1-83.2h0m.1 76.2h0m.2 2.6h0m.2 .4h0m0 10.6h0m.1-9h0m0-82.6h0m0 6.5h0m0 76.9h0m0 17.5h0m.2-26.8h0m0-88.4h0m0 18.2h0m.1-2.7h0m.1 87.8h0m0-82.9h0m.1 82h0m0-96.3h0m.1 15.7h0m.1 67.2h0m0 4.2h0m.1-75.9h0m0-7.7h0m0-3.8h0m.2 1.3h0m.1-.1h0m0 87.6h0m.1 4.2h0m.2-83.1h0m.1 2.6h0m0 81.5h0m0-88.5h0m.1 91.1h0m.1-81.3h0m.1 71.8h0m0-85.3h0m.1 81.8h0m0 3.2h0m.1-76.3h0m.1 79.5h0m0-7.9h0m0-71.9h0m0 86.2h0m.1-91.1h0m.1 4.5h0m0 2.8h0m.1-13.3h0m0-8.2h0m.1 100.6h0m.3-7.6h0m.1-69.2h0m.3 68.2h0m.1-68.7h0m0-11.1h0m.2-10.8h0m0 19.7h0m.2 1.2h0m.1 84.9h0m.1-82.5h0m.2 68.6h0m0-73.8h0m0 1.9h0m.3 77.3h0m.1-5.4h0m0-72.3h0m0 74.9h0m.2 4.8h0m.1-83.8h0m.2 96.5h0m.1-21.4h0m0 3.4h0m.1-93.9h0m0 15.3h0m.1 3.4h0m.1 81.6h0m0-8.7h0m.3-74.6h0m.1 77h0m0 2.3h0m0-80.5h0m.1 97.8h0m.1-18.4h0m.1-2.6h0m0 4.1h0m.1 4.8h0m0-7.3h0m0 .2h0m.2-71.3h0m.1 70.7h0m.1-74.4h0m.7 77.6h0m.1-78h0m0 84.3h0m.1-80.2h0m0 68.6h0m.1-.3h0m0-68.4h0m0 77.6h0m.1-98h0m0 87.9h0m.1-67.2h0m.1-25.4h0m0 16.5h0m.1 88.3h0m.2 3.4h0m.1-9h0m.1 9.8h0m.1-88.3h0m.1 71.3h0m.2-69.2h0m0 92.3h0m.1-106.8h0m0 102h0m.2-103.1h0m.2 89.4h0m0-1h0m0-.3h0m.1-1.5h0m.1 24.8h0m.1-16.3h0m0-7.1h0m.1-73h0m0 77.5h0m.1 7.1h0m0-86.6h0m.2-.1h0m0 72.5h0m.1-80.6h0m.1 2.7h0m0-.6h0m.1 8.8h0m.1-4.9h0m.1-20.4h0m0 11.5h0m.1 86.1h0m0-3.6h0m.1-70.9h0m.2 89.9h0m.1 1.1h0m0-8.8h0m.1-84.5h0m.2-3.2h0m.2 79.1h0m.1 10.4h0m0-8.2h0m.1 6.3h0m.1 4.3h0m0-87.2h0m.1 81h0m0-75.3h0m.2-1.6h0m0 81.7h0m0 2.5h0m0-101h0m.1 86.9h0m.2 21.4h0m.1-94.6h0m0 74.3h0m.1-76.4h0m0 75.5h0m0 4.7h0m.1-77.2h0m.1-2.3h0m.1 6.1h0m.1 71.4h0m0-75h0m.2 89.7h0m.1-99.4h0m.1 90.7h0m.4-8.4h0m0 4.1h0m.1-74.1h0m0 72.4h0m0 2.7h0m0 19.3h0m.1-101.4h0m.1 101h0m0-109.7h0m.3 93h0m0-95.5h0m.1-1h0m0 94.1h0m.1-4.6h0m.3-2.3h0m0 11.8h0m.1 14.3h0m.2-23.5h0m0-69.8h0m0 68.1h0m.1-1.9h0m.2 8.6h0m0-4.5h0m0-80.1h0m.1 78.8h0m.1-70.3h0m0-5.7h0m.1 93h0m.1-91.7h0m0 3.5h0m.1-4.7h0m.1 74.6h0m.1-100.1h0m.2 21.3h0m0 78.7h0m.1-69.7h0m.1-5.6h0m.1 78h0m.2 16.5h0m.1-17.7h0m.1 10.6h0m.1-79.7h0m.1-.7h0m.2-1.3h0m.1 77.6h0m0-78.5h0m0 82.3h0m0-80.5h0m.1-16.2h0m.1 10.6h0m0 76.1h0m.1-85.3h0m.3 94.3h0m0-95.6h0m0 10.4h0m0 87.3h0m.2-83.3h0m.1 96h0m.1-14.9h0m0-8.5h0m0-72.7h0m.1 5.5h0m.1 83.1h0m.2 10h0m.1-16h0m0-8.3h0m0 1.6h0m0-71.9h0m0 83.1h0m.1-11h0m0-4.6h0m0-66.8h0m.1-7.6h0m.1 88.9h0m.2-10.5h0m0-79.1h0m0 2.5h0m.1 73h0m.1-74.8h0m.1 7.2h0m.1-11.3h0m0 95.7h0m0-4.7h0m0-9.6h0m.1 17.1h0m.2-16.3h0m.3 12.2h0m0-14.3h0m0 1.1h0m.1-73.3h0m.1 80.5h0m.1 .1h0m0-2.6h0m0-76.2h0m.1 80.6h0m0-90.6h0m.2 4.7h0m0 5.5h0m0 71.5h0m.1-73.7h0m.1-8.4h0m.1 110.6h0m.1-22.7h0m.1-83.9h0m0 88.7h0m0-11.7h0m0-70.6h0m.1-7.3h0m0 88.4h0m.1-11.9h0m.2 18.9h0m0-91.3h0m0 1h0m.2 79.1h0m.1-77.5h0m.1-5.3h0m.1 5.2h0m0 72.7h0m0-1.8h0m.1-73.1h0m0 72.6h0m.1-69.4h0m.2 79.4h0m0-89.1h0m.2 11.7h0m0 70.1h0m.2 8.8h0m0-82h0m0 80.6h0m.5-4.9h0m.1-2.2h0m.1 4.8h0m0-2.9h0m.2-2.6h0m0 6.3h0m0-3.1h0m0-.9h0m.1 19.7h0m0-98.5h0m0 76.8h0m.2-81.5h0m0 9.5h0m.2 75.9h0m.1-84.5h0m0 9.7h0m.1-2h0m.1 .7h0m0 71.3h0m.1 20.7h0m.2-109.7h0m0 89.6h0m.1-1.5h0m0-79.1h0m.1-6.7h0m.1 100h0m0-82.7h0m0-8.9h0m.2 88.1h0m.1-10.7h0m0 .3h0m.2 7h0m.1-97.1h0m.1 98.5h0m.1-85h0m.2 4.1h0m.1-12.6h0m.1 101.8h0m.1-10.9h0m0 10.4h0m0-17.6h0m.1 14.4h0m.1-83.9h0m.2-10.6h0m.1 84.1h0m0 6.2h0m.1-80.2h0m.1 76.6h0m0 4.5h0m0-2.3h0m.2-4.9h0m0-74.9h0m.3 3.2h0m0-22.7h0m.1 104.9h0m0-7.1h0m0-1.5h0m0-72.5h0m0-7.9h0m.1 5.5h0m.1 70.8h0m.2-75.5h0m.1 101h0m.1-115.1h0m.1 20.3h0m0 77.7h0m0-3.3h0m.1-75.7h0m0 78.5h0m0-86.4h0m.2 78.1h0m.1 9.6h0m.1-6.2h0m.1 3.4h0m0-87.7h0m.1-9.2h0m0 14h0m0 5.4h0m0-3.6h0m.1 90.9h0m.1-88.9h0m.1-5h0m.1-15.7h0m.1 18.8h0m.1 75.8h0m0-74.9h0m.1 77.7h0m0-91.8h0m0 89h0m.1 9.8h0m.1-9.8h0m.1-77.3h0m0 80.4h0m.1-73h0m.1 72.8h0m0-5.6h0m0 2.8h0m.1 9.1h0m0-88.5h0m0 90.7h0m.1-84.4h0m0-20.2h0m.1 92.2h0m0-68.6h0m0-21.6h0m.1 5.5h0m.3 11.3h0m.1 77.6h0m.2 7.9h0m0-89.5h0m.2-3.7h0m0 90.2h0m.1-77.7h0m0 80.9h0m0-10.7h0m.1-70.5h0m.1 66.9h0m.1 2.4h0m0 5.4h0m0-82.3h0m0-.7h0m.1 76h0m.3 14.8h0m0-95.8h0m0 92.9h0m.2-9.9h0m.1-93.7h0m0-3h0m0 24.1h0m.1 69.6h0m.1 30.7h0m0-29h0m.1-77.9h0m.1 8.9h0m.3-.1h0m0 71.7h0m.2-70.9h0m.1 .1h0m.2 67.4h0m0 28.4h0m.2-119.1h0m.2 89.8h0m0-72.8h0m.1-7.7h0m0 84.5h0m.2-89.1h0m.2 17h0m.1 68.6h0m.1 15.1h0m.1-15.2h0m0 4.7h0m.1 .6h0m.1-90.6h0m.1 14.6h0m0 2.6h0m0-1.8h0m.2 76.6h0m.1-6.8h0m.1-72.7h0m.1 79.4h0m0-5.6h0m.1 11.9h0m0-83h0m.1 80.3h0m0-105.8h0m.1 24.3h0m.2-8.8h0m0 11.5h0m.1-13.9h0m.1 1.2h0m.1 84h0m.1-70.3h0m.4-13.2h0m0-6.1h0m0 88.8h0m.2-80h0m0 92.9h0m.1-8.7h0m0-78h0m.1 4.4h0m.1-.7h0m.1 75.2h0m.2-3.5h0m.3-75.8h0m0 3.9h0m0 68.2h0m0-74.7h0m.1-12.5h0m0 12.9h0m0 4h0m0 75.9h0m0 6.7h0m.1 1.7h0m0-4.4h0m0-4.1h0m.1 9h0m.2-84.7h0m0-4.3h0m.1 6.7h0m.2-1h0m.1-24h0m.1 19.2h0m0 5.9h0m.2 85.2h0m0-7.7h0m.1 3.5h0m0-89.9h0m0 9.8h0m.2-12.5h0m0 91.1h0m.2-98.8h0m.1 14.9h0m.1 79.8h0m.1-2.8h0m0-83h0m0-4.6h0m.1 12.2h0m0 86.8h0m.1 5h0m0-97.6h0m.1 7.4h0m.1-17.2h0m0 88.8h0m.1 3.8h0m0-6.8h0m.1-69.4h0m0 70.3h0m0-78.4h0m.2 1.9h0m0-3.6h0m.1 92.9h0m.2-6.2h0m0-95.6h0m.1 0h0m0 1.7h0m.1 97.5h0m0 .8h0m0 11.8h0m.1-16.6h0m.3-84h0m0 88.1h0m.3 3.4h0m0-81.7h0m.1-2.4h0m.2 99.3h0m.3-16.3h0m0-13.2h0m.1-68.5h0m0 76.3h0m.1-5.8h0m.1 8.5h0m0-3.8h0m0-3.7h0m.3 2.3h0m0-5.6h0m.1-81.1h0m0 91.5h0m.1-7.7h0m.1-95.5h0m0 100.8h0m.1-1.4h0m.1-76.6h0m0 70.9h0m.1-67.3h0m.3-2.7h0m0 1.1h0m.2-5.1h0m0 77.2h0m.1-2.3h0m.2 29.6h0m0-100h0m.1 73.3h0m.1 17h0m.1-93h0m0 71.5h0m.1-73.6h0m.3-2.7h0m.2-2.1h0m.1 80.1h0m0-72.8h0m0 94.7h0m.2-19.8h0m.1 4.8h0m0-93.4h0m.2-8.4h0m.2 11.3h0m.2 81.7h0m0-93.9h0m.1 111.8h0m.2-17.3h0m.1-67.6h0m0 69h0m.2-82.2h0m0 80.3h0m.1-67.4h0m.1 .5h0m0 82.5h0m0-15.5h0m.1 15.3h0m.3-84.7h0m0-9.7h0m.1 82.4h0m0-3.5h0m.1 11.6h0m0-79.4h0m.1-15.8h0m.4 86.5h0m.3-1.7h0m0-67.7h0m0 89.1h0m0-17.8h0m.1 .5h0m.1-76h0m0 3.6h0m0 72.4h0m.3-77.2h0m.1 90.5h0m.2-18.5h0m.1 5.1h0m.1-77.7h0m0 80.1h0m.1-84.4h0m.1-13.2h0m0 94.3h0m0 1.4h0m.1-88.3h0m.1 12.7h0m.1 72.6h0m0-87.1h0m.1 100.4h0m.1-88.2h0m.1-15h0m.1 18.5h0m.2-14.6h0m0 87.9h0m.1 21.6h0m.1-101.1h0m0 96.9h0m.1-92.7h0m.1 88.2h0m0-109.5h0m0 17h0m.1-6.1h0m0 89h0m.1 16.2h0m0-98.4h0m.2 82.2h0m.1 4.8h0m0-80.4h0m.2 .7h0m.1-6.4h0m0 5.4h0m.2-15.9h0m.1 9.9h0m.2 77.9h0m0-2.6h0m.3-69.8h0m.2-8.6h0m0 98.7h0m.2-105.6h0m.1 109.6h0m0-23.8h0m.1 2.9h0m0-1.7h0m0 2.6h0m0-100.1h0m.1 13.4h0m.3 .2h0m.2 13.1h0m0-3.1h0m0-11.9h0m0 13.6h0m.1 1.3h0m.1 71.5h0m.1-91h0m.1 13.8h0m0 79.3h0m.4 16.7h0m0-15.1h0m.2 11h0m0-10.7h0m.1 1.1h0m.1-79.5h0m0-18.2h0m.1 12.9h0m0 1.8h0m.1 3.9h0m0 2.9h0m.1 78.2h0m.2-76.8h0m.2-.4h0m0-3.6h0m.1-8.2h0m.1 79.7h0m0 1.5h0m.1 .5h0m.1 3h0m.1-87.2h0m0 6.1h0m0 1.4h0m0-.3h0m.2 89.1h0m.1-84.5h0m0 77h0m.1 .5h0m0 7h0m.1-13.6h0m.1-84.5h0m0 90.7h0m0-85.6h0m.3 1.6h0m.1-7.8h0m.1 15.9h0m.2 74.7h0m0-6.8h0m.2 3.7h0m.2 6.6h0m0 9.3h0m0-96.7h0m.1 79.6h0m.2-81.1h0m.1 80.3h0m.2-78.5h0m.1 79.5h0m.3-71.9h0m.1 1.8h0m0 68.3h0m.3 5.7h0m0-6.3h0m0-66.7h0m.4 70.2h0m.1 9.7h0m0-11.4h0m0 7.5h0m.1-5.9h0m.4-83.3h0m.1 84.8h0m0 16.7h0m.1-89.9h0m0 .6h0m0 86.1h0m0-12.6h0m.1-74.7h0m0 69.8h0m.2 3h0m0 1.8h0m.1-76.8h0m.1-4.5h0m.2 5.2h0m0 74.6h0m0-78h0m0 80h0m.2-91.2h0m.1-1.8h0m.1-6.7h0m.1 115.8h0m0-9.7h0m.1-106.6h0m0 103.2h0m0-83.4h0m.1-7.3h0m.1 2.3h0m0-1.4h0m0-6.5h0m.2 95.8h0m.2-5.2h0m0 2.5h0m.4-5.3h0m.2-73.9h0m0 101.7h0m0-25.2h0m.1-70.1h0m0-8.6h0m0 6.7h0m.1 80.3h0m.1-97h0m0 97.7h0m.1-79.3h0m.1 69.8h0m0 3.9h0m0-84.6h0m0 .8h0m0 7.5h0m.1-6.7h0m0 78h0m0-76.9h0m0 75.5h0m.1 28.2h0m0-24.3h0m.1 12.5h0m0-16.4h0m0 .3h0m.1-73.9h0m0 79.7h0m.3-.1h0m.3 14.4h0m.1-12.8h0m0-76.5h0m.2-18.7h0m.1-.8h0m.1 105.6h0m0-16.8h0m.2-75.7h0m0 94.3h0m.3-92.2h0m0 86.1h0m0-82.1h0m0 95.5h0m.3-104.4h0m.5 79.9h0m0-70.4h0m0-2.6h0m.1-1.5h0m0 2.3h0m.2-7.4h0m.1 79.2h0m0 8.8h0m.1-95.6h0m0 106.8h0m.1 3.6h0m0-104.9h0m.1-11.6h0m.2 108.3h0m.1-98h0m.1 7.9h0m0 85.2h0m0-89.1h0m.1 9.2h0m0 77h0m0-78h0m0 72.3h0m.1-94.8h0m.1 91.1h0m.1-86.9h0m0 18.4h0m.1 72.6h0m0-73.2h0m0 86.2h0m0 2.6h0m.1-96.7h0m0 82h0m.2-2.8h0m.1-78.1h0m0 2.8h0m.1 .2h0m.1 81.8h0m0-9.1h0m.1-70.6h0m.2 75.3h0m0-88.6h0m.1 87.7h0m0-74.4h0m.2 71.7h0m.2-1.4h0m.1 7.3h0m.1-81.7h0m.1 92.9h0m0-6.9h0m.1-10.7h0m.1-90.9h0m.1 21.3h0m.2 77.6h0m0-74.9h0m.3-6h0m.1 77.2h0m0 4.8h0m0-6.5h0m.1-72.9h0m.1-4h0m.1-7h0m.1 13.2h0m0 72.9h0m.3-89.9h0m.1 86.7h0m.1-83h0m0 85.2h0m0-2.1h0m.1-82.4h0m0 80.4h0m0-84.8h0m.1 7.9h0m.4-5.1h0m0 83.5h0m.1 4.4h0m0-75.1h0m.1-12.4h0m.2 90.4h0m.1-84.6h0m0-1.4h0m.3 9.8h0m0-14.1h0m.3 1.6h0m0 95.4h0m.6-95.1h0m.2 87.3h0m.1-77.8h0m0 81.2h0m0-89.9h0m.1 79.1h0m0-68.7h0m.1 71.2h0m0 1h0m0-70.6h0m.1 66.6h0m0 2.9h0m.1-82.7h0m.1 3.1h0m0-16h0m0 120.8h0m.1-98.6h0m0 87.2h0m.6-17.1h0m0 17h0m.1-82.9h0m.1-20h0m.1 19.3h0m0-11.6h0m.1 85.2h0m.1-85.5h0m.2 105.4h0m0-20.7h0m.2-.9h0m.1 0h0m0-4.6h0m.1-77.8h0m0-13.8h0m.5 110.2h0m.5-89.7h0m0 80.5h0m0-2.2h0m0-79.1h0m.1-2.5h0m.1 6.9h0m0 70.7h0m.2 .5h0m.1-86.5h0m.1 88.3h0m.1-76.3h0m.3 74.5h0m.1-87.2h0m.1 101.4h0m.1-6.1h0m0-86.3h0m.1 74.8h0m0-77.3h0m.2 76.6h0m0-84.3h0m.1 5.8h0m0 7.7h0m0-10.4h0m.1-6h0m.1 13.8h0m.1 85.7h0m.1 1.3h0m0 7.5h0m.1-92.4h0m.2-13.4h0m0 6.8h0m0 10.8h0m.1-19.5h0m0 93.7h0m0 15.4h0m.1-22.5h0m0 13.8h0m0-80.7h0m0-1.6h0m.1-10.7h0m0 6.8h0m.1-1.5h0m.6 6.2h0m.1-11.6h0m.1 79.5h0m.4 1.6h0m0-79.2h0m.1 4.7h0m.2 1.3h0m0-20.3h0m0 100h0m.2-76h0m.1 71.8h0m.2-2.4h0m0 10.2h0m.1-11.4h0m0 15.7h0m.1-87.5h0m.3-11.6h0m0 8.2h0m.3 79.6h0m.1-84.8h0m.2 94.4h0m0-10.2h0m.2 7.5h0m.2-8h0m.2-1.1h0m.2 4.2h0m.1 1.8h0m0-93.9h0m.1 85.3h0m0 9.4h0m.1 8.9h0m.1-86.2h0m0 1h0m.3 74.8h0m.1-2.1h0m.2-82.9h0m0 9.4h0m.2-1.5h0m0 77h0m.2 .5h0m.1 16.6h0m0-94.1h0m.1-7h0m0 86.6h0m0-78.5h0m0 73h0m.1-73.5h0m0 94h0m.5-24.8h0m.1-79.2h0m.1 87.2h0m0 1.7h0m0 .7h0m.1 6.5h0m.2-2.2h0m.2-84.1h0m.2 1.9h0m.1-5.9h0m.2 6.3h0m0 75.3h0m.1 3.3h0m0-104.6h0m.1 102.4h0m.4-7.5h0m0-80.8h0m0 11.1h0m.4 75h0m.1-90.5h0m0 .8h0m.1 95.5h0m0-99.5h0m0 113.6h0m.2-99.8h0m.1 4.1h0m0-3.4h0m.3 88.8h0m0-2.7h0m.1 7.2h0m0-93.9h0m.2-5h0m0-14.7h0m0 97.4h0m.3-5h0m.1-84.5h0m.1 11.4h0m0 3h0m.1 73.4h0m0-77.9h0m.2 73.8h0m0 9.2h0m0-76.7h0m0-6.3h0m.1-5.9h0m.3 12.6h0m.2-9.8h0m.1-3.9h0m0 85h0m0-95h0m.1 99.6h0m0-80.2h0m.1-6.8h0m.1 4.4h0m.1 6.7h0m.1-.3h0m.1 69h0m0-69.6h0m.1-5.3h0m.1 6h0m.1 82h0m.1 7.9h0m.1-13.4h0m0-5.8h0m.3-73.5h0m.2 71.3h0m.2-69.6h0m0 80.3h0m.1-81.2h0m.1 74.4h0m.1-87.6h0m.2 93h0m.1-6.9h0m.1-75.5h0m.1 76.8h0m.1-74h0m.2-4h0m0 76.8h0m.1 4.9h0m.1-6h0m0-73h0m0-4.5h0m0 8h0m.1 82.3h0m.3-81.9h0m.1 70.5h0m0-1.5h0m.2-69.3h0m0-8.9h0m.2 5.5h0m.3-20h0m.2 17h0m.1 87.1h0m.1-88.7h0m.1 6h0m0-10.5h0m.2 5.4h0m.1 78.4h0m.1-73.7h0m.1 .1h0m.2 74h0m.1 7.3h0m0-8.3h0m.1-75.5h0m0-7.8h0m.2 4.1h0m0 79.5h0m0-90.9h0m.1 19.3h0m0 74.9h0m.1-6.7h0m.1 16h0m0-105.2h0m.1 93.9h0m.1 20h0m.1-16.3h0m.1-75.7h0m.2-2.7h0m.1 74.1h0m0-3.2h0m.1 .3h0m.1-1.3h0m0 15.6h0m.1-16.5h0m0-88.6h0m.2 93h0m0-4.3h0m0-87.4h0m.1 3.6h0m0 97.5h0m.2-8.7h0m0 4h0m.1-81h0m.2 76h0m0-2.6h0m0 3.5h0m.2-72h0m.3 68.8h0m0 1.1h0m.2 14h0m0-11.7h0m.1-78.4h0m0-.1h0m.1 5.7h0m0 80.9h0m.1-79.3h0m.1-15.8h0m.1 13h0m.4 70.7h0m.6 3.5h0m0-4.2h0m.2 6.7h0m.1 .9h0m0-95.2h0m.3-5h0m.1 9.1h0m.2 11.4h0m0-.6h0m.1 1.4h0m0-18.4h0m.2 9.7h0m.1 8.6h0m.1-9.3h0m0 88.1h0m.2-87.1h0m0 90.8h0m.1-90.7h0m.1-2.6h0m0 84.3h0m0-73.9h0m.1 83.2h0m0-83.3h0m0 88.9h0m.3-6.5h0m0-97.3h0m.1 86.2h0m0-88.3h0m.4 1.6h0m0 87.1h0m.2-76.7h0m0 90.9h0m0-4.3h0m0-81.6h0m.1 77h0m0-84.3h0m.1 2.3h0m.1 90.6h0m0-83.9h0m.1 71.3h0m0-68.3h0m0-18.6h0m0 17h0m.2-.4h0m0 75.5h0m.1-74.5h0m0 69.6h0m.1 10.9h0m0-82.1h0m.1-6.4h0m.1 82h0m0-6.8h0m.3-86.6h0m.1 8.7h0m.1 79.3h0m0-1.2h0m0 14.6h0m.2-82.8h0m.1 70.2h0m0 9.8h0m.2-10.8h0m0-71.1h0m0-6.6h0m.1-9.8h0m.1 13.3h0m0 74.5h0m0-1.5h0m.1 4.7h0m0 .3h0m.1-1.1h0m0-76.7h0m.1-5.8h0m0-12.2h0m.4 93.8h0m.2-77.9h0m.1-7.6h0m0 8.7h0m0 76.4h0m.2-77.6h0m0 75h0m.2 4.6h0m.1-1.1h0m0-79h0m.1 77.6h0m0-.9h0m.1-84.9h0m.2 1.9h0m0 91.7h0m.1 6.8h0m.2-6h0m0-10.4h0m.1 7h0m.1-76.9h0m.1 76.5h0m.1 4.6h0m.2-3.7h0m0 1.9h0m.2-1h0m0-8h0m.1 22.4h0m.1-5.6h0m0-9.7h0m.1 24h0m0-12.3h0m.1-11.4h0m.2-79.9h0m.1 79.6h0m.1-80.3h0m.1 85.8h0m0-3.4h0m0-76.6h0m.1 76h0m.1-9.1h0m.2 .1h0m0 15.2h0m.1-90h0m0 82.8h0m0-76.7h0m.1 70.3h0m.1-77.2h0m0-4.4h0m.1 83.6h0m0 2h0m0-4.9h0m.1-70.3h0m0-16.1h0m.2 10.1h0m0 3h0m.2 72.2h0m.1-74.7h0m0 7h0m0 85.4h0m.1-102.7h0m.1 14.8h0m.1 72.7h0m.4 9.3h0m.1-85h0m.1 80.3h0m.1 9.5h0m.2-14.8h0m0 11.8h0m0-8.2h0m.1-81.6h0m.2-6.8h0m.2 11.3h0m.1 88.6h0m.1-13.4h0m.2-83.1h0m0 99.4h0m.2-2.8h0m.1-12.4h0m0 5h0m0-91.7h0m0 6.7h0m.1 8.3h0m0 75.6h0m0-74.7h0m0 66.2h0m.1-68.2h0m.1-10.9h0m.1 91.7h0m.1-79h0m.2 73.8h0m.2 9.2h0m0 7.2h0m0-15.8h0m.1 6.2h0m0-10.7h0m0-69.6h0m.1 67.6h0m.1-69h0m0 67.8h0m0 .4h0m.1-70.3h0m0 2.7h0m.3 71.5h0m0-76.8h0m0 5.3h0m.1 68.3h0m.1 2h0m.1-94.4h0m0 10.1h0m.2 8.1h0m0 73.5h0m.1-.2h0m.1-71h0m.1-9.2h0m.1 89.7h0m0-.1h0m.1-77.8h0m0 0h0m.2 84.2h0m.1-89.5h0m0 2.8h0m.1 70.8h0m.1-82.2h0m.1-7.7h0m.1 94.1h0m.1-74h0m.3 71.9h0m.1 9.8h0m0-87.4h0m.1 75h0m.2 4.2h0m.1 19.8h0m.2-103.3h0m.1 81.9h0m.1-72.3h0m0-19.1h0m.1 120.7h0m.1-8.8h0m0-104.2h0m0 14h0m.1-3.5h0m0-3.4h0m.1 78.3h0m0-4h0m0 1h0m.1 .1h0m.1 26.6h0m0-96.8h0m.4 76h0m.2 4.1h0m0-95.1h0m.1 98.7h0m.4-91.3h0m0 7h0m.1 86.4h0m.2-96.4h0m0 86.3h0m.1-88.2h0m0 86.5h0m.1-3.6h0m.1-69.2h0m.1 84.9h0m.1-106.9h0m.1 96.8h0m0-89.4h0m.1 109.5h0m.1-24.8h0m.3-73.7h0m.1 2.7h0m.1 68.9h0m0-74.3h0m0 79.1h0m.1-79.4h0m.1 81.6h0m0-83.4h0m0 80.4h0m.1-72.7h0m.1-19.9h0m0 100.7h0m.1-4.6h0m.1-97.7h0m.1 5.1h0m0 11.5h0m.1 5.5h0m0 67.9h0m.1-.1h0m.1 8.8h0m0-7.7h0m.1-71.9h0m0 1.6h0m.2 73.7h0m0-71.4h0m.1 92.5h0m.1-96.4h0m.1 4h0m.1 73.1h0m0 1.2h0m.1-1.8h0m0-71.9h0m.2-13.3h0m0 81.2h0m.1-77h0m0-.4h0m.2 86.8h0m0-10.3h0m.2 9.6h0m0-8.1h0m0-71.4h0m.1 94.9h0m.1-95.4h0m0-1.9h0m0 79.1h0m.1 3.3h0m.1-92.2h0m.2 13.7h0m0 89.3h0m.1-18.5h0m0-3h0m0-69h0m.2 72.9h0m0-94.8h0m.3 13.5h0m.1 81.4h0m.1 2.2h0m.1-83.6h0m.1 78.5h0m.1 19.8h0m0-91.8h0m.1-15h0m.3 86.1h0m.1-82.9h0m0 10.4h0m.1-17.7h0m.1 7h0m0 13.8h0m.1 99.2h0m.2-102.5h0m.1 .7h0m.1 5.2h0m0-13.4h0m.1 84.1h0m.1-3.4h0m0 9.2h0m.2-2.8h0m.1 4.4h0m.1-81.1h0m0-8.8h0m0 12.2h0m.5-4.7h0m0 73.8h0m0 20.1h0m.3-5.8h0m0-85h0m.4-7.1h0m0 6.5h0m.1-2.9h0m0 82.9h0m.1-81.4h0m0 71.6h0m.1-75.8h0m.2 5.8h0m.1-.3h0m.1 87.2h0m.2-85.4h0m.1-11.8h0m0 97h0m0-13.8h0m.2 2.9h0m.1-75.7h0m.1-2h0m0-2.7h0m.1-15.3h0m.1 92.6h0m0 2.5h0m0 11.3h0m.1-9.3h0m0-85.3h0m.1-3.7h0m.2 91h0m0-7h0m.2-3.2h0m0-92.4h0m.2 96.1h0m.1-86.3h0m0-4h0m.2 10.4h0m0 80.8h0m0-87.3h0m.2 8.5h0m.1 0h0m0 .2h0m.1 86.1h0m0-82.7h0m.2-4.8h0m.1-3.2h0m.2 11.1h0m.1-14.2h0m0 89.2h0m.3-75.9h0m.2-5.7h0m.1-1.6h0m.2 90.1h0m0-14.7h0m.2 29.6h0m.2-19.3h0m0-2.4h0m0-6.4h0m.1 10.3h0m0-80.6h0m.1-23.5h0m.1 116.1h0m0-17.5h0m0-6.1h0m.1 17h0m.1-1.6h0m0-96.8h0m.2 87.6h0m0-3h0m0-92.9h0m.2 102.2h0m.1-4.7h0m.1-101.5h0m0 20.7h0m.1 83.8h0m.1-80.7h0m.1 1.3h0m0-4.4h0m.1 92.9h0m0-90.5h0m.1 79.6h0m.1-98.6h0m0 113.3h0m.3-94.8h0m.1 73.8h0m.1-.8h0m0-87.7h0m0 94h0m.2-82.1h0m0-1.2h0m.1-2.7h0m0 79.6h0m0-88.8h0m.1 12.4h0m.1 1.1h0m0 78.1h0m0-71.9h0m.1-8h0m0 101.4h0m.1-97.8h0m0-3.4h0m.2 93.4h0m0-99.6h0m.1 97.7h0m0-96.7h0m0 81.8h0m0-72.4h0m.1-10.3h0m0 84.7h0m.1 3h0m0 .7h0m.2-93.8h0m.1 93.6h0m.1-5.2h0m.1 1.4h0m.1-70.2h0m.1 73.2h0m0-98.8h0m0 16h0m0 8.6h0m.2-4.5h0m.1 89.1h0m.1-91.6h0m0 77.1h0m.1 8.8h0m0 .3h0m.1-79.5h0m0-10.3h0m.1 2h0m.1 93.6h0m0-11.3h0m0 15.3h0m.1-97.8h0m0 8.8h0m.3 86.9h0m0-88.1h0m.1 72.2h0m.2-3.7h0m.3 4.7h0m.2-76.8h0m0 79.3h0m.1-6.3h0m0 1.7h0m0-.4h0m.1 17.7h0m0-17.2h0m.1-71.2h0m0-15h0m.1 87.9h0m0-85.7h0m0 10.5h0m.1-1.9h0m.2 73.3h0m.1-68.1h0m0-15.5h0m.2-4.1h0m0-1.7h0m.2 99.7h0m0-3.3h0m.1-.3h0m0-84.6h0m.1 82.5h0m0-4.1h0m.3-79.9h0m0 6.3h0m0-5.5h0m.1 87.2h0m.2-3.7h0m.1-92.4h0m.1 16.5h0m.1 82.1h0m.3-4.3h0m0-7.2h0m0 10.6h0m.1 1.5h0m0-81.7h0m0-7.5h0m0-.9h0m.1 85.9h0m.1-86.8h0m.2 96.5h0m0-16.2h0m.2-86.3h0m.1 99.8h0m0-93.6h0m.1-12.4h0m.1 13.7h0m.1 77.5h0m.1 8.2h0m.1 15h0m.2-96.3h0m0 2.8h0m.1-15h0m.1-3.2h0m0 93.8h0m.1 3.4h0m.3-8.5h0m.2 16.1h0m0 6.4h0m.1-5h0m0-11.8h0m0 3.4h0m.1-76.2h0m.1-2.1h0m.1 70.6h0m0 10.4h0m.1-79.6h0m.1-5.9h0m.1 1.1h0m0 82.6h0m0-88.5h0m.2-6.7h0m0 11.5h0m.1 73.7h0m0-71.6h0m.1 75.1h0m.1-72.8h0m0 84.8h0m.1-98.6h0m0 16.3h0m.2-6.7h0m.1 5.9h0m.2-1.7h0m0 86.8h0m.1-4.5h0m.1-10.6h0m.1 1.1h0m.1 .7h0m.3-1.4h0m.2-83.7h0m0 7.1h0m.1 77.1h0m0 13.9h0m.1-84.2h0m.1-10.1h0m0 86.1h0m.1-102.9h0m0 16.4h0m0-8.8h0m0 18.5h0m.1-11.1h0m0-5.3h0m.2 6.7h0m.1-4.7h0m0 85.3h0m0 9.9h0m.3-10.6h0m.2-81.1h0m0 10.7h0m.1-13h0m0 3h0m.1 86.5h0m.1-76.2h0m0-6.7h0m0 83.9h0m.1-2.9h0m.1-82.6h0m0 75.3h0m.1-72.5h0m.1 73.9h0m0 2.9h0m.1 3.3h0m0-88.6h0m0 83.2h0m.1 1.3h0m0 11.5h0m0-83h0m.1-9h0m.1 95.5h0m.2-86.6h0m0 74.8h0m.1-1.7h0m.1-3.4h0m0 5.4h0m.2-4.3h0m0 1.4h0m0 .4h0m0-89.7h0m.2 100.5h0m.1 3.1h0m.5-84.8h0m.1-9.4h0m.3 5.5h0m0-1.5h0m0-3.9h0m.4 90.7h0m0-15.1h0m.2 20.6h0m.1-14.7h0m0-77.3h0m0-2.5h0m.3 104.5h0m.1-111.3h0m0 101.6h0m.3-9.6h0m0-83h0m.2-.9h0m0 73.9h0m.2 .8h0m.1 6.6h0m.1 9h0m0-14.2h0m.1-1.6h0m.2-70.6h0m0-3.7h0m0-8.5h0m.1 1.2h0m.1 9.5h0m0 74.1h0m.1-91.8h0m.4 9.8h0m0 6.8h0m0 92.4h0m.1-12.7h0m0-76.4h0m.1-4.8h0m0-7.1h0m.1 5.8h0m0 75.5h0m0 15.6h0m.1-93.9h0m.1 86h0m0-87.9h0m.1 89.3h0m.2-5.6h0m0-78.4h0m0 1.2h0m0 5.4h0m.1-4.2h0m0 88.6h0m.1-17.3h0m.1 .1h0m.1-95.1h0m.1 106.6h0m.1-88.3h0m0 6.3h0m.2 73.7h0m.2 1.7h0m0-.4h0m.1 1.8h0m0-80.2h0m.1-9.6h0m0 14.4h0m.1-10.7h0m0-2.6h0m.1 8.2h0m.1 .9h0m0 3.1h0m.1 93.3h0m.1-89.6h0m.1 73.1h0m.3-83.2h0m.2 83h0m0 15.3h0m0-92.5h0m0 3.6h0m0-3.2h0m0-5.7h0m.2 7.7h0m0-6.1h0m.1-2.4h0m0 77.5h0m0-80.6h0m0 82.6h0m.1 3.1h0m.1-76.7h0m.1-.2h0m0 4h0m.1-11.7h0m0 3.4h0m.1 5.7h0m.2-13.4h0m.2 99.4h0m.1-84.1h0m0 70.2h0m.1 17h0m.2-13h0m0-79.3h0m0 1.4h0m.1 77.9h0m.1-95.6h0m0 17.7h0m0 77.1h0m0 22.9h0m0-111.8h0m0 14.4h0m.1-6.8h0m.1 77.2h0m0-.9h0m0-73.1h0m.1 4.1h0m.1 .4h0m.1 69.8h0m.1 10.3h0m.1-11.6h0m.3 .7h0m0 2.1h0m0 .9h0m.1-94.6h0m.2 106h0m0-12.3h0m.2-73.4h0m0 93.9h0m.1-91.6h0m0-12.9h0m.1 3.9h0m0-3.1h0m.1 82.1h0m0 3.4h0m.1-.3h0m0-78.4h0m.2 4h0m0 .1h0m.1-15.1h0m.3 107.6h0m.1-91.8h0m.1-14.6h0m.1 93.1h0m.2 7.7h0m0-104.1h0m0 92.5h0m.1-83h0m0 7.6h0m.1 83.3h0m0-82.3h0m.1-8.3h0m0-5.1h0m.1 6.7h0m.1 90.1h0m.1-3.7h0m.1-83.6h0m0 79.8h0m.1-82.2h0m0 0h0m.1-3.6h0m.2 6.1h0m0-15.8h0m.1 98.2h0m0-8.9h0m.3 3.6h0m.1-78.9h0m.1-2.6h0m.1 86.7h0m0-99.6h0m.1 .8h0m.1 91.7h0m0 3.5h0m.1-85.2h0m.2-7.5h0m.1 94.7h0m0-3.5h0m0 5.6h0m0-82.4h0m.1 77.9h0m.1-73.2h0m0 73.6h0m0-79.3h0m.1 76.3h0m0-71.7h0m0 72.7h0m.1 2.9h0m.2 8.8h0m0-97.8h0m0 94h0m.1 5.6h0m.1-97.3h0m0 81.8h0m.2-75.3h0m0 1.9h0m.1 71.2h0m0 8.3h0m0 1.9h0m0-101h0m.1 19.7h0m.1 79.5h0m0-6.6h0m0-70.8h0m.1 74.6h0m0-81.5h0m.1-.4h0m0-9.9h0m0 102.5h0m.1-87.9h0m.1 75.6h0m0-71.7h0m.1-1.7h0m0 70.1h0m.2-95.4h0m.1 116.4h0m0-12.7h0m.1 17.6h0m.2-106.8h0m0 85.9h0m0-74.2h0m0 75.2h0m0-86.6h0m.2 88.8h0m0-77.3h0m0 68.8h0m.1-80.7h0m0-12.6h0m.1 17.3h0m.2 75.7h0m0-88.9h0m.1 18.5h0m.1 78.9h0m0-7.7h0m.1-69.7h0m.5 .5h0m0 76.6h0m.1-89.3h0m.1 6.6h0m0 4.2h0m0-11.2h0m0 9.5h0m.2 84.8h0m.1 2.2h0m0-15h0m0 5h0m.1-77.4h0m.1 78.3h0m0-4.8h0m.2-72.8h0m.2-5.1h0m0 81.1h0m.1-81.8h0m.1 7.7h0m0-2.2h0m.1-6.9h0m.1 80.7h0m0 6.8h0m.1-86.9h0m.1 9.1h0m.1 2h0m.1 67.8h0m.1 15.5h0m0-97.2h0m.1-7.1h0m.1 20.3h0m0 76.5h0m.1-6.5h0m.1-77.9h0m0 104.6h0m0-26.5h0m.2-74h0m0 78h0m.2-73.7h0m.2-2.5h0m0-1.5h0m.1 76.6h0m.1-78.1h0m0-2h0m.1 5.9h0m.1 77.1h0m0-80.4h0m.1 4h0m.1 93.9h0m.1-110.9h0m0-2.3h0m.1 99.6h0m.1-99.2h0m0 100.7h0m.3-82.9h0m.2 1.7h0m.1 68h0m0-69.6h0m.2 84.9h0m0-93.2h0m.1 78.3h0m0-90.4h0m0 92.2h0m0 3.7h0m0-2.7h0m.3-4.3h0m0-90.6h0m.1 105.7h0m.2 11.5h0m0-106h0m0 82h0m.1 .4h0m0 .4h0m.1 19.1h0m.4-94h0m0 2h0m.4 73.5h0m.1-77.4h0m.1 79.1h0m0-74.1h0m.1 68.8h0m0-78.2h0m.1 85.5h0m0-7.6h0m0-74.1h0m.3-20.7h0m0 103h0m0-6.5h0m0-71.2h0m.1-4.2h0m.1 5.3h0m0 70.8h0m0-79.7h0m.1 83.1h0m0-74.5h0m0 .1h0m0-6.1h0m.1 83.1h0m0-7h0m.3 7.1h0m0 2.2h0m.2 13.1h0m0-98.8h0m0 88.9h0m0-92.9h0m.1 6.4h0m0 101.5h0m.1-95.6h0m0 83.6h0m.1-12.3h0m0-1.9h0m.1 19.4h0m0-112.1h0m0-.8h0m.2 100.6h0m.2 7.1h0m0-84.4h0m.1 70.7h0m.1-3.4h0m0 8.1h0m.1-2.7h0m.1-80.9h0m.1 87.8h0m.2-5.8h0m0-76.2h0m.1 1.1h0m.2 .1h0m0-2h0m0 3.4h0m.1-3.8h0m0-7.5h0m.1 12h0m0 78h0m.1-7.8h0m.2-78.4h0m.2 81.5h0m0-4.4h0m.3-87.5h0m.2 102.7h0m.1-94.1h0m.1 77.4h0m.1-69.8h0m0 76.2h0m0 13.3h0m.1-87h0m.1-26.2h0m.1 18.2h0m.1 80.5h0m0 13h0m0-88.2h0m0-6.4h0m.2-.6h0m.1 7.5h0m.1-9.5h0m0 83.6h0m0 9.5h0m0 14.7h0m.1-13h0m.1-14.8h0m.4-76.8h0m0 77.2h0m.1 9.2h0m.2-10.1h0m.2 10.4h0m0 4.4h0m0-92.6h0m.1 6.6h0m.1 101.1h0m0-29.5h0m.1-72.2h0m0 2.5h0m0 1.1h0m.1-15.4h0m0 7.9h0m.1-11.3h0m.1 2h0m0-2.8h0m.1 96.6h0m.1-76.8h0m0 77.3h0m.1-89.7h0m.4 88.9h0m0-77.9h0m.1 75.1h0m.2-83.4h0m.1 8.7h0m0 67.9h0m.2-82.6h0m0 3.5h0m0 4.8h0m0 5.5h0m.1 70.9h0m0-71.2h0m.3 94.2h0m.1-24.7h0m.1-70.2h0m0 79h0m0-8.6h0m.2-80.6h0m.2 11.9h0m.1 77.8h0m0 .2h0m.1-10.1h0m.2-82.4h0m0 11.5h0m0 2.5h0m.2-19.7h0m0 21h0m.1 82.8h0m0-9.1h0m.1-5.9h0m0 13.1h0m.2-13.6h0m0-69h0m.1 78.4h0m0-4.8h0m.2-.3h0m.1 2.5h0m0-1.3h0m.2 2h0m.2-.1h0m0-88.1h0m.1 80.4h0m0-71.2h0m0 86.8h0m.1-9.1h0m.1-74.4h0m0 85.5h0m0-11h0m0 2h0m0-.3h0m.2-79.2h0m0 .9h0m.1 86.9h0m0-101.9h0m.1 109.3h0m.1-18.8h0m0 2.4h0m.5-74.4h0m.1-14.1h0m0-9.1h0m.1 97.6h0m.1 .7h0m.1-5.3h0m0 .5h0m.1-73h0m0 2.1h0m0 71.3h0m.1-70.4h0m0-2.5h0m0-5.2h0m.2 77.5h0m.1-89.7h0m.2 19.2h0m0 70.2h0m.4 9.1h0m0 4.1h0m.1-3.2h0m.1-97.1h0m0 102.1h0m0-1.9h0m0-16.1h0m.1-87.5h0m0 8.4h0m.1 85.7h0m0 .2h0m0 6h0m.1-85.7h0m.1 2.7h0m.1-4.1h0m.1 80.6h0m0 1.7h0m.1-83.8h0m0 100.9h0m0-23.3h0m.2-73.3h0m0 4.4h0m.2 68.7h0m.1-2h0m0 1.6h0m.3 0h0m.1 8.8h0m0-79.3h0m.1 73.7h0m0 2.5h0m0 19h0m0-97.8h0m0-8.9h0m0-12.2h0m.5 23.7h0m.1 71.4h0m.1-88.6h0m0 99.7h0m0-83.9h0m.2 90.9h0m0-89.3h0m0 69.9h0m.1-70h0m0 69.4h0m0-74.4h0m.1-12.8h0m0 13h0m0 101.3h0m.1-24.2h0m0 9.1h0m0 .4h0m0-10.2h0m.2-2.2h0m.1-73h0m.1 1.9h0m.1 80.2h0m.1 1.7h0m.1-81.4h0m.1-2.2h0m0 93.1h0m0-12.7h0m0-7.5h0m.2-74h0m0 82.7h0m.1-85.1h0m0 1.6h0m.1 82.3h0m.2-98.4h0m0 9.8h0m.1-1.2h0m0 92.9h0m.1 8.1h0m.2 3.8h0m0-17.6h0m.2-3.7h0m.1-74.6h0m0 79.3h0m.1-81.9h0m0 3.7h0m0 73.6h0m.1 5.2h0m0 .3h0m0-95.6h0m.1 93.2h0m.1-3.3h0m0 .5h0m.1-76.5h0m0 84.2h0m0-82.3h0m.1-9.8h0m.1 94.2h0m.2-78.6h0m0-11.3h0m0 8.6h0m.5-14.1h0m0 16.4h0m.2-.5h0m0-9.4h0m0-7.7h0m.1 112.5h0m.2-22.4h0m.4-85.2h0m0 93.4h0m0-13.8h0m.1 2h0m0-69.8h0m0-5h0m.2 .7h0m.2-7h0m.1 10.1h0m0 .6h0m.1 73.1h0m.2-75h0m0 74.6h0m0 1h0m.1-77.3h0m0 6h0m.5-6.3h0m0-8.3h0m.2 13.9h0m.1-14.2h0m.1 .8h0m0 13.9h0m.1-1.2h0m.1 69.8h0m.1 1.6h0m0-76.3h0m.1 3.9h0m0-5.1h0m0 94h0m0-19.7h0m.1-75h0m0 1.5h0m.3 1h0m0 1.5h0m.2 73.6h0m0-3.2h0m.1-68.5h0m0 1.3h0m0 77.7h0m.1-84.9h0m.1 82.5h0m0-75.1h0m.1-10.8h0m.1-4h0m0 15.2h0m.2-2h0m.1 1.4h0m0 67.1h0m0 15.1h0m.1-5.4h0m0-95.4h0m0 17.1h0m0 79.4h0m.1 13.3h0m0-11.5h0m0-8.8h0m0-85h0m0 94h0m.1-98.4h0m0 16.5h0m0-5.7h0m.2 85.7h0m.1-80.7h0m.1-11.2h0m.1 90.7h0m.1-83.7h0m0 4.1h0m.1 80.2h0m0-79h0m0 69.3h0m.1 6.6h0m.1-74.1h0m0-9.4h0m.1-11.2h0m.1 90.4h0m.1-80.5h0m0 97.8h0m0-108.7h0m0 18.3h0m0-12.7h0m.1 89.2h0m.1-74.5h0m.1 .8h0m0-3.1h0m.2-8.4h0m.3 89.2h0m0-77.2h0m.2 .5h0m.2-3.1h0m.1-3.6h0m0 86.7h0m.1-84.9h0m.1 1.1h0m0-10.3h0m0 87.3h0m.1 5.5h0m0-.9h0m.3-98.5h0m.2 95.6h0m.1-77h0m.1 97h0m0-101.9h0m0 2h0m.1 4.3h0m.1-2.1h0m0 86.3h0m.3-85.2h0m0-4.4h0m0-15.9h0m0 10.2h0m.1 82.3h0m0 1.2h0m.2 6.1h0m.1-95.1h0m0 84.4h0m0-76.1h0m.1 89h0m.1-2.5h0m.1-6.6h0m0-79.4h0m.2 3.5h0m.3 1h0m0-13.6h0m0 90.7h0m.1-75h0m0-14.9h0m.2 13.1h0m.3-5.6h0m.1 5.9h0m0-3.1h0m.1 82.5h0m.1-78.1h0m0-.4h0m.7 72.1h0m0-.8h0m.2 2.1h0m.1-84.5h0m.1 90.2h0m0-9.5h0m0 7.9h0m.1-89.4h0m0 4.4h0m.2 81.1h0m0-89.1h0m0 87.6h0m.3-.5h0m0-87.8h0m0 86.9h0m.3 3.5h0m.1-71.8h0m0 69.8h0m.1-74.3h0m.1-8.3h0m0-8.4h0m.1 88.4h0m0 24.6h0m.3-21.3h0m.1 16.1h0m0-94.1h0m.2-6.3h0m0 13.8h0m0 70.8h0m.2 26.3h0m0-99h0m.1-1.3h0m.2 82.5h0m0-81.8h0m.1 1h0m.1 75.5h0m0-2.3h0m.2-72.1h0m0 75.2h0m.3-90h0m.1 82.4h0m.1-.2h0m0-67.9h0m.1-9.4h0m.1 7.3h0m0 80.2h0m.2 1.3h0m.3-10.5h0m0-72h0m.1 2.3h0m.1 68.8h0m.1 28.4h0m0-102.2h0m0 75.5h0m.1-76.7h0m.2 4.5h0m0-18h0m0 92.8h0m.3 5.5h0m.1-77h0m.1 70h0m.1 9.4h0m.1-85.3h0m0-5h0m0 99.9h0m.2-6h0m.1-88.5h0m0 74.8h0m0 24.2h0m0-100.2h0m.1 3h0m.1 101.8h0m0-17.9h0m.1-1.9h0m0-91.2h0m.1 82h0m.1-76.6h0m.1 3.1h0m0-16h0m0 88.8h0m.1-81.1h0m0 87.1h0m.3-1.3h0m.1-1.3h0m.1 7.4h0m.1-12.3h0m0-68.6h0m.2 75.2h0m0-90.6h0m.1 90.5h0m.2-74.5h0m.1-2.7h0m0-11.1h0m.1 96.3h0m.3-14.2h0m0-67.7h0m.1 71.6h0m.2-73.9h0m0 71.1h0m.1-68.9h0m0 72.8h0m0-73.2h0m.2 80.9h0m.1-12.3h0m.1 3.4h0m0-.5h0m.2-74.6h0m.1 94.9h0m.1-2.1h0m.1-7.6h0m0-8.3h0m0 4.8h0m.1 0h0m0-6.3h0m.1-74.5h0m0 79.6h0m0-7.4h0m.2 12.9h0m.1-95.2h0m.1 8.5h0m.3-3.8h0m0 80.8h0m.1-87.5h0m0 6.2h0m0 2.5h0m0 2.7h0m.1-22.9h0m.1 17.7h0m.2 94.3h0m.2-11.3h0m.1-82.3h0m0 75h0m.1-.1h0m0-67.6h0m0-2.5h0m.1-9.1h0m.2 80.6h0m0 .2h0m0-70.2h0m.3 .4h0m0 73.1h0m.1-71.1h0m.1 82.5h0m0-87.2h0m.2-19h0m.3 22.5h0m0 72.1h0m.1 3.7h0m0-3.2h0m.1-79.3h0m.1 81.7h0m.1 15.2h0m.1 8h0m.1-20.4h0m0-5.5h0m0-89h0m.1 85.5h0m0-90h0m.1 21.2h0m.1 68.7h0m0-1.2h0m.1-76.6h0m.1 6.4h0m.1-6.3h0m0 8.8h0m.4-7.4h0m0 77h0m.1-79.2h0m.2-5.3h0m.1 95.2h0m0-83.3h0m0 80.8h0m.2 5.4h0m.2-.3h0m.2-14.9h0m0-70.6h0m.1 71.9h0m0-69.8h0m.1-1.9h0m0 1.5h0m.1 77.8h0m.3-78.7h0m.2-10.9h0m.1 83.6h0m.2-69.8h0m.4-13.5h0m0 7.3h0m.2 80.6h0m0-88.5h0m0 3.3h0m.1 84.2h0m.1 2.8h0m0-5.3h0m0-3.7h0m0-71h0m.1 77.1h0m.1-79.3h0m0-17.2h0m.3 22h0m0 78.5h0m0-82.1h0m.2 77.5h0m.2-2.4h0m0-76h0m.3 97.8h0m.1-18.6h0m0-4h0m.2-78.1h0m0 88.6h0m0-80.6h0m.2 88.4h0m.3-105.8h0m0 93h0m.2-81h0m0-4.1h0m0 1h0m0 77.3h0m.1 10.1h0m0 4h0m.2-94.4h0m0 .9h0m0 81.9h0m.1-2.4h0m.1 3.2h0m0-74.4h0m.1-5.2h0m.1-17.4h0m.1 21h0m.1 86.9h0m.1-4.4h0m0 2.7h0m.6-4.8h0m.1-86.1h0m0 82.9h0m.1-81.3h0m.1 85.1h0m.1 11.8h0m0-8h0m0-5.3h0m.1-78.8h0m0-16.7h0m0 108.3h0m0-18.9h0m0 3.2h0m.2-72h0m.1-4.8h0m0-3h0m.2 80h0m.2-3.5h0m.1 14.7h0m0-2.9h0m.2-3.5h0m0-6h0m0-82.3h0m.2 7.3h0m.1-13h0m0 87.9h0m0-78.1h0m.1 85.4h0m0-11.5h0m.1 1.8h0m.1-.1h0m0 4.9h0m.2 2.5h0m.1-6.1h0m.1 12h0m0-1.8h0m.2-89.5h0m.1 .1h0m.1 7.8h0m.1 73.1h0m.3-3.2h0m0-73.9h0m0 75.3h0m0-82.8h0m0-.9h0m.1 87.8h0m.1-82.3h0m.1 6h0m0 70.5h0m.5-76.7h0m.1 5.6h0m0 86.9h0m0-12.6h0m.2-75.5h0m0 4.9h0m0 69.5h0m.1-.9h0m.1-2.5h0m0 2.4h0m0-68.5h0m.1 76.2h0m0-91.8h0m0 5.5h0m.2 86.9h0m0 .4h0m0-83.5h0m0-12.3h0m.1 92.1h0m0-74.4h0m.2 87.6h0m.1-20.4h0m.1 3.3h0m.1-3.4h0m.1-73.4h0m.1 83.2h0m.1-101.8h0m0 92.5h0m.3-69.7h0m.1-13.2h0m.1 83.4h0m.1 29.8h0m.1-28.5h0m0 1.5h0m.2 17.1h0m.1-18h0m.1-82.4h0m0 80.7h0m.1-75.7h0m0 80.2h0m.2-75.4h0m.1-16.5h0m0-1.1h0m.1 93.5h0m0 .3h0m.1-85.8h0m0 89.2h0m0-9.4h0m.1 3.2h0m.1 16.5h0m0-14.5h0m.1-5.7h0m0-69.1h0m0-.9h0m.2 72.5h0m.2 5.2h0m.3 8.7h0m.1-16.3h0m.1-78.8h0m0 81.9h0m.1-79.8h0m0 77.1h0m.1 2.2h0m.1 1.6h0m0-3.1h0m.3-81.3h0m0 5.7h0m.1-4.2h0m0 80.3h0m.1 5.3h0m.1-79.9h0m0-3.9h0m0-14.9h0m.2 92.9h0m0 22.1h0m.1-17.3h0m.1-74.2h0m0-8.2h0m.1-2.8h0m0 9.6h0m.1 85.3h0m.1-96.5h0m0 95.1h0m.2-81.5h0m.2 69.1h0m0 14.4h0m.1-6.8h0m.1-80.5h0m0 79.4h0m.6-83.1h0m.1 78.1h0m.1-77.6h0m.2 87h0m.1-6.6h0m.1-75.9h0m0-2.5h0m.1 96.6h0m.1-100.2h0m.2 81.6h0m0-83.1h0m.1 6.6h0m0 76.1h0m0-72.5h0m.1-5h0m.2 80.6h0m.1 3.3h0m.1-6.7h0m.1 20.5h0m.1-103.7h0m0-8.3h0m.1 101.2h0m.1-.1h0m.4-90.6h0m.1 .9h0m0 74.9h0m0-93.8h0m0 9.7h0m.1 89.6h0m0-76.8h0m0 1.2h0m.1-2h0m0-17.8h0m.1 3h0m0 109.5h0m0-7h0m.3-6.8h0m0-7.5h0m.1-81.5h0m.1 84.4h0m.1-73.5h0m.2 84.6h0m0-5.3h0m0-81.8h0m.1 4.7h0m0 72.1h0m.1-3.9h0m.3 7.2h0m0-88.9h0m.1 1.1h0m0-8.8h0m.4 108.5h0m.1-14.4h0m.1-2.9h0m0-73h0m.1-.1h0m0 1.8h0m.1-17.8h0m0 86.8h0m0-69.8h0m0 70.2h0m.1 3.9h0m0-89.3h0m0 97.9h0m.1-86.3h0m0 74.3h0m.1-81.9h0m.1 84.4h0m.1-73.7h0m0-2.9h0m.1 1.4h0m0 75.6h0m.1-76.2h0m0 85h0m.2-83.9h0m.1-5.1h0m.1 0h0m.1 7.4h0m.2-4.9h0m0 77.3h0m.1-81.6h0m0 3.9h0m.2 4.4h0m.1-7.4h0m.1-7.8h0m0 85.9h0m0 11.1h0m.1-12h0m0-75.9h0m.1-10.6h0m0 101.2h0m.1-84.4h0m.1 84.9h0m.1-98.6h0m.3 82.9h0m0 21h0m0-94.8h0m.1 6.8h0m0 81.9h0m0-82h0m0-22.9h0m.1 106.1h0m.1-14.7h0m.1-79.3h0m.2-12.9h0m0 13h0m0-3.6h0m.1 83.6h0m.1-74.4h0m0 5.5h0m0 93.3h0m.1-7.8h0m0-87.2h0m.1-5.4h0m.1 87.2h0m.1-98.8h0m0 10h0m.2-7h0m.2 93.3h0m0-78.9h0m.1 74.5h0m.2 11.4h0m.2-11.7h0m0-79.1h0m.2 76.2h0m.3-75.6h0m.1 87.3h0m0 16h0m.1-109.1h0m.2 6.7h0m0 71.2h0m0 15h0m.1-2.3h0m0-10.3h0m.3 .4h0m.1-90.7h0m0 89.3h0m.1-69.1h0m0 79.7h0m0-99.9h0m.1-.1h0m.2 16h0m0 75.3h0m.2 1.9h0m.1 8.1h0m0-9.5h0m0-71.1h0m.3 69.3h0m0-75h0m.3-3.9h0m0 86.5h0m.2-9.4h0m.1-67.4h0m.1 67.3h0m.1 2.5h0m.1-94.2h0m0 98.2h0m.1-86.6h0m.1 82h0m.2 0h0m.1 9.8h0m.2-80.3h0m0 70h0m.1-75.1h0m0 82.1h0m.1 22.9h0m.1-31.2h0m.1-70.3h0m0 76.8h0m0-2.9h0m.1-75.1h0m.1 72h0m.3 5.8h0m.1-75.2h0m0 73.6h0m0 7.6h0m.1-80.7h0m.2 84h0m.3-14.7h0m0-67.7h0m0-22.9h0m.3 12.7h0m0 8.2h0m0 69h0m.1 3.2h0m0-2.5h0m0 24.7h0m0-15.9h0m.1-5.5h0m.1-83.5h0m0 6.5h0m.2 82.2h0m.1 .8h0m.1 16.7h0m.1-26.9h0m0 9h0m.2 6.2h0m0-96.3h0m0 82.9h0m0-83.4h0m0 11.4h0m.1 77.5h0m.2-76.5h0m0 80h0m.1-91.5h0m.1 83.8h0m0 .3h0m.1-72.5h0m.1 3h0m0-4.1h0m.2 1.6h0m.3 69.2h0m0-80.6h0m0 8h0m.5 85.7h0m.1 3.7h0m.1-84.4h0m0-6.2h0m.1 7h0m.1 82.2h0m0-88.5h0m.1 82.7h0m.2 11.8h0m.1-11.1h0m.2-77.4h0m0-26.9h0m.3 100.7h0m.1-86.5h0m.1 1.1h0m0 4.3h0m0-5.4h0m.2 87h0m.1-90.1h0m0 14.9h0m0 74.7h0m.1-80.5h0m.3 3.8h0m.1 88.9h0m0-6.8h0m0-89.1h0m.1 78h0m.1-73.9h0m.2 75.5h0m.2 7.1h0m0-8.4h0m0 8.4h0m.1-92.6h0m.1 85.8h0m.2-82.6h0m0-1.2h0m0 86h0m.1-80.5h0m.1 .5h0m.1 78.1h0m.2-1.8h0m.1-74.5h0m.4 85.1h0m.1-4h0m.1-5.3h0m.1-79.3h0m.2 78.8h0m.1 3.6h0m.1 22.5h0m.3-103.7h0m.4 3.1h0m.3 81.5h0m.1-2h0m0-3.3h0m.3-73h0m0-17h0m.1 18.9h0m0 68.1h0m.4-67.8h0m0 72.3h0m.2-74.9h0m.1-16.8h0m.1-3h0m.1 89.8h0m.1 14.6h0m.1-8h0m.1-98.7h0m0 92.9h0m.1-79.1h0m.1 82.4h0m0-77.4h0m.1-3.5h0m.1 9.1h0m0-1.2h0m0 86.2h0m.1-84.6h0m0-3.8h0m.2 75.1h0m.1-79.5h0m0 94.6h0m.1-107.9h0m.3 12.6h0m.1 93.5h0m0-93.4h0m.1 85.6h0m.1-4.4h0m.1-74h0m.2-.5h0m.1 68.9h0m.1-73.9h0m.1 .4h0m.1 6.3h0m.2 77.8h0m0-101.7h0m.1 100.2h0m.3-1h0m0-78h0m.2-4.3h0m0 73.9h0m.1-79.8h0m.1 2.1h0m.2 97.4h0m0-87.9h0m.2-.5h0m0 75h0m0-84.7h0m0 10.8h0m0-5.4h0m.1 75.3h0m.3-72.7h0m.1 73.3h0m.1-2.6h0m0 9.2h0m0-83.3h0m.1-.6h0m0 3.7h0m.1 78.9h0m0-6h0m.1-.4h0m0-69.5h0m0-18.1h0m.1 100.3h0m.1-10.3h0m.3-79.2h0m0 94h0m.1-19.2h0m.1 27.2h0m.1-27.1h0m0 15.6h0m.1-82h0m0 71.7h0m.1-1.1h0m.1 10.2h0m.1-102.9h0m0 90.5h0m.1-72.1h0m.2 .4h0m.2 73.2h0m0-1.9h0m.1-74.9h0m.1 4.9h0m.2-3h0m.3-8.4h0m0 87h0m.1-86.4h0m0 83.8h0m.1 23.3h0m0-96h0m.1-1.3h0m0 73.9h0m.1 24.3h0m.2-13.4h0m0 0h0m.1-101.5h0m0 6.9h0m0 91.8h0m.1-88.2h0m0-3.1h0m0 83.6h0m.1-73.3h0m.1-6.3h0m0 7.2h0m.1-3.1h0m0 79.2h0m.2-79.2h0m.1-12.4h0m0-7.9h0m0 108.6h0m0-87.2h0m.1 72.8h0m.1 2.7h0m.1 10h0m.6-12.9h0m0-77.8h0m.1 .8h0m.2 75.7h0m.2-74.8h0m0 89.8h0m.1-12h0m0-72.7h0m0 1.2h0m0 69.3h0m0 19.1h0m0-96h0m.1-6.5h0m.2 6.7h0m0 2.4h0m.1 92.2h0m0-88.1h0m0-1.1h0m.1-.1h0m.1 1.8h0m.1 73.6h0m.2-77.3h0m0-.9h0m0-19h0m.1 15.5h0m.2-3.7h0m0 5h0m.1-9.5h0m.1 11.7h0m0-.5h0m.1 2.3h0m0-4h0m.1 77.3h0m0 1h0m.1 .5h0m0-76.7h0m.2 3.9h0m0-8.8h0m.1 8.8h0m.3-.6h0m0-10.6h0m.1 79.8h0m.1 13.5h0m.1-11.7h0m.1 .2h0m.1 17.2h0m.2-14.2h0m0 5h0m0-9.7h0m.2 .8h0m.2 4.2h0m.2-89.1h0m.2 6.6h0m0 6.5h0m.1-1.9h0m.1 74.7h0m0-85.8h0m.1 96.9h0m.2-103.9h0m0 22.4h0m0 78h0m.1-81.3h0m0-2.7h0m0 82.6h0m0-2.9h0m.1-3.8h0m.4-1.1h0m0-68.4h0m.2 77.2h0m0-80.8h0m.1 78.2h0m0-79.2h0m.1 2.7h0m.1 88.9h0m0-16.9h0m0 26h0m0-106.9h0m0 92.8h0m.1-83.5h0m.1 80.1h0m0-101.7h0m.1 90.2h0m0 17.2h0m.2-16h0m0-75h0m0-18.2h0m.1 25.2h0m.1 .2h0m0-8.8h0m0 95.2h0m.2-93.7h0m.1 87.2h0m.1-8.8h0m.1 0h0m0-87.3h0m0 15.7h0m.1-22.6h0m0 97.7h0m0-84.9h0m.1 89.7h0m.1-85.3h0m0-8.1h0m.1-8.3h0m0 96.7h0m.1-90.4h0m.1 15.7h0m.2 67.6h0m0-73.1h0m.2 3.9h0m.3 2.1h0m.2-3h0m.2 79.8h0m.1-90.6h0m.1 83h0m.1-82h0m0 .4h0m0-5.2h0m.1 8.6h0m.1-5.3h0m.1 88h0m.1 16.8h0m.1-106.3h0m0 .2h0m0 90.8h0m.1-87.2h0m.1-5.2h0m0 88.8h0m.1-76.8h0m.1 89.3h0m.2 9.2h0m0-96.3h0m0 69.9h0m.1 18h0m.1-16.7h0m0-76.2h0m.2 96.3h0m.1-14.7h0m.4-76.7h0m.1 73.6h0m0-77h0m.1-20.9h0m0 103.4h0m.3-85.4h0m0 6.1h0m0 74.6h0m.1 16.7h0m0-89.1h0m0 69.5h0m.2-1.8h0m0 .2h0m.1-83.6h0m.1 99.9h0m0-92h0m0 89.6h0m.1-81h0m.1-7.2h0m.1-10.2h0m.1 92.4h0m.2-82.2h0m.3 2.8h0m0-2.1h0m0 6h0m0 83.1h0m.1-5.2h0m0 6.2h0m.1-98.5h0m0 5.4h0m0 88.4h0m0-78.9h0m0 76.1h0m0-7.7h0m.2-76.3h0m.2 8.2h0m0 79.4h0m.1-100.1h0m.1 5.7h0m.1 8.9h0m.1 72.9h0m0-80.9h0m.1 11.5h0m0 99.3h0m.1-29.7h0m0 13.9h0m0-9h0m.1-75.2h0m0 1h0m.1 72.3h0m0-70h0m0-14.7h0m.1 7.1h0m0 88.6h0m.2-8.6h0m0 9.8h0m.2-101.6h0m.3 18h0m0 76.9h0m0-.7h0m.2-97h0m0 88.2h0m.1-71.2h0m.1 79.8h0m.1-87.7h0m.5-2.8h0m0-.7h0m.1 13.7h0m0 73.3h0m.2-2h0m.3-1.8h0m0-68.8h0m.1-19.6h0m0-4.7h0m.1 21.3h0m0-5.4h0m0 80.5h0m.3 4h0m.2-82.7h0m.2 77.5h0m.1 8.3h0m0-81.8h0m.2 1.4h0m.5 74.5h0m.1-75.8h0m.2 77.7h0m0-76.6h0m.1 2.8h0m0 70h0m.1 11.5h0m.1-3.9h0m.1 5.8h0m0-95.1h0m.3 81.4h0m0 1.3h0m.1-87.3h0m.2 12h0m0 71.1h0m.2 3.2h0m.1-90.4h0m0 1.5h0m0-7.4h0m.1 21.1h0m0-1.2h0m.1 4.9h0m.1-5.6h0m.1 90h0m0-83h0m.1-5.6h0m.2 3.7h0m0 71.9h0m.3-1.7h0m.1-75.5h0m.2 74.3h0m0-68.8h0m.1 73h0m.1-74.2h0m0-2.4h0m.2 1.5h0m0-15.4h0m0 89.6h0m0-79.6h0m.1 3.6h0m0 2.6h0m.1 .6h0m0 71h0m0 18.5h0m.1-90.1h0m.1-3.6h0m.1 1.3h0m0 78.2h0m.1-74h0m0-2.1h0m0-15.7h0m.1 18.4h0m0-10.2h0m.1-17h0m.1 99.1h0m.3 0h0m0-4.3h0m.1-71.3h0m.3-3.7h0m0 86.4h0m.1-91.5h0m0 8.6h0m.1 3.7h0m.4-7.1h0m0 5.9h0m.1 1h0m.1-1.3h0m.2 81.6h0m.2-9h0m0 17.8h0m.1-90h0m.1 71.5h0m.3 6.1h0m0-86.8h0m.1 83.9h0m.1 9h0m0-5.9h0m.1-77.7h0m0 80.4h0m.3-85.2h0m0-7.5h0m.1 85h0m.2 .3h0m.5-85.3h0m0 100.6h0m.1-15.4h0m0-84.4h0m.1 97.5h0m.1-6.2h0m0-9.1h0m.1 2.8h0m.1-80.7h0m.1 5.8h0m.2 3.6h0m0-13.8h0m0 1.9h0m.5 78.7h0m0-70.9h0m.1 2h0m.2 78.2h0m.1-84.2h0m.1 89h0m0 4.2h0m.1-17h0m.1-75.3h0m0 1.7h0m0 5.4h0m.1-4.9h0m.3 4.3h0m.2-3.1h0m0 1.9h0m0 92.2h0m.1-19.6h0m0-3.1h0m.1 12.7h0m.1-12.4h0m.1 4.4h0m.1 8h0m.1-83.1h0m0-9.6h0m.1 92.7h0m.1-9.8h0m0 11.1h0m.2-13.6h0m.1-75.2h0m0 76.7h0m0-.8h0m.1-72.3h0m0 73.8h0m0 0h0m.1-81.9h0m.1 9.4h0m.1 99.5h0m.1-97.2h0m0 72.2h0m.1-5.5h0m.1-70.7h0m0 81.9h0m.1 13.3h0m0-95.8h0m.1-.1h0m0 4.1h0m.2 80.2h0m0 5.5h0m0-98.2h0m0 1.3h0m.2 89.5h0m.1-5.7h0m.1 4.5h0m.1 6h0m.1-97.5h0m0 95.8h0m.1-7.3h0m.2 15.3h0m.2-91.8h0m0 71.3h0m0 15.3h0m0-85.1h0m.1 .7h0m.2 78.6h0m.1-84.1h0m.2 .8h0m0-8.3h0m0 88.6h0m.2-99.5h0m.1 24.7h0m0-11.1h0m0 3.4h0m.2 77.5h0m0 2.5h0m.1-5.1h0m.1 3.7h0m0-75h0m.2 79.4h0m.2 2.8h0m.1-7.4h0m.1-1.3h0m.1-69.7h0m.1-2.6h0m0-.8h0m.1 1.3h0m0 80.3h0m.1-87.8h0m0-.4h0m0 82.5h0m.1 7.8h0m0-7.2h0m0-79.3h0m0-13.3h0m.2 102.1h0m.3-92.6h0m0 78.3h0m.1 2.1h0m0 3.3h0m0-85.6h0m.1 11.4h0m0-5h0m0 78h0m0-94.3h0m0 8.4h0m.1 83.4h0m0 8.4h0m.2-5.8h0m.2-3h0m0-74.8h0m.1-5h0m.1 9.1h0m0-4.7h0m.1 75.2h0m.2-1.8h0m.1 1.8h0m.2-70.5h0m0-.3h0m.2-1.2h0m.1 0h0m0 73.2h0m.1-92.9h0m.1 6.5h0m0 8.3h0m.3 1.5h0m.2 .6h0m0 5.9h0m.1-2h0m0-1.2h0m.1 80.3h0m0-96.2h0m.1 104.3h0m0-4.4h0m.1-12.6h0m0 4.7h0m.1 1.8h0m0-5.2h0m.1-71.3h0m.1 .3h0m0-23.8h0m.3 10.5h0m0 .5h0m.2 109.2h0m.1-22.5h0m.1-.9h0m.2-72.7h0m0 84.8h0m0-2.5h0m.3-4.4h0m0-.5h0m.2-5.7h0m.1-89.1h0m0 86.9h0m.1-68.4h0m.2 66.8h0m.1-66.7h0m.1-.5h0m.2 75.5h0m0-2.3h0m.1 6.5h0m0-9.4h0m.2-93.5h0m0 93h0m.1-.4h0m0-78.6h0m.1 5.3h0m0 2.9h0m0 81.7h0m.1-89h0m.2 6.6h0m0-14.9h0m0 106.3h0m.1-10.1h0m.2-2.8h0m.1-79.5h0m.1-.4h0m0-12.6h0m.1-10.1h0m.2 101.6h0m0-97.3h0m.1 7.4h0m.1 107.4h0m.1-97.4h0m0-5.3h0m.2 84.9h0m0-1.1h0m0 13.7h0m.1-115.8h0m.1 102h0m.1-3.6h0m.1-78.4h0m.1 93.8h0m.2-13.9h0m.1-4.5h0m.1 4.8h0m.1-86.2h0m.1 96.7h0m0-82.2h0m.3-1.7h0m0 1.2h0m0-.5h0m0 73.8h0m.2 14.8h0m0-90.7h0m.1-8h0m0 6.5h0m0 92.5h0m.1-8.9h0m0-80.4h0m0-12.1h0m.1 89.9h0m.2-86.9h0m0 9.8h0m0 68.2h0m.1-67.8h0m.1-13.6h0m.1 11.9h0m.1 70.6h0m.1-77h0m0 2.4h0m.1 91.3h0m.2-88.8h0m.1-2.1h0m.1-17.3h0m0 20.2h0m0-7.6h0m0 95.1h0m.1-17.2h0m0 9.3h0m.1-7.3h0m.3 1.2h0m0 4.9h0m.1-99h0m.1 17h0m0-8.4h0m0 4.2h0m.1-5.2h0m0 90.1h0m.1-6.4h0m.1 7.1h0m0-3.8h0m.1-4.7h0m0 .4h0m0-67.3h0m.1 75.1h0m.5-87.8h0m0 84.5h0m.1-5.3h0m.1 2.3h0m0 18.4h0m.1-95.3h0m.1 6.2h0m.2 87.7h0m0-19h0m.1-77.8h0m0 3.5h0m.1 93.4h0m.2-110.7h0m0 99.3h0m0-91.3h0m.1 14.3h0m.1 72h0m0-84.3h0m.1 84.5h0m0-83.5h0m.1 8.9h0m.1 83.3h0m.2-96.2h0m0 91h0m.1-73h0m.1 71.5h0m0-85.5h0m0 89.8h0m.2-7.7h0m0 4.5h0m0 1.5h0m0-91.9h0m.1 4.6h0m0 80.1h0m.2 1h0m.3 1.4h0m0-86.3h0m.1 94.3h0m0-3.5h0m.2-79.9h0m0 77.5h0m.1-82.2h0m.1 3h0m.1 87.6h0m.1 4.3h0m.2-17.3h0m.3-77.6h0m.1 5.2h0m.1-12.1h0m.3-1.7h0m.1 9.3h0m.1-4.6h0m.1 10.9h0m0 70.2h0m.3-86.8h0m0 89.8h0m.1-71.9h0m.2 80.2h0m.1-98.3h0m0 16h0m.8 87.5h0m.1 1.1h0m0 7.1h0m.2-94.5h0m0 78.3h0m.2-76.3h0m0-1.6h0m.1 86.6h0m.6-84.7h0m0-18.8h0m0 94.3h0m.2-7.4h0m0 1.5h0m0-77.8h0m.1-6.9h0m.1 94.1h0m0-78.5h0m.1-27.1h0m.1 101.7h0m.1-7.7h0m0-67.7h0m.1-9.5h0m0 81.5h0m.1 1h0m.3-.8h0m.1-88.1h0m.2 .3h0m0 0h0m.1 93.6h0m0-78.7h0m.1 71.8h0m0-.2h0m.1-.5h0m.1-69.7h0m.1 67.8h0m.1-73.5h0m.1 75.4h0m.1-2.2h0m0 .9h0m0-87.9h0m.1 87.9h0m.2-72.3h0m.1 79.7h0m.1-8.7h0m0 17.1h0m.3-15.4h0m.1-.2h0m0-.6h0m0-69.2h0m.1 84.1h0m.1-6.9h0m0-.1h0m.3-4.4h0m.1 5.9h0m0-9h0m0 5.7h0m.2-5.2h0m0-92.3h0m0 97h0m0-1.5h0m.2-2.9h0m0 18.6h0m.1-97.7h0m.1 90.2h0m0-91h0m.2 82.1h0m.1 18.6h0m0-9.1h0m0-81.6h0m.2 0h0m0 80.9h0m.1 12.3h0m0-97.6h0m.2 73.5h0m.1-81.5h0m0 100.4h0m.1-89.3h0m.1 80.3h0m.1-81.9h0m0 3.1h0m0 68.7h0m.1 6.9h0m0 3.7h0m.1-1.7h0m0-7.1h0m.3-83.4h0m.1 1.4h0m.1 95.9h0m.3-91.2h0m.2-3.1h0m.1 5.8h0m.2 89.6h0m.1-4.1h0m0-81.2h0m0 72.8h0m.1-93.1h0m0 12.3h0m.2 76.7h0m.1-75.4h0m0 83.6h0m0-90.1h0m0 .8h0m.2 97h0m.1-15.7h0m.1-88.3h0m.1 103.3h0m.1-3.6h0m.1-92.1h0m.1 86.2h0m.1-93h0m.1 12.1h0m.1-7.2h0m.1 95.9h0m0-87h0m.2-13.6h0m0 12.9h0m0 3.7h0m.1 2h0m0 84.9h0m0-110.5h0m.1 24.9h0m0 70.3h0m0-85.6h0m.1 92.1h0m0-76.1h0m.1 67.4h0m0 2.9h0m0 16.2h0m.1-18.4h0m.1-79.1h0m.1 3h0m0-7.6h0m.1 11.1h0m.1 0h0m.1 82.4h0m.1-5.7h0m.1-97.3h0m0 23.1h0m.3 89.2h0m.2-18.5h0m0-74.5h0m0 78.9h0m0-85.8h0m0-9h0m0 10.1h0m.1 9.3h0m0 73.2h0m.3 2.9h0m0-73.9h0m.2 68.3h0m.1 9h0m.3 8.2h0m0-94.1h0m0 80h0m.2-2.3h0m0-73.5h0m.1 81.1h0m.1 10.5h0m0-97.5h0m.1 90.5h0m.1-3.2h0m0-4.5h0m.2-.5h0m0-97.2h0m.1 20h0m0-4.6h0m.1 86h0m.1-9.2h0m.1 2.1h0m0-1.8h0m0 10.1h0m.1 4.8h0m.2-5.4h0m.1-78.5h0m0 71.8h0m.2-74.8h0m0 75.3h0m.1-1.2h0m.1-76.8h0m.3 75.5h0m0-80.1h0m0 10.9h0m0 76.7h0m0-79.8h0m.1 85.5h0m.2-1.9h0m.1-85.9h0m0 79h0m.2-73.5h0m0-24.3h0m0 22.6h0m.2-12.8h0m.1 93.3h0m0-7.2h0m.1-71.6h0m0 72.9h0m.5-4.6h0m0-81.6h0m.1 84.3h0m.2-2.6h0m0 2.6h0m0-73.7h0m.1 77.9h0m0-78.8h0m0 1.8h0m0 84h0m.1-80.6h0m.1-8.6h0m0-8h0m0 101h0m.1-10.9h0m.1-79.2h0m0-2.3h0m0-19.6h0m.2 112.6h0m0-97.6h0m0 11.6h0m.1 81.7h0m0-83.8h0m0 72.2h0m.1 11.7h0m0-1.7h0m.1-96h0m0 13.5h0m.1-3.5h0m0 1.2h0m.1 79.4h0m.1-95.4h0m.1 8h0m.1 12.1h0m0 2h0m0-6.1h0m.1 4.2h0m0-11.4h0m0 1.2h0m0 9.6h0m.1-3.5h0m.2 .8h0m0 71.8h0m.1-67.9h0m0-6.1h0m0 3.6h0m.1 74.9h0m0-2.7h0m.1-93.7h0m0 98.2h0m0-74.7h0m.1 80.6h0m0-8.2h0m.1-4.4h0m.1-75.7h0m0-3.2h0m.1 12.2h0m.1 75.7h0m.1-98.1h0m0 13.9h0m.1 83.6h0m.1-82h0m.2 89.5h0m0-83.2h0m.2-7.7h0m0 7.4h0m.3 70h0m0 1h0m.1-74.3h0m.1 76.7h0m.3-81.1h0m0 76.7h0m0-72.4h0m.1-12.5h0m.1 93.2h0m.1-8.3h0m0-70.1h0m0 68.9h0m.5-71.4h0m0 79h0m.2 5.4h0m0-11.2h0m0-73.8h0m.1-1.3h0m.1 6.2h0m0-2.6h0m.1-13.8h0m0 89.6h0m0-84.9h0m.1 108.6h0m.1-27.4h0m.1-75.6h0m0 .8h0m0-13.6h0m0 107.9h0m.2-94.8h0m0 74.3h0m0-71.4h0m.1-16.1h0m0 .3h0m.2 11.8h0m.2 77.9h0m0-89.4h0m0 90.4h0m0-86.7h0m0 96.1h0m.1-81.5h0m0-4.5h0m0-8.8h0m0 7.9h0m.4-12.1h0m0-4.5h0m.1 119.9h0m0-24.7h0m0-76.3h0m.2 76.6h0m.1 9.4h0m0-83.9h0m0 87.5h0m.2-10.8h0m.1-1.9h0m.1-2.8h0m0 10.7h0m0-90h0m.3-7h0m.1 89.5h0m.2-2.6h0m0 19.1h0m0-12.3h0m.2 4.6h0m0-84.6h0m.1 69.4h0m.3-69.1h0m.1-5.2h0m0 6.7h0m.1 67h0m0 10.5h0m.1-85.9h0m0 85.2h0m.1-9.7h0m0 7.9h0m.1-6.4h0m.1-86.9h0m0 92.1h0m0 8.7h0m.2-5.8h0m.1-8.8h0m0 3.9h0m.1-.7h0m0-80.2h0m0-3.9h0m0 81h0m.1-73.8h0m0-15.7h0m.1 15.7h0m.1 73h0m0-.7h0m.3-75.4h0m.1 91.1h0m0-9.9h0m.1-4.7h0m.1-84.7h0m0 89.2h0m0-75.8h0m.1 1.4h0m0-7.9h0m.1 79.6h0m.2-78h0m0 77.5h0m.2-85.7h0m0 83.8h0m.1-71.7h0m0 3.8h0m.1 72.1h0m0-1.1h0m.1 2.1h0m0-.3h0m0-77.6h0m0 75.9h0m0 1.3h0m.3 2h0m.1 8.4h0m.2-93.4h0m.1 81.6h0m0-73.7h0m.2-7h0m.2 4.5h0m0-2.9h0m.1 76h0m0 2.5h0m.2-2.3h0m0-83.2h0m.4 84.6h0m0 5.4h0m.1-7.4h0m.1-72.6h0m.1 0h0m.2-1.9h0m.3 82h0m.1-73.7h0m.2 76h0m0-90.1h0m.2 9.1h0m.3 86.7h0m.3-14.5h0m0-73.9h0m.3 83.2h0m.2-7.6h0m.1-1.2h0m.3 1.6h0m.1-71h0m.1 73.2h0m0-72.4h0m0 .1h0m0 83h0m.1-9.1h0m.2-77.2h0m.1 77.7h0m.1-80.3h0m0 1.1h0m.1-7.7h0m.1 84.5h0m.1-88.2h0m.2 83.7h0m0 20.4h0m.1-16.5h0m.1 9.8h0m.2-80.6h0m.2 79.7h0m.3-8.7h0m.1 2.7h0m.1-5.2h0m0 3.2h0m0 15.9h0m.1-90.2h0m.1-5.5h0m0 1.6h0m0 4h0m.2-10.9h0m0 9.4h0m.3 3.3h0m0 76h0m0-76h0m.1 67.3h0m0-75.7h0m0 5.2h0m.2 77.7h0m0 7.8h0m.2-82.5h0m.3-5.9h0" stroke="#000" stroke-width="3.35" stroke-linecap="round" fill="none"/>
<rect x="162.0" y="496.9" width="792.0" height="50.5" fill="#ffa500" fill-opacity="0.1"/>
<rect x="954" y="504.9" width="349.0" height="46.8" fill="#ffa500" fill-opacity="0.1"/>
<rect x="105.5" y="498.7" width="1255.5" height="49.0" fill="#f00" fill-opacity="0.1"/>
<line x1="162.0" y1="521.2" x2="954" y2="521.2" stroke="#ffa500" stroke-width="2.78"/>
<line x1="953" y1="528.4" x2="1304.5" y2="528.4" stroke="#ffa500" stroke-width="2.78"/>
<line x1="105.5" y1="523" x2="1361" y2="523" stroke="#f00" stroke-width="2.08"/>
<line x1="162.0" y1="666.5" x2="162.0" y2="380.5" stroke="#800080" stroke-width="2.08" stroke-dasharray="2.08 3.44" stroke-dashoffset="-0.35"/><line x1="954.0" y1="666.5" x2="954.0" y2="380.5" stroke="#800080" stroke-width="2.08" stroke-dasharray="2.08 3.44" stroke-dashoffset="-0.35"/><line x1="1303.0" y1="666.5" x2="1303.0" y2="380.5" stroke="#800080" stroke-width="2.08" stroke-dasharray="2.08 3.44" stroke-dashoffset="-0.35"/>
</g>
<text x="557" y="656.8" text-anchor="middle">5398</text>
<text x="1127.5" y="636.8" text-anchor="middle">6285</text>
<rect x="105.5" y="380.5" width="1380.0" height="286.0" fill="none" stroke="#000" stroke-width="1.11"/>
<line x1="162.5" y1="666.5" x2="162.5" y2="671.36" stroke="#000" stroke-width="1.11"/><text x="162.0" y="686.5" text-anchor="middle">0</text><line x1="320.5" y1="666.5" x2="320.5" y2="671.36" stroke="#000" stroke-width="1.11"/><text x="320.2" y="686.5" text-anchor="middle">10000</text><line x1="479.5" y1="666.5" x2="479.5" y2="671.36" stroke="#000" stroke-width="1.11"/><text x="478.5" y="686.5" text-anchor="middle">20000</text><line x1="637.5" y1="666.5" x2="637.5" y2="671.36" stroke="#000" stroke-width="1.11"/><text x="636.7" y="686.5" text-anchor="middle">30000</text><line x1="795.5" y1="666.5" x2="795.5" y2="671.36" stroke="#000" stroke-width="1.11"/><text x="795.0" y="686.5" text-anchor="middle">40000</text><line x1="953.5" y1="666.5" x2="953.5" y2="671.36" stroke="#000" stroke-width="1.11"/><text x="953.2" y="686.5" text-anchor="middle">50000</text><line x1="1112.5" y1="666.5" x2="1112.5" y2="671.36" stroke="#000" stroke-width="1.11"/><text x="1111.5" y="686.5" text-anchor="middle">60000</text><line x1="1270.5" y1="666.5" x2="1270.5" y2="671.36" stroke="#000" stroke-width="1.11"/><text x="1269.8" y="686.5" text-anchor="middle">70000</text><line x1="1428.5" y1="666.5" x2="1428.5" y2="671.36" stroke="#000" stroke-width="1.11"/><text x="1428.0" y="686.5" text-anchor="middle">80000</text>
<line x1="105.5" y1="384.5" x2="100.64" y2="384.5" stroke="#000" stroke-width="1.11"/><text x="95.2" y="389.2" text-anchor="end">7.97</text><line x1="105.5" y1="423.5" x2="100.64" y2="423.5" stroke="#000" stroke-width="1.11"/><text x="95.2" y="428.7" text-anchor="end">7.96</text><line x1="105.5" y1="463.5" x2="100.64" y2="463.5" stroke="#000" stroke-width="1.11"/><text x="95.2" y="468.2" text-anchor="end">7.95</text><line x1="105.5" y1="502.5" x2="100.64" y2="502.5" stroke="#000" stroke-width="1.11"/><text x="95.2" y="507.8" text-anchor="end">7.94</text><line x1="105.5" y1="542.5" x2="100.64" y2="542.5" stroke="#000" stroke-width="1.11"/><text x="95.2" y="547.4" text-anchor="end">7.93</text><line x1="105.5" y1="582.5" x2="100.64" y2="582.5" stroke="#000" stroke-width="1.11"/><text x="95.2" y="586.9" text-anchor="end">7.92</text><line x1="105.5" y1="621.5" x2="100.64" y2="621.5" stroke="#000" stroke-width="1.11"/><text x="95.2" y="626.4" text-anchor="end">7.91</text><line x1="105.5" y1="661.5" x2="100.64" y2="661.5" stroke="#000" stroke-width="1.11"/><text x="95.2" y="666.0" text-anchor="end">7.90</text>
<text x="795.0" y="371.5" text-anchor="middle" font-size="16.67px">Magnitude Estimates</text>
<rect x="1365.6" y="387.4" width="113.0" height="48.0" rx="2.8" ry="2.8" fill="#fff" fill-opacity="0.8" stroke="#ccc" stroke-opacity="0.8" stroke-width="1.11"/>
<line x1="1370.4" y1="399.5" x2="1398.2" y2="399.5" stroke="#ffa500" stroke-width="2.9" stroke-linecap="square"/>
<text x="1410" y="404">mag<tspan font-size="9.72px" font-style="italic" dy="2.1">OBSID</tspan></text>
<line x1="1370.0" y1="422.1" x2="1397.8" y2="422.1" stroke="#f00" stroke-width="2.08" stroke-linecap="square"/>
<text x="1409.2" y="427">mag</text>
<rect x="1348.4" y="613.2" width="130.19999999999982" height="46.19999999999993" rx="2.8" ry="2.8" fill="#fff" fill-opacity="0.8" stroke="#ccc" stroke-opacity="0.8" stroke-width="1.11"/>
<circle cx="1367.6" cy="626.4" r="1.65" fill="#ffa500"/>
<text x="1393.0" y="630.0">Highlighted</text>
<circle cx="1367.6" cy="647.3" r="1.65" fill="#000"/>
<text x="1393.0" y="650.9">OK</text>
<clipPath id="c3"><rect x="105.5" y="725.5" width="1380.0" height="286.0"/></clipPath>
<g clip-path="url(#c3)">
<rect x="161.0" y="1006.6" width="1143.0" height="4.4" fill="#000"/>
<path d="M162.0 1007.7h0M164.2 1007.4h0M166.4 1007.5h0M168.6 1007.6h0M170.8 1007.5h0M173.0 1007.7h0M175.2 1007.8h0M177.4 1007.4h0M179.6 1007.8h0M181.8 1007.7h0M184.0 1007.7h0M186.2 1007.8h0M188.4 1008.0h0M190.6 1007.5h0M192.8 1007.9h0M195.0 1007.9h0M197.2 1007.7h0M199.4 1007.6h0M201.6 1007.4h0M203.8 1007.7h0M206.0 1007.4h0M208.2 1007.5h0M210.4 1007.5h0M212.6 1007.9h0M214.8 1007.6h0M217.0 1007.7h0M219.2 1007.4h0M221.4 1007.9h0M223.6 1007.6h0M225.8 1007.9h0M228.0 1007.6h0M230.2 1007.8h0M232.4 1007.9h0M234.6 1007.5h0M236.8 1007.6h0M239.0 1007.6h0M241.2 1007.6h0M243.4 1007.7h0M245.6 1007.4h0M247.8 1008.0h0M250.0 1007.9h0M252.2 1007.5h0M254.4 1007.8h0M256.6 1007.7h0M258.8 1007.4h0M261.0 1007.7h0M263.2 1007.5h0M265.4 1007.7h0M267.6 1007.7h0M269.8 1007.6h0M272.0 1007.5h0M274.2 1007.5h0M276.4 1007.7h0M278.6 1007.5h0M280.8 1008.0h0M283.0 1007.7h0M285.2 1007.9h0M287.4 1007.6h0M289.6 1007.5h0M291.8 1007.8h0M294.0 1008.0h0M296.2 1007.9h0M298.4 1007.6h0M300.6 1007.8h0M302.8 1007.6h0M305.0 1008.0h0M307.2 1007.8h0M309.4 1007.6h0M311.6 1007.9h0M313.8 1007.8h0M316.0 1007.4h0M318.2 1007.8h0M320.4 1007.8h0M322.6 1007.9h0M324.8 1007.9h0M327.0 1007.5h0M329.2 1007.9h0M331.4 1007.6h0M333.6 1007.5h0M335.8 1007.6h0M338.0 1007.7h0M340.2 1008.0h0M342.4 1007.4h0M344.6 1007.8h0M346.8 1008.0h0M349.0 1007.6h0M351.2 1007.4h0M353.4 1007.9h0M355.6 1007.8h0M357.8 1007.8h0M360.0 1007.7h0M362.2 1007.7h0M364.4 1007.7h0M366.6 1008.0h0M368.8 1007.5h0M371.0 1007.9h0M373.2 1007.5h0M375.4 1007.7h0M377.6 1007.7h0M379.8 1007.5h0M382.0 1007.9h0M384.2 1007.4h0M386.4 1008.0h0M388.6 1007.5h0M390.8 1007.4h0M393.0 1007.8h0M395.2 1007.7h0M397.4 1007.6h0M399.6 1007.7h0M401.8 1007.6h0M404.0 1007.7h0M406.2 1007.6h0M408.4 1007.6h0M410.6 1007.7h0M412.8 1007.5h0M415.0 1007.7h0M417.2 1007.4h0M419.4 1007.5h0M421.6 1007.9h0M423.8 1007.8h0M426.0 1007.7h0M428.2 1007.5h0M430.4 1007.5h0M432.6 1007.9h0M434.8 1007.5h0M437.0 1007.9h0M439.2 1008.0h0M441.4 1007.4h0M443.6 1008.0h0M445.8 1007.9h0M448.0 1008.0h0M450.2 1007.4h0M452.4 1007.8h0M454.6 1007.7h0M456.8 1007.7h0M459.0 1007.5h0M461.2 1007.9h0M463.4 1007.9h0M465.6 1007.7h0M467.8 1007.6h0M470.0 1007.9h0M472.2 1008.0h0M474.4 1007.6h0M476.6 1007.7h0M478.8 1007.9h0M481.0 1007.8h0M483.2 1007.4h0M485.4 1008.0h0M487.6 1007.9h0M489.8 1007.7h0M492.0 1008.0h0M494.2 1008.0h0M496.4 1007.6h0M498.6 1007.6h0M500.8 1007.7h0M503.0 1007.5h0M505.2 1007.4h0M507.4 1007.8h0M509.6 1007.4h0M511.8 1007.6h0M514.0 1007.4h0M516.2 1007.4h0M518.4 1007.4h0M520.6 1007.7h0M522.8 1007.5h0M525.0 1007.5h0M527.2 1007.8h0M529.4 1008.0h0M531.6 1007.9h0M533.8 1007.7h0M536.0 1008.0h0M538.2 1007.6h0M540.4 1007.8h0M542.6 1007.4h0M544.8 1008.0h0M547.0 1007.7h0M549.2 1007.8h0M551.4 1007.4h0M553.6 1007.4h0M555.8 1007.7h0M558.0 1008.0h0M560.2 1007.5h0M562.4 1007.4h0M564.6 1008.0h0M566.8 1007.5h0M569.0 1008.0h0M571.2 1008.0h0M573.4 1007.4h0M575.6 1007.8h0M577.8 1007.7h0M580.0 1007.6h0M582.2 1007.8h0M584.4 1007.5h0M586.6 1007.6h0M588.8 1007.6h0M591.0 1007.6h0M593.2 1007.9h0M595.4 1007.9h0M597.6 1007.6h0M599.8 1007.5h0M602.0 1007.8h0M604.2 1007.4h0M606.4 1007.7h0M608.6 1007.7h0M610.8 1007.6h0M613.0 1007.9h0M615.2 1007.4h0M617.4 1007.5h0M619.6 1007.8h0M621.8 1007.5h0M624.0 1007.6h0M626.2 1007.5h0M628.4 1007.4h0M630.6 1007.8h0M632.8 1007.6h0M635.0 1007.8h0M637.2 1007.9h0M639.4 1007.7h0M641.6 1007.5h0M643.8 1007.6h0M646.0 1007.4h0M648.2 1007.5h0M650.4 1007.9h0M652.6 1007.5h0M654.8 1007.5h0M657.0 1008.0h0M659.2 1007.5h0M661.4 1007.9h0M663.6 1007.8h0M665.8 1007.5h0M668.0 1007.4h0M670.2 1007.6h0M672.4 1007.6h0M674.6 1007.7h0M676.8 1007.5h0M679.0 1007.5h0M681.2 1007.6h0M683.4 1007.6h0M685.6 1007.5h0M687.8 1007.6h0M690.0 1007.8h0M692.2 1007.7h0M694.4 1007.4h0M696.6 1007.9h0M698.8 1007.6h0M701.0 1007.7h0M703.2 1007.4h0M705.4 1007.5h0M707.6 1007.6h0M709.8 1007.8h0M712.0 1007.4h0M714.2 1007.7h0M716.4 1007.9h0M718.6 1007.9h0M720.8 1007.6h0M723.0 1007.5h0M725.2 1007.6h0M727.4 1007.5h0M729.6 1007.8h0M731.8 1007.6h0M734.0 1007.7h0M736.2 1007.4h0M738.4 1007.6h0M740.6 1008.0h0M742.8 1007.8h0M745.0 1008.0h0M747.2 1007.7h0M749.4 1007.8h0M751.6 1007.5h0M753.8 1008.0h0M756.0 1007.4h0M758.2 1007.5h0M760.4 1007.6h0M762.6 1007.9h0M764.8 1007.5h0M767.0 1007.7h0M769.2 1007.5h0M771.4 1008.0h0M773.6 1008.0h0M775.8 1007.6h0M778.0 1008.0h0M780.2 1008.0h0M782.4 1007.8h0M784.6 1007.5h0M786.8 1007.6h0M789.0 1007.6h0M791.2 1007.9h0M793.4 1007.7h0M795.6 1007.4h0M797.8 1007.6h0M800.0 1007.5h0M802.2 1007.6h0M804.4 1007.9h0M806.6 1007.8h0M808.8 1007.7h0M811.0 1007.5h0M813.2 1007.7h0M815.4 1007.4h0M817.6 1008.0h0M819.8 1008.0h0M822.0 1007.6h0M824.2 1007.8h0M826.4 1007.6h0M828.6 1007.6h0M830.8 1007.4h0M833.0 1007.6h0M835.2 1008.0h0M837.4 1007.6h0M839.6 1008.0h0M841.8 1007.8h0M844.0 1007.5h0M846.2 1007.9h0M848.4 1007.4h0M850.6 1007.8h0M852.8 1007.6h0M855.0 1007.5h0M857.2 1007.9h0M859.4 1007.6h0M861.6 1007.6h0M863.8 1007.5h0M866.0 1007.9h0M868.2 1007.4h0M870.4 1007.4h0M872.6 1007.6h0M874.8 1007.8h0M877.0 1007.8h0M879.2 1007.6h0M881.4 1007.8h0M883.6 1007.5h0M885.8 1007.8h0M888.0 1008.0h0M890.2 1007.7h0M892.4 1007.9h0M894.6 1007.8h0M896.8 1007.5h0M899.0 1007.5h0M901.2 1007.4h0M903.4 1007.9h0M905.6 1007.5h0M907.8 1007.8h0M910.0 1007.4h0M912.2 1007.4h0M914.4 1007.6h0M916.6 1007.4h0M918.8 1007.9h0M921.0 1007.8h0M923.2 1008.0h0M925.4 1007.9h0M927.6 1007.4h0M929.8 1008.0h0M932.0 1007.4h0M934.2 1007.7h0M936.4 1007.9h0M938.6 1007.6h0M940.8 1007.5h0M943.0 1007.5h0M945.2 1007.4h0M947.4 1007.6h0M949.6 1007.8h0M951.8 1007.4h0M954.0 1007.4h0M956.2 1007.6h0M958.4 1007.8h0M960.6 1007.6h0M962.8 1007.7h0M965.0 1007.4h0M967.2 1007.5h0M969.4 1007.9h0M971.6 1007.6h0M973.8 1007.4h0M976.0 1008.0h0M978.2 1007.4h0M980.4 1007.8h0M982.6 1007.4h0M984.8 1007.9h0M987.0 1007.9h0M989.2 1007.6h0M991.4 1007.9h0M993.6 1007.4h0M995.8 1007.8h0M998.0 1007.6h0M1000.2 1007.4h0M1002.4 1007.8h0M1004.6 1007.5h0M1006.8 1007.4h0M1009.0 1008.0h0M1011.2 1007.5h0M1013.4 1007.6h0M1015.6 1007.8h0M1017.8 1007.6h0M1020.0 1007.8h0M1022.2 1007.9h0M1024.4 1007.5h0M1026.6 1007.5h0M1028.8 1007.4h0M1031.0 1007.7h0M1033.2 1008.0h0M1035.4 1008.0h0M1037.6 1007.9h0M1039.8 1007.5h0M1042.0 1007.8h0M1044.2 1007.4h0M1046.4 1007.5h0M1048.6 1007.5h0M1050.8 1007.5h0M1053.0 1007.8h0M1055.2 1007.5h0M1057.4 1007.8h0M1059.6 1007.5h0M1061.8 1007.5h0M1064.0 1008.0h0M1066.2 1007.4h0M1068.4 1007.9h0M1070.6 1007.4h0M1072.8 1007.5h0M1075.0 1007.8h0M1077.2 1007.5h0M1079.4 1007.9h0M1081.6 1007.9h0M1083.8 1007.7h0M1086.0 1007.6h0M1088.2 1007.5h0M1090.4 1007.7h0M1092.6 1008.0h0M1094.8 1007.6h0M1097.0 1007.6h0M1099.2 1007.7h0M1101.4 1007.4h0M1103.6 1007.6h0M1105.8 1007.6h0M1108.0 1007.4h0M1110.2 1007.5h0M1112.4 1007.5h0M1114.6 1007.4h0M1116.8 1008.0h0M1119.0 1007.5h0M1121.2 1007.7h0M1123.4 1008.0h0M1125.6 1007.6h0M1127.8 1007.5h0M1130.0 1007.4h0M1132.2 1007.9h0M1134.4 1007.4h0M1136.6 1007.6h0M1138.8 1007.6h0M1141.0 1007.6h0M1143.2 1007.5h0M1145.4 1008.0h0M1147.6 1007.4h0M1149.8 1007.7h0M1152.0 1007.7h0M1154.2 1007.6h0M1156.4 1007.4h0M1158.6 1007.6h0M1160.8 1007.5h0M1163.0 1007.5h0M1165.2 1007.6h0M1167.4 1007.4h0M1169.6 1007.4h0M1171.8 1007.8h0M1174.0 1008.0h0M1176.2 1007.7h0M1178.4 1007.7h0M1180.6 1007.8h0M1182.8 1007.6h0M1185.0 1007.9h0M1187.2 1007.8h0M1189.4 1008.0h0M1191.6 1007.8h0M1193.8 1007.6h0M1196.0 1007.8h0M1198.2 1008.0h0M1200.4 1007.4h0M1202.6 1007.8h0M1204.8 1007.6h0M1207.0 1007.9h0M1209.2 1007.5h0M1211.4 1007.6h0M1213.6 1007.9h0M1215.8 1007.4h0M1218.0 1007.4h0M1220.2 1007.4h0M1222.4 1008.0h0M1224.6 1007.9h0M1226.8 1007.9h0M1229.0 1007.8h0M1231.2 1008.0h0M1233.4 1007.9h0M1235.6 1007.8h0M1237.8 1007.6h0M1240.0 1007.7h0M1242.2 1007.6h0M1244.4 1007.5h0M1246.6 1007.7h0M1248.8 1007.4h0M1251.0 1007.4h0M1253.2 1007.9h0M1255.4 1007.4h0M1257.6 1008.0h0M1259.8 1007.4h0M1262.0 1007.8h0M1264.2 1007.8h0M1266.4 1007.5h0M1268.6 1008.0h0M1270.8 1007.8h0M1273.0 1007.9h0M1275.2 1007.4h0M1277.4 1007.7h0M1279.6 1007.8h0M1281.8 1007.4h0M1284.0 1007.4h0M1286.2 1007.5h0M1288.4 1007.7h0M1290.6 1007.4h0M1292.8 1007.5h0M1295.0 1007.5h0M1297.2 1007.5h0M1299.4 1007.4h0M1301.6 1007.4h0" stroke="#000" stroke-width="2.6" stroke-linecap="round" fill="none" />
<line x1="105.5" y1="758.5" x2="1485.5" y2="758.5" stroke="#b0b0b0" stroke-width="1.11" stroke-dasharray="1.11 1.83"/>
<line x1="105.5" y1="791.5" x2="1485.5" y2="791.5" stroke="#b0b0b0" stroke-width="1.11" stroke-dasharray="1.11 1.83"/>
<line x1="105.5" y1="823.5" x2="1485.5" y2="823.5" stroke="#b0b0b0" stroke-width="1.11" stroke-dasharray="1.11 1.83"/>
<line x1="105.5" y1="856.5" x2="1485.5" y2="856.5" stroke="#b0b0b0" stroke-width="1.11" stroke-dasharray="1.11 1.83"/>
<line x1="105.5" y1="889.5" x2="1485.5" y2="889.5" stroke="#b0b0b0" stroke-width="1.11" stroke-dasharray="1.11 1.83"/>
<line x1="105.5" y1="921.5" x2="1485.5" y2="921.5" stroke="#b0b0b0" stroke-width="1.11" stroke-dasharray="1.11 1.83"/>
<line x1="105.5" y1="957.5" x2="1485.5" y2="957.5" stroke="#b0b0b0" stroke-width="1.11" stroke-dasharray="1.11 1.83"/>
<line x1="105.5" y1="983.5" x2="1485.5" y2="983.5" stroke="#b0b0b0" stroke-width="1.11" stroke-dasharray="1.11 1.83"/>
<line x1="105.5" y1="1009.5" x2="1485.5" y2="1009.5" stroke="#b0b0b0" stroke-width="1.11" stroke-dasharray="1.11 1.83"/>
<line x1="105.5" y1="954.4" x2="1485.5" y2="954.4" stroke="#000" stroke-width="1.39"/>
<line x1="162.0" y1="1011.5" x2="162.0" y2="725.5" stroke="#800080" stroke-width="2.08" stroke-dasharray="2.08 3.44" stroke-dashoffset="-2.25"/><line x1="954.0" y1="1011.5" x2="954.0" y2="725.5" stroke="#800080" stroke-width="2.08" stroke-dasharray="2.08 3.44" stroke-dashoffset="-2.25"/><line x1="1303.0" y1="1011.5" x2="1303.0" y2="725.5" stroke="#800080" stroke-width="2.08" stroke-dasharray="2.08 3.44" stroke-dashoffset="-2.25"/>
<circle cx="176.3" cy="856.5" r="1.15" fill="none" stroke="#000" stroke-width="1.1"/><path d="M224.2 856.5L226.2 855.3V857.7Z" fill="#000" stroke="#000" stroke-width="1.3" stroke-linejoin="round"/><path d="M231.4 856.5L229.4 855.3V857.7Z" fill="#000" stroke="#000" stroke-width="1.3" stroke-linejoin="round"/><circle cx="291.3" cy="856.5" r="1.15" fill="none" stroke="#000" stroke-width="1.1"/><path d="M296.4 856.5L294.4 855.3V857.7Z" fill="#000" stroke="#000" stroke-width="1.3" stroke-linejoin="round"/><circle cx="312.3" cy="856.5" r="1.15" fill="none" stroke="#000" stroke-width="1.1"/><circle cx="402" cy="856.5" r="1.15" fill="none" stroke="#000" stroke-width="1.1"/><circle cx="405" cy="856.5" r="1.15" fill="none" stroke="#000" stroke-width="1.1"/><circle cx="422.3" cy="856.5" r="1.8" fill="#000"/><circle cx="456.3" cy="856.5" r="1.15" fill="none" stroke="#000" stroke-width="1.1"/><path d="M565.9 856.5L567.9 855.3V857.7Z" fill="#000" stroke="#000" stroke-width="1.3" stroke-linejoin="round"/><circle cx="595.3" cy="856.5" r="1.15" fill="none" stroke="#000" stroke-width="1.1"/><path d="M772.2 856.5L774.2 855.3V857.7Z" fill="#000" stroke="#000" stroke-width="1.3" stroke-linejoin="round"/><circle cx="777.3" cy="856.5" r="1.15" fill="none" stroke="#000" stroke-width="1.1"/><circle cx="786.3" cy="856.5" r="1.15" fill="none" stroke="#000" stroke-width="1.1"/><path d="M814.4 856.5L812.4 855.3V857.7Z" fill="#000" stroke="#000" stroke-width="1.3" stroke-linejoin="round"/><circle cx="855.3" cy="856.5" r="1.8" fill="#000"/><circle cx="877.3" cy="856.5" r="1.15" fill="none" stroke="#000" stroke-width="1.1"/><circle cx="895.3" cy="856.5" r="1.15" fill="none" stroke="#000" stroke-width="1.1"/><path d="M994.4 856.5L992.4 855.3V857.7Z" fill="#000" stroke="#000" stroke-width="1.3" stroke-linejoin="round"/><path d="M1145.9 856.5L1147.9 855.3V857.7Z" fill="#000" stroke="#000" stroke-width="1.3" stroke-linejoin="round"/><path d="M1291.4 856.5L1289.4 855.3V857.7Z" fill="#000" stroke="#000" stroke-width="1.3" stroke-linejoin="round"/><circle cx="176.3" cy="889.5" r="1.15" fill="none" stroke="#000" stroke-width="1.1"/><path d="M224.2 889.5L226.2 888.3V890.7Z" fill="#000" stroke="#000" stroke-width="1.3" stroke-linejoin="round"/><path d="M231.4 889.5L229.4 888.3V890.7Z" fill="#000" stroke="#000" stroke-width="1.3" stroke-linejoin="round"/><circle cx="291.3" cy="889.5" r="1.15" fill="none" stroke="#000" stroke-width="1.1"/><path d="M296.4 889.5L294.4 888.3V890.7Z" fill="#000" stroke="#000" stroke-width="1.3" stroke-linejoin="round"/><circle cx="312.3" cy="889.5" r="1.15" fill="none" stroke="#000" stroke-width="1.1"/><circle cx="402" cy="889.5" r="1.15" fill="none" stroke="#000" stroke-width="1.1"/><circle cx="405" cy="889.5" r="1.15" fill="none" stroke="#000" stroke-width="1.1"/><circle cx="422.3" cy="889.5" r="1.8" fill="#000"/><circle cx="456.3" cy="889.5" r="1.15" fill="none" stroke="#000" stroke-width="1.1"/><path d="M565.9 889.5L567.9 888.3V890.7Z" fill="#000" stroke="#000" stroke-width="1.3" stroke-linejoin="round"/><circle cx="595.3" cy="889.5" r="1.15" fill="none" stroke="#000" stroke-width="1.1"/><path d="M772.2 889.5L774.2 888.3V890.7Z" fill="#000" stroke="#000" stroke-width="1.3" stroke-linejoin="round"/><circle cx="777.3" cy="889.5" r="1.15" fill="none" stroke="#000" stroke-width="1.1"/><circle cx="786.3" cy="889.5" r="1.15" fill="none" stroke="#000" stroke-width="1.1"/><path d="M814.4 889.5L812.4 888.3V890.7Z" fill="#000" stroke="#000" stroke-width="1.3" stroke-linejoin="round"/><circle cx="855.3" cy="889.5" r="1.8" fill="#000"/><circle cx="877.3" cy="889.5" r="1.15" fill="none" stroke="#000" stroke-width="1.1"/><circle cx="895.3" cy="889.5" r="1.15" fill="none" stroke="#000" stroke-width="1.1"/><path d="M994.4 889.5L992.4 888.3V890.7Z" fill="#000" stroke="#000" stroke-width="1.3" stroke-linejoin="round"/><path d="M1145.9 889.5L1147.9 888.3V890.7Z" fill="#000" stroke="#000" stroke-width="1.3" stroke-linejoin="round"/><path d="M1291.4 889.5L1289.4 888.3V890.7Z" fill="#000" stroke="#000" stroke-width="1.3" stroke-linejoin="round"/><path d="M811.8 889.5L809.8 888.3V890.7Z" fill="#000" stroke="#000" stroke-width="1.3" stroke-linejoin="round"/><path d="M923.8 889.5L921.8 888.3V890.7Z" fill="#000" stroke="#000" stroke-width="1.3" stroke-linejoin="round"/><path d="M951.2 889.5L953.2 888.3V890.7Z" fill="#000" stroke="#000" stroke-width="1.3" stroke-linejoin="round"/><circle cx="800.3" cy="758.5" r="1.15" fill="none" stroke="#000" stroke-width="1.1"/><path d="M832.4 758.5L830.4 757.3V759.7Z" fill="#000" stroke="#000" stroke-width="1.3" stroke-linejoin="round"/><path d="M835.1 758.5L833.1 757.3V759.7Z" fill="#000" stroke="#000" stroke-width="1.3" stroke-linejoin="round"/><rect x="992.6" y="789.8" width="3.4" height="3.4" fill="#000"/><path d="M176.3 955.9L177.9 958.9H174.7Z" fill="none" stroke="#f00" stroke-width="0.95" stroke-linejoin="round"/><path d="M225.3 956.1L226.7 958.7H223.9Z" fill="#f00" stroke="#f00" stroke-width="1.0" stroke-linejoin="round"/><path d="M230.3 956.1L231.7 958.7H228.9Z" fill="#f00" stroke="#f00" stroke-width="1.0" stroke-linejoin="round"/><path d="M291.3 955.9L292.9 958.9H289.7Z" fill="none" stroke="#f00" stroke-width="0.95" stroke-linejoin="round"/><path d="M295.3 956.1L296.7 958.7H293.9Z" fill="#f00" stroke="#f00" stroke-width="1.0" stroke-linejoin="round"/><path d="M312.3 955.9L313.9 958.9H310.7Z" fill="none" stroke="#f00" stroke-width="0.95" stroke-linejoin="round"/><path d="M402 955.9L403.6 958.9H400.4Z" fill="none" stroke="#f00" stroke-width="0.95" stroke-linejoin="round"/><path d="M405 955.9L406.6 958.9H403.4Z" fill="none" stroke="#f00" stroke-width="0.95" stroke-linejoin="round"/><path d="M422.3 956.1L423.7 958.7H420.9Z" fill="#f00" stroke="#f00" stroke-width="1.0" stroke-linejoin="round"/><path d="M456.3 955.9L457.9 958.9H454.7Z" fill="none" stroke="#f00" stroke-width="0.95" stroke-linejoin="round"/><path d="M567 956.1L568.4 958.7H565.6Z" fill="#f00" stroke="#f00" stroke-width="1.0" stroke-linejoin="round"/><path d="M595.3 955.9L596.9 958.9H593.7Z" fill="none" stroke="#f00" stroke-width="0.95" stroke-linejoin="round"/><path d="M773.3 956.1L774.7 958.7H771.9Z" fill="#f00" stroke="#f00" stroke-width="1.0" stroke-linejoin="round"/><path d="M777.3 955.9L778.9 958.9H775.7Z" fill="none" stroke="#f00" stroke-width="0.95" stroke-linejoin="round"/><path d="M786.3 955.9L787.9 958.9H784.7Z" fill="none" stroke="#f00" stroke-width="0.95" stroke-linejoin="round"/><path d="M813.3 956.1L814.7 958.7H811.9Z" fill="#f00" stroke="#f00" stroke-width="1.0" stroke-linejoin="round"/><path d="M855.3 956.1L856.7 958.7H853.9Z" fill="#f00" stroke="#f00" stroke-width="1.0" stroke-linejoin="round"/><path d="M877.3 955.9L878.9 958.9H875.7Z" fill="none" stroke="#f00" stroke-width="0.95" stroke-linejoin="round"/><path d="M895.3 955.9L896.9 958.9H893.7Z" fill="none" stroke="#f00" stroke-width="0.95" stroke-linejoin="round"/><path d="M993.3 956.1L994.7 958.7H991.9Z" fill="#f00" stroke="#f00" stroke-width="1.0" stroke-linejoin="round"/><path d="M1147 956.1L1148.4 958.7H1145.6Z" fill="#f00" stroke="#f00" stroke-width="1.0" stroke-linejoin="round"/><path d="M1290.3 956.1L1291.7 958.7H1288.9Z" fill="#f00" stroke="#f00" stroke-width="1.0" stroke-linejoin="round"/><path d="M810.7 956.1L812.1 958.7H809.3Z" fill="#f00" stroke="#f00" stroke-width="1.0" stroke-linejoin="round"/><path d="M922.7 956.1L924.1 958.7H921.3Z" fill="#f00" stroke="#f00" stroke-width="1.0" stroke-linejoin="round"/><path d="M952.3 956.1L953.7 958.7H950.9Z" fill="#f00" stroke="#f00" stroke-width="1.0" stroke-linejoin="round"/><path d="M800.3 956.1L801.7 958.7H798.9Z" fill="#f00" stroke="#f00" stroke-width="1.0" stroke-linejoin="round"/><path d="M831.3 956.1L832.7 958.7H829.9Z" fill="#f00" stroke="#f00" stroke-width="1.0" stroke-linejoin="round"/><path d="M834 956.1L835.4 958.7H832.6Z" fill="#f00" stroke="#f00" stroke-width="1.0" stroke-linejoin="round"/><path d="M994.7 956.1L996.1 958.7H993.3Z" fill="#f00" stroke="#f00" stroke-width="1.0" stroke-linejoin="round"/><circle cx="291.3" cy="989.3" r="1.35" fill="#f00"/>
<path d="M176.3 1003.6h0M225.3 1001.3h0M230.3 1005.5h0M402.0 1003.5h0M405.0 1002.6h0M422.3 1005.6h0M456.3 1005.6h0M595.3 1001.3h0M773.3 1003.3h0M777.3 1003.3h0M812.3 1001.3h0M831.3 1002.3h0M895.3 1001.3h0M170.0 1005.4h0M185.0 1005.6h0M300.0 1005.7h0M306.0 1005.6h0M328.0 1005.7h0M353.0 1005.8h0M360.0 1005.7h0M393.0 1005.7h0M430.0 1005.8h0M446.0 1005.7h0M459.0 1005.8h0M507.0 1005.8h0M525.0 1003.8h0M587.0 1005.6h0M601.0 1005.8h0M617.0 1005.7h0M623.0 1005.8h0M655.0 1005.7h0M660.0 1005.7h0M663.0 1005.7h0M683.0 1005.7h0M709.0 1005.7h0M715.0 1005.6h0M721.0 1005.7h0M749.0 1005.6h0M781.0 1005.3h0M786.3 1005.7h0M877.3 1005.4h0M881.0 1005.6h0M1054.3 1003.5h0M1062.0 1005.6h0M1065.0 1005.4h0M1068.0 1005.7h0M1080.3 1005.5h0M1147.0 1003.6h0M1170.0 1005.8h0M1290.3 1003.6h0M963.0 1005.7h0M967.0 1005.7h0M977.0 1005.4h0M855.3 1005.8h0" stroke="#000" stroke-width="2.5" stroke-linecap="round" fill="none" />
</g>
<rect x="105.5" y="725.5" width="1380.0" height="286.0" fill="none" stroke="#000" stroke-width="1.11"/>
<line x1="162.5" y1="1011.5" x2="162.5" y2="1016.36" stroke="#000" stroke-width="1.11"/><text x="162.0" y="1031.5" text-anchor="middle">0</text><line x1="320.5" y1="1011.5" x2="320.5" y2="1016.36" stroke="#000" stroke-width="1.11"/><text x="320.2" y="1031.5" text-anchor="middle">10000</text><line x1="479.5" y1="1011.5" x2="479.5" y2="1016.36" stroke="#000" stroke-width="1.11"/><text x="478.5" y="1031.5" text-anchor="middle">20000</text><line x1="637.5" y1="1011.5" x2="637.5" y2="1016.36" stroke="#000" stroke-width="1.11"/><text x="636.7" y="1031.5" text-anchor="middle">30000</text><line x1="795.5" y1="1011.5" x2="795.5" y2="1016.36" stroke="#000" stroke-width="1.11"/><text x="795.0" y="1031.5" text-anchor="middle">40000</text><line x1="953.5" y1="1011.5" x2="953.5" y2="1016.36" stroke="#000" stroke-width="1.11"/><text x="953.2" y="1031.5" text-anchor="middle">50000</text><line x1="1112.5" y1="1011.5" x2="1112.5" y2="1016.36" stroke="#000" stroke-width="1.11"/><text x="1111.5" y="1031.5" text-anchor="middle">60000</text><line x1="1270.5" y1="1011.5" x2="1270.5" y2="1016.36" stroke="#000" stroke-width="1.11"/><text x="1269.8" y="1031.5" text-anchor="middle">70000</text><line x1="1428.5" y1="1011.5" x2="1428.5" y2="1016.36" stroke="#000" stroke-width="1.11"/><text x="1428.0" y="1031.5" text-anchor="middle">80000</text>
<line x1="105.5" y1="758.5" x2="100.64" y2="758.5" stroke="#000" stroke-width="1.11"/>
<text x="95.6" y="764.3" text-anchor="end">not Kalman</text>
<line x1="105.5" y1="791.5" x2="100.64" y2="791.5" stroke="#000" stroke-width="1.11"/>
<text x="95.6" y="796.4" text-anchor="end">not track</text>
<line x1="105.5" y1="823.5" x2="100.64" y2="823.5" stroke="#000" stroke-width="1.11"/>
<text x="95.6" y="829.4" text-anchor="end">Sat. pixel.</text>
<line x1="105.5" y1="856.5" x2="100.64" y2="856.5" stroke="#000" stroke-width="1.11"/>
<text x="95.6" y="862.3" text-anchor="end">Ion. rad.</text>
<line x1="105.5" y1="889.5" x2="100.64" y2="889.5" stroke="#000" stroke-width="1.11"/>
<text x="95.6" y="894.6" text-anchor="end">dr &gt; 5</text>
<line x1="105.5" y1="921.5" x2="100.64" y2="921.5" stroke="#000" stroke-width="1.11"/>
<text x="95.6" y="927.3" text-anchor="end">OBS not OK</text>
<line x1="105.5" y1="957.5" x2="100.64" y2="957.5" stroke="#000" stroke-width="1.11"/>
<text x="95.2" y="962.3" text-anchor="end">10</text>
<line x1="105.5" y1="983.5" x2="100.64" y2="983.5" stroke="#000" stroke-width="1.11"/>
<text x="95.2" y="988.3" text-anchor="end">5</text>
<line x1="105.5" y1="1009.5" x2="100.64" y2="1009.5" stroke="#000" stroke-width="1.11"/>
<text x="95.2" y="1014.4" text-anchor="end">0</text>
<line x1="105.5" y1="970.5" x2="102.72" y2="970.5" stroke="#000" stroke-width="0.83"/>
<line x1="105.5" y1="996.5" x2="102.72" y2="996.5" stroke="#000" stroke-width="0.83"/>
<text transform="translate(68.6 983.4) rotate(-90)" text-anchor="middle">dr</text>
</svg>
</body></html>
